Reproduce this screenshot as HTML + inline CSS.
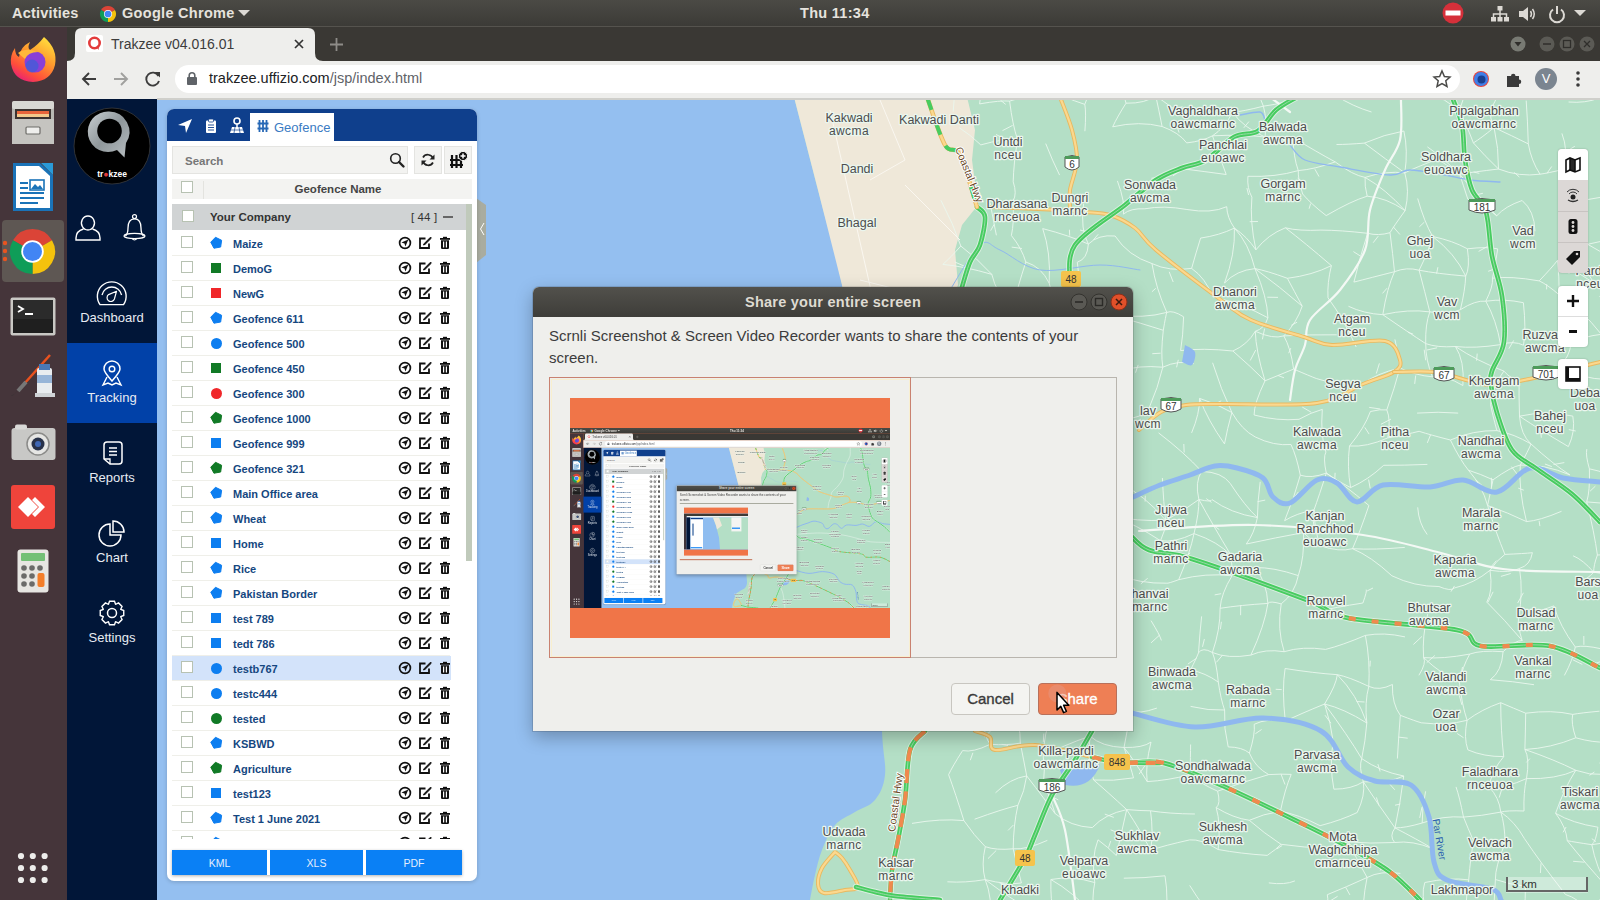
<!DOCTYPE html><html><head><meta charset="utf-8"><style>
*{box-sizing:border-box;margin:0;padding:0}
html,body{width:1600px;height:900px;overflow:hidden;background:#94bff0;font-family:"Liberation Sans",sans-serif}
.a{position:absolute}
.t{position:absolute;white-space:nowrap}
svg{position:absolute;overflow:visible}
</style></head><body><svg style="left:0;top:0" width="1600" height="900" viewBox="0 0 1600 900"><rect x="157" y="99" width="1443" height="801" fill="#b4dfc6"/><path d="M794 97 C798.0 112.5 810.0 158.7 818 190 C826.0 221.3 835.0 250.0 842 285 C849.0 320.0 855.0 360.8 860 400 C865.0 439.2 868.7 480.0 872 520 C875.3 560.0 878.3 604.8 880 640 C881.7 675.2 881.2 708.5 882 731 C882.8 753.5 886.2 763.5 885 775 C883.8 786.5 880.0 793.8 875 800 C870.0 806.2 861.7 807.8 855 812 C848.3 816.2 840.5 818.7 835 825 C829.5 831.3 825.3 841.7 822 850 C818.7 858.3 817.0 866.7 815 875 C813.0 883.3 810.8 895.8 810 900 L157 900 L157 99 L794 99 Z" fill="#94bff0"/><path d="M794 97 L967 97 L967 97 L975 130 L972 160 L978 205 L962 225 L955 250 L958 285 L940 330 L900 380 L870 420 L872 520 L860 400 L842 285 L818 190 L794 97 Z" fill="#efe8d9"/><path d="M926.6 71.1 Q946.7 74.7 960.5 74.5 M946.7 74.7 L938.9 76.2 M912.0 823.4 Q940.7 818.3 963.9 820.6 M958.9 -0.2 Q969.8 2.4 983.8 -1.0 M945.8 41.2 Q960.9 43.4 986.2 44.6 M960.5 74.5 Q954.3 89.1 953.2 111.7 M959.1 127.6 Q971.1 135.3 980.8 144.9 M940.9 200.3 Q953.1 223.2 960.8 246.0 M960.8 246.0 Q950.4 257.8 942.8 264.4 M960.8 246.0 Q976.4 257.6 991.8 274.4 M942.8 264.4 Q964.9 266.4 991.8 274.4 M964.9 266.4 L954.8 262.0 M941.7 385.7 Q966.4 395.9 981.0 412.7 M966.4 395.9 L960.9 390.9 M945.0 411.1 Q964.3 412.3 981.0 412.7 M945.0 411.1 Q954.4 432.6 961.0 447.5 M961.0 447.5 Q954.6 459.1 944.7 480.0 M954.6 459.1 L945.2 462.0 M950.3 498.4 Q978.6 497.0 995.5 504.0 M978.6 497.0 L973.5 491.4 M955.1 572.7 Q979.6 574.8 993.7 586.4 M954.5 616.7 Q976.7 614.2 988.2 613.1 M944.3 637.1 Q957.3 655.3 976.1 676.7 M956.7 679.2 Q964.0 677.7 976.1 676.7 M962.6 750.6 Q972.9 752.8 990.1 744.3 M972.9 752.8 L970.3 760.2 M962.6 750.6 Q952.1 767.0 948.6 774.7 M948.6 774.7 Q955.4 793.2 963.9 820.6 M963.9 820.6 Q974.1 835.6 985.3 846.7 M947.4 881.8 Q965.0 883.0 985.2 879.6 M984.2 -26.3 Q1010.2 -24.2 1031.3 -22.6 M1010.2 -24.2 L1019.0 -30.7 M983.8 -1.0 Q985.0 19.4 986.2 44.6 M986.2 44.6 Q1006.2 44.2 1027.9 37.6 M986.2 44.6 Q980.6 55.6 982.3 72.9 M982.3 72.9 Q1006.7 82.2 1024.8 79.9 M1006.7 82.2 L1004.3 90.5 M982.3 72.9 Q982.6 82.8 979.6 103.9 M979.6 103.9 Q1000.5 100.2 1009.6 101.1 M1000.5 100.2 L1005.7 104.4 M980.8 144.9 Q1003.8 138.3 1017.6 139.7 M1003.8 138.3 L996.0 134.5 M990.2 202.9 Q994.1 224.4 996.4 235.3 M994.1 224.4 L990.6 230.7 M991.8 274.4 Q996.1 293.2 1012.0 309.6 M984.8 295.5 Q983.3 315.9 984.1 334.8 M984.1 334.8 Q988.9 363.1 984.6 384.9 M984.6 384.9 Q1005.1 384.9 1014.1 381.5 M1005.1 384.9 L997.2 383.8 M981.0 412.7 Q989.5 421.4 990.1 435.9 M990.1 435.9 Q999.7 443.9 1010.9 441.2 M990.1 435.9 Q985.4 451.0 983.9 467.2 M985.4 451.0 L978.9 453.3 M990.1 435.9 Q997.6 454.6 1008.4 484.6 M983.9 467.2 Q1001.0 473.7 1008.4 484.6 M1001.0 473.7 L994.3 471.6 M995.5 504.0 Q984.5 526.7 984.1 540.2 M984.1 540.2 Q989.0 560.6 993.7 586.4 M993.7 586.4 Q991.8 600.6 988.2 613.1 M976.4 655.5 Q1001.4 651.8 1015.2 646.2 M976.1 676.7 Q995.5 676.3 1011.0 681.6 M976.1 676.7 Q982.2 701.9 983.0 719.4 M983.0 719.4 Q984.4 736.9 990.1 744.3 M984.4 736.9 L992.0 729.5 M990.1 744.3 Q1008.0 745.5 1020.3 743.1 M1008.0 745.5 L1001.7 744.3 M995.5 792.8 Q1009.9 778.5 1026.7 775.9 M974.6 819.2 Q1001.5 809.4 1017.9 805.3 M985.3 846.7 Q996.2 850.5 1013.2 848.8 M996.2 850.5 L988.0 858.6 M985.3 846.7 Q981.0 864.9 985.2 879.6 M985.2 879.6 Q1007.2 885.2 1021.4 883.0 M1007.2 885.2 L999.4 882.9 M985.2 879.6 Q992.6 898.2 990.1 920.5 M985.2 879.6 Q1012.2 899.8 1028.4 908.5 M990.1 920.5 Q1011.2 914.1 1028.4 908.5 M1031.3 -22.6 Q1042.7 -28.3 1062.4 -42.3 M1031.8 -2.5 Q1049.2 -3.3 1065.3 0.6 M1031.8 -2.5 Q1033.3 15.0 1027.9 37.6 M1031.8 -2.5 Q1036.3 13.7 1051.8 36.7 M1036.3 13.7 L1029.5 17.2 M1027.9 37.6 Q1032.2 53.9 1024.8 79.9 M1024.8 79.9 Q1045.1 77.8 1062.7 79.1 M1045.1 77.8 L1051.8 84.9 M1009.6 101.1 Q1034.0 93.8 1051.9 90.3 M1009.6 101.1 Q1012.6 125.4 1017.6 139.7 M1012.6 125.4 L1002.5 130.6 M1017.6 139.7 Q1013.6 163.4 1013.2 181.8 M1013.2 181.8 Q1017.3 194.0 1013.0 200.9 M1013.0 200.9 Q1014.3 222.6 1011.4 235.5 M1011.4 235.5 Q1021.9 248.5 1025.8 262.0 M1021.9 248.5 L1011.7 247.1 M1025.8 262.0 Q1041.5 266.8 1049.2 283.2 M1025.8 262.0 Q1017.3 288.2 1012.0 309.6 M1012.0 309.6 Q1033.8 316.6 1057.4 314.3 M1014.1 381.5 Q1033.1 369.1 1043.9 368.3 M1014.1 381.5 Q1024.8 399.5 1025.5 414.6 M1024.8 399.5 L1032.5 402.8 M1025.5 414.6 Q1036.1 411.1 1044.7 418.1 M1010.9 441.2 Q1026.5 446.8 1049.9 441.7 M1010.9 441.2 Q1007.6 461.4 1008.4 484.6 M1030.7 519.5 Q1053.0 511.6 1064.7 511.6 M1030.7 519.5 Q1014.1 531.9 1008.6 540.4 M1014.1 531.9 L1018.8 527.8 M1008.6 540.4 Q1025.9 544.4 1054.0 553.7 M1020.9 578.8 Q1012.3 597.4 1010.7 618.9 M1010.7 618.9 Q1013.4 628.2 1015.2 646.2 M1015.2 646.2 Q1038.3 648.1 1050.8 644.3 M1011.0 681.6 Q1033.9 682.4 1053.4 676.6 M1011.0 681.6 Q1013.7 690.9 1011.1 704.1 M1011.1 704.1 Q1020.7 723.2 1020.3 743.1 M1020.3 743.1 Q1023.7 760.2 1026.7 775.9 M1026.7 775.9 Q1024.8 790.9 1017.9 805.3 M1026.7 775.9 Q1045.8 800.6 1055.1 813.6 M1017.9 805.3 Q1013.4 825.0 1013.2 848.8 M1013.4 825.0 L1008.1 830.4 M1013.2 848.8 Q1025.9 850.0 1047.3 840.4 M1013.2 848.8 Q1016.7 864.3 1021.4 883.0 M1062.4 -42.3 Q1064.1 -18.6 1065.3 0.6 M1062.4 -42.3 Q1068.7 -18.5 1076.2 -2.2 M1065.3 0.6 Q1074.7 -6.3 1076.2 -2.2 M1065.3 0.6 Q1056.1 15.4 1051.8 36.7 M1051.8 36.7 Q1052.0 52.4 1062.7 79.1 M1052.0 52.4 L1056.3 56.9 M1062.7 79.1 Q1080.7 77.4 1090.2 79.1 M1051.9 90.3 Q1062.8 97.1 1084.8 104.4 M1045.7 143.6 Q1052.6 161.0 1059.6 175.1 M1042.7 228.6 Q1069.7 235.6 1088.4 244.1 M1069.7 235.6 L1069.4 229.7 M1042.7 228.6 Q1051.0 252.2 1049.2 283.2 M1049.2 283.2 Q1054.1 301.0 1057.4 314.3 M1057.4 314.3 Q1047.2 329.5 1043.1 338.0 M1047.2 329.5 L1042.2 332.5 M1043.1 338.0 Q1067.4 343.8 1095.1 338.2 M1043.1 338.0 Q1037.9 350.3 1043.9 368.3 M1037.9 350.3 L1033.4 346.1 M1043.9 368.3 Q1073.1 371.8 1096.6 371.7 M1073.1 371.8 L1070.4 378.2 M1043.9 368.3 Q1045.1 388.7 1044.7 418.1 M1045.1 388.7 L1040.2 383.8 M1044.7 418.1 Q1058.9 410.0 1082.9 412.3 M1044.7 418.1 Q1041.5 428.2 1049.9 441.7 M1049.9 441.7 Q1054.1 464.4 1057.7 485.3 M1054.1 464.4 L1062.9 463.7 M1057.7 485.3 Q1063.4 502.5 1064.7 511.6 M1057.7 485.3 Q1065.4 505.4 1083.6 517.7 M1064.7 511.6 Q1079.3 518.4 1083.6 517.7 M1079.3 518.4 L1083.1 515.0 M1064.7 511.6 Q1055.9 529.2 1054.0 553.7 M1064.7 511.6 Q1085.4 526.0 1094.9 547.4 M1054.0 553.7 Q1079.5 551.3 1094.9 547.4 M1051.5 573.2 Q1060.5 582.4 1077.4 584.3 M1051.5 573.2 Q1061.5 589.3 1059.7 606.2 M1059.7 606.2 Q1070.0 607.7 1077.2 615.0 M1050.8 644.3 Q1055.4 664.8 1053.4 676.6 M1053.4 676.6 Q1047.4 690.9 1052.3 712.8 M1052.3 712.8 Q1043.8 733.5 1043.2 756.1 M1043.8 733.5 L1043.3 741.9 M1043.2 756.1 Q1062.6 745.7 1089.9 736.1 M1043.2 756.1 Q1045.3 770.1 1043.5 782.7 M1043.5 782.7 Q1049.6 795.4 1055.1 813.6 M1049.6 795.4 L1058.3 799.9 M1055.1 813.6 Q1070.5 826.5 1092.3 827.6 M1050.9 879.5 Q1072.1 875.4 1094.8 882.6 M1072.1 875.4 L1073.2 869.7 M1050.9 879.5 Q1050.4 901.1 1053.6 911.5 M1050.4 901.1 L1042.8 905.5 M1050.9 879.5 Q1073.2 892.1 1094.0 915.1 M1053.6 911.5 Q1079.8 912.6 1094.0 915.1 M1079.8 912.6 L1076.4 918.8 M1094.0 -34.3 Q1105.2 -32.6 1120.7 -35.5 M1094.0 -34.3 Q1079.6 -14.8 1076.2 -2.2 M1079.6 -14.8 L1078.2 -4.0 M1076.2 -2.2 Q1091.7 13.1 1099.2 22.2 M1091.7 13.1 L1089.2 23.7 M1099.2 22.2 Q1119.2 19.5 1127.6 23.7 M1119.2 19.5 L1115.1 8.3 M1099.2 22.2 Q1100.2 45.7 1112.8 76.0 M1090.2 79.1 Q1089.5 93.8 1084.8 104.4 M1089.5 93.8 L1095.4 89.7 M1084.8 104.4 Q1086.3 112.5 1084.9 131.2 M1083.6 203.9 Q1080.1 230.0 1088.4 244.1 M1080.1 230.0 L1089.0 232.5 M1088.4 244.1 Q1098.2 234.3 1115.1 236.0 M1098.2 234.3 L1093.4 239.9 M1088.4 244.1 Q1087.4 259.2 1077.3 262.2 M1077.3 262.2 Q1079.2 281.4 1082.0 300.5 M1082.0 300.5 Q1101.1 310.9 1113.0 315.0 M1082.0 300.5 Q1084.0 323.0 1095.1 338.2 M1096.6 371.7 Q1105.0 366.1 1120.4 371.1 M1096.6 371.7 Q1092.1 388.0 1082.9 412.3 M1082.9 412.3 Q1105.6 420.7 1126.2 418.3 M1105.6 420.7 L1106.7 415.5 M1082.9 412.3 Q1082.8 428.0 1078.1 453.6 M1078.1 453.6 Q1102.4 451.9 1121.8 446.5 M1078.1 453.6 Q1085.4 467.3 1096.0 471.9 M1085.4 467.3 L1091.9 463.4 M1077.4 584.3 Q1094.7 575.4 1114.9 574.3 M1077.4 584.3 Q1080.7 594.2 1077.2 615.0 M1089.3 656.3 Q1103.2 647.9 1124.2 646.5 M1089.3 656.3 Q1098.4 669.7 1119.3 681.8 M1098.4 720.1 Q1119.9 714.8 1130.2 710.6 M1098.4 720.1 Q1091.0 724.3 1089.9 736.1 M1091.0 724.3 L1084.5 722.5 M1089.9 736.1 Q1101.8 746.8 1124.0 747.5 M1089.9 736.1 Q1087.4 763.9 1093.7 780.0 M1087.4 763.9 L1088.5 758.7 M1093.7 780.0 Q1113.1 781.4 1133.5 777.9 M1093.7 780.0 Q1107.7 792.1 1126.7 809.6 M1092.3 827.6 Q1104.8 814.1 1126.7 809.6 M1104.8 814.1 L1113.8 817.4 M1098.0 839.8 Q1108.5 847.6 1116.3 855.5 M1108.5 847.6 L1110.7 841.1 M1098.0 839.8 Q1090.9 858.1 1094.8 882.6 M1094.8 882.6 Q1091.6 897.1 1094.0 915.1 M1094.0 915.1 Q1097.1 919.1 1111.5 925.8 M1097.1 919.1 L1088.5 920.3 M1112.8 -4.3 Q1131.1 3.4 1154.4 2.8 M1131.1 3.4 L1127.2 7.2 M1127.6 23.7 Q1124.2 52.2 1112.8 76.0 M1112.8 76.0 Q1124.7 94.7 1126.0 103.2 M1126.0 103.2 Q1145.7 103.6 1155.7 95.6 M1126.0 103.2 Q1117.2 117.0 1112.7 126.8 M1112.7 126.8 Q1139.5 120.7 1162.1 126.5 M1117.4 180.9 Q1125.6 203.1 1123.4 214.1 M1123.4 214.1 Q1130.4 208.1 1144.8 208.8 M1115.1 236.0 Q1127.9 255.8 1152.0 263.6 M1113.0 315.0 Q1144.3 318.8 1166.8 312.4 M1113.0 315.0 Q1143.4 324.0 1163.3 330.3 M1121.3 328.8 Q1117.0 350.1 1120.4 371.1 M1120.4 371.1 Q1138.2 364.9 1162.8 367.2 M1138.2 364.9 L1135.5 372.7 M1126.2 418.3 Q1140.4 418.8 1148.8 408.8 M1140.4 418.8 L1138.0 426.4 M1126.2 418.3 Q1119.1 433.0 1121.8 446.5 M1119.1 433.0 L1120.2 443.6 M1119.3 482.7 Q1145.3 495.7 1165.6 520.2 M1145.3 495.7 L1145.1 501.6 M1112.5 515.8 Q1135.9 521.7 1165.6 520.2 M1112.5 515.8 Q1113.9 533.9 1114.0 546.1 M1112.5 515.8 Q1136.1 524.7 1160.5 540.7 M1114.0 546.1 Q1112.3 561.2 1114.9 574.3 M1114.9 574.3 Q1140.8 583.9 1166.8 583.2 M1140.8 583.9 L1147.7 578.3 M1113.9 608.4 Q1115.7 629.2 1124.2 646.5 M1119.3 681.8 Q1130.6 694.8 1130.2 710.6 M1130.6 694.8 L1123.6 698.3 M1130.2 710.6 Q1138.4 714.6 1156.9 708.1 M1130.2 710.6 Q1127.7 730.2 1124.0 747.5 M1124.0 747.5 Q1142.6 748.0 1151.0 742.1 M1124.0 747.5 Q1131.2 768.5 1133.5 777.9 M1124.0 747.5 Q1133.0 758.6 1147.2 781.6 M1126.7 809.6 Q1141.4 810.8 1150.5 810.8 M1126.7 809.6 Q1121.2 834.1 1116.3 855.5 M1121.2 834.1 L1110.6 829.8 M1126.7 809.6 Q1141.5 832.5 1150.7 850.2 M1123.8 878.2 Q1143.7 878.2 1165.0 875.8 M1111.5 925.8 Q1138.3 928.7 1164.6 926.5 M1154.4 2.8 Q1170.4 -3.2 1195.6 0.8 M1154.4 2.8 Q1155.6 27.2 1157.4 45.4 M1157.4 45.4 Q1175.4 41.9 1193.8 44.1 M1175.4 41.9 L1170.3 39.2 M1157.4 45.4 Q1159.1 58.9 1165.8 66.9 M1165.8 66.9 Q1186.9 65.6 1196.6 62.2 M1155.7 95.6 Q1173.3 108.7 1179.3 112.5 M1173.3 108.7 L1182.6 106.8 M1155.7 95.6 Q1158.6 108.6 1162.1 126.5 M1162.1 126.5 Q1179.1 132.6 1186.7 142.9 M1179.1 132.6 L1177.2 127.0 M1151.4 178.3 Q1172.9 175.9 1183.6 168.9 M1172.9 175.9 L1180.6 170.3 M1144.8 208.8 Q1163.6 205.2 1186.9 209.5 M1152.0 263.6 Q1169.2 271.8 1191.6 268.4 M1169.2 271.8 L1173.2 282.0 M1152.0 263.6 Q1155.8 288.3 1166.8 312.4 M1155.8 288.3 L1151.9 291.8 M1166.8 312.4 Q1172.7 309.8 1183.6 316.8 M1166.8 312.4 Q1165.7 315.7 1163.3 330.3 M1163.3 330.3 Q1160.6 353.2 1162.8 367.2 M1160.6 353.2 L1152.3 353.7 M1162.8 367.2 Q1178.3 359.8 1193.8 363.7 M1178.3 359.8 L1176.6 367.3 M1162.8 367.2 Q1158.3 387.0 1148.8 408.8 M1158.6 432.9 Q1184.2 452.5 1201.7 471.4 M1184.2 452.5 L1183.8 444.0 M1162.4 478.0 Q1163.6 503.8 1165.6 520.2 M1165.6 520.2 Q1181.4 512.7 1198.9 499.5 M1165.6 520.2 Q1165.5 531.2 1160.5 540.7 M1160.5 540.7 Q1174.3 543.0 1194.0 533.6 M1174.3 543.0 L1175.6 549.3 M1166.8 583.2 Q1168.0 583.6 1178.7 579.7 M1151.0 620.6 Q1159.8 634.9 1161.4 640.4 M1159.8 634.9 L1151.0 642.9 M1151.0 742.1 Q1145.1 765.5 1147.2 781.6 M1145.1 765.5 L1139.1 774.1 M1147.2 781.6 Q1167.5 780.5 1190.0 774.7 M1150.5 810.8 Q1169.0 813.8 1194.9 814.0 M1150.5 810.8 Q1153.5 831.8 1150.7 850.2 M1150.7 850.2 Q1164.3 845.5 1189.7 839.9 M1165.0 875.8 Q1169.1 900.1 1164.6 926.5 M1164.6 926.5 Q1177.6 917.6 1201.3 919.5 M1192.6 -32.9 Q1205.4 -38.0 1215.2 -38.8 M1192.6 -32.9 Q1190.6 -13.3 1195.6 0.8 M1190.6 -13.3 L1197.8 -7.0 M1193.8 44.1 Q1210.1 45.7 1234.5 45.4 M1193.8 44.1 Q1215.8 56.0 1234.8 78.2 M1196.6 62.2 Q1215.5 73.5 1234.8 78.2 M1179.3 112.5 Q1207.6 113.0 1232.6 112.4 M1186.7 142.9 Q1202.8 141.1 1212.5 135.8 M1183.6 168.9 Q1204.9 171.6 1226.2 174.5 M1186.9 209.5 Q1211.2 213.8 1226.7 206.7 M1200.6 238.1 Q1219.2 235.4 1234.4 228.1 M1200.6 238.1 Q1196.0 252.7 1191.6 268.4 M1191.6 268.4 Q1205.4 277.9 1212.8 296.7 M1183.6 316.8 Q1183.1 336.0 1180.6 350.6 M1180.6 350.6 Q1202.6 347.8 1232.9 351.0 M1199.6 398.4 Q1216.3 403.4 1231.9 412.5 M1216.3 403.4 L1221.2 400.8 M1199.6 398.4 Q1199.8 413.4 1191.6 432.9 M1199.6 398.4 Q1207.9 420.6 1224.5 443.9 M1201.7 471.4 Q1221.9 472.0 1230.2 483.4 M1201.7 471.4 Q1194.6 481.9 1198.9 499.5 M1198.9 499.5 Q1211.5 502.4 1212.0 499.6 M1211.5 502.4 L1206.3 498.6 M1198.9 499.5 Q1199.1 513.0 1194.0 533.6 M1198.9 499.5 Q1212.9 525.1 1231.1 555.4 M1212.9 525.1 L1219.3 529.6 M1194.0 533.6 Q1217.8 541.6 1231.1 555.4 M1194.0 533.6 Q1190.1 552.9 1178.7 579.7 M1190.1 552.9 L1182.3 561.2 M1178.7 579.7 Q1206.3 572.6 1232.0 575.8 M1201.6 616.4 Q1199.9 632.1 1198.5 652.8 M1198.5 652.8 Q1202.5 646.8 1212.4 652.5 M1202.5 646.8 L1204.4 639.0 M1198.5 652.8 Q1196.4 658.4 1190.5 669.9 M1196.4 658.4 L1187.9 664.0 M1190.5 669.9 Q1205.7 673.0 1218.3 682.1 M1190.6 706.4 Q1208.6 710.8 1224.6 710.0 M1190.6 744.5 Q1190.5 755.3 1190.0 774.7 M1190.0 774.7 Q1200.1 783.5 1217.6 791.2 M1189.7 839.9 Q1201.2 838.8 1218.1 849.5 M1189.7 885.4 Q1204.3 909.4 1217.7 921.7 M1201.3 919.5 Q1214.4 922.6 1217.7 921.7 M1220.1 4.9 Q1233.9 11.2 1252.1 9.0 M1233.9 11.2 L1241.3 10.7 M1220.1 4.9 Q1228.6 22.9 1234.5 45.4 M1220.1 4.9 Q1239.7 11.5 1250.4 27.6 M1234.8 78.2 Q1244.8 65.8 1253.2 63.9 M1232.6 112.4 Q1243.1 111.3 1263.4 106.2 M1232.6 112.4 Q1223.9 128.6 1212.5 135.8 M1223.9 128.6 L1229.7 124.8 M1232.6 112.4 Q1243.8 127.8 1265.0 137.0 M1243.8 127.8 L1248.9 121.6 M1212.5 135.8 Q1242.5 134.3 1265.0 137.0 M1242.5 134.3 L1249.6 134.5 M1212.5 135.8 Q1219.3 156.1 1226.2 174.5 M1219.3 156.1 L1230.5 156.3 M1226.7 206.7 Q1227.1 217.6 1234.4 228.1 M1234.4 228.1 Q1246.8 236.4 1255.9 249.8 M1234.4 228.1 Q1235.4 254.2 1224.5 283.0 M1234.4 228.1 Q1248.8 243.3 1254.9 268.6 M1224.5 283.0 Q1236.5 270.3 1254.9 268.6 M1212.8 296.7 Q1243.2 304.0 1267.9 317.8 M1232.9 351.0 Q1247.5 344.6 1255.3 331.3 M1232.9 351.0 Q1251.0 366.8 1265.0 380.8 M1212.6 362.8 Q1220.8 389.2 1231.9 412.5 M1231.9 412.5 Q1227.3 428.5 1224.5 443.9 M1231.9 412.5 Q1241.9 429.9 1255.1 436.9 M1230.2 483.4 Q1244.9 506.0 1257.4 517.6 M1212.0 499.6 Q1230.5 513.2 1257.4 517.6 M1231.1 555.4 Q1232.1 565.0 1232.0 575.8 M1232.0 575.8 Q1221.1 593.7 1220.1 608.3 M1221.1 593.7 L1214.7 594.9 M1220.1 608.3 Q1240.7 605.1 1267.9 603.4 M1240.7 605.1 L1240.6 615.2 M1220.1 608.3 Q1220.4 629.3 1212.4 652.5 M1220.4 629.3 L1221.4 621.8 M1212.4 652.5 Q1227.8 659.0 1250.9 655.1 M1212.4 652.5 Q1216.4 662.3 1218.3 682.1 M1216.4 662.3 L1222.5 655.2 M1218.3 682.1 Q1220.8 699.5 1224.6 710.0 M1224.6 710.0 Q1223.6 728.7 1228.2 746.9 M1228.2 746.9 Q1242.2 747.1 1249.4 753.1 M1217.6 791.2 Q1241.4 782.5 1268.7 774.6 M1241.4 782.5 L1229.9 781.7 M1217.6 791.2 Q1220.9 804.0 1216.2 807.6 M1216.2 807.6 Q1233.3 818.1 1249.3 820.3 M1216.2 807.6 Q1221.1 824.4 1218.1 849.5 M1218.1 849.5 Q1240.1 853.6 1267.2 855.4 M1217.7 921.7 Q1238.3 916.9 1254.9 908.9 M1252.2 -33.5 Q1264.1 -33.6 1286.6 -23.5 M1264.1 -33.6 L1257.1 -35.3 M1252.2 -33.5 Q1257.1 -17.4 1252.1 9.0 M1252.1 9.0 Q1256.8 17.7 1250.4 27.6 M1250.4 27.6 Q1269.7 45.1 1287.4 60.4 M1253.2 63.9 Q1254.0 85.7 1263.4 106.2 M1254.0 85.7 L1247.1 95.1 M1263.4 106.2 Q1275.2 104.5 1282.9 102.6 M1263.4 106.2 Q1267.3 120.5 1265.0 137.0 M1265.0 137.0 Q1277.4 137.0 1293.0 137.6 M1247.9 176.3 Q1274.9 177.4 1298.3 170.6 M1247.9 176.3 Q1246.9 188.1 1251.9 197.2 M1246.9 188.1 L1248.6 195.0 M1251.9 197.2 Q1249.7 221.7 1255.9 249.8 M1249.7 221.7 L1257.9 221.5 M1255.9 249.8 Q1268.0 234.5 1285.4 227.8 M1254.9 268.6 Q1266.7 270.7 1287.4 278.3 M1254.9 268.6 Q1267.3 297.2 1267.9 317.8 M1267.3 297.2 L1278.0 297.4 M1254.9 268.6 Q1280.6 287.4 1302.2 306.1 M1267.9 317.8 Q1264.6 328.6 1255.3 331.3 M1264.6 328.6 L1262.4 339.3 M1255.3 331.3 Q1273.2 339.5 1283.8 335.9 M1255.3 331.3 Q1255.7 350.1 1265.0 380.8 M1255.7 350.1 L1250.2 360.5 M1265.0 380.8 Q1278.1 375.5 1293.6 369.1 M1278.1 375.5 L1284.0 377.8 M1265.0 380.8 Q1254.0 403.6 1254.1 415.0 M1254.1 415.0 Q1277.2 421.2 1299.0 419.3 M1255.1 436.9 Q1274.0 446.2 1291.0 444.5 M1260.2 481.8 Q1257.6 501.6 1257.4 517.6 M1257.6 501.6 L1265.2 500.1 M1257.4 517.6 Q1254.3 533.6 1246.3 544.0 M1246.3 544.0 Q1275.9 537.6 1303.5 532.6 M1255.1 567.6 Q1273.3 567.1 1298.3 575.6 M1255.1 567.6 Q1266.7 582.0 1267.9 603.4 M1267.9 603.4 Q1269.6 600.5 1281.2 603.9 M1267.9 603.4 Q1264.8 625.1 1250.9 655.1 M1250.9 655.1 Q1265.1 648.6 1284.2 651.7 M1254.2 724.3 Q1267.1 717.9 1285.3 721.2 M1254.2 724.3 Q1255.4 733.7 1249.4 753.1 M1255.4 733.7 L1261.6 729.5 M1249.4 753.1 Q1255.2 767.3 1268.7 774.6 M1268.7 774.6 Q1280.9 773.8 1291.2 774.4 M1280.9 773.8 L1285.0 784.5 M1249.3 820.3 Q1262.9 813.9 1280.4 811.3 M1249.3 820.3 Q1263.5 832.8 1281.0 844.3 M1267.2 855.4 Q1276.7 849.0 1281.0 844.3 M1276.7 849.0 L1282.2 845.5 M1268.8 882.9 Q1284.9 885.2 1294.9 880.9 M1254.9 908.9 Q1278.9 915.2 1291.4 921.0 M1286.6 -23.5 Q1305.9 -30.6 1321.6 -37.4 M1281.7 -7.6 Q1286.9 11.3 1288.3 23.2 M1288.3 23.2 Q1300.3 34.7 1324.0 35.0 M1288.3 23.2 Q1289.1 39.5 1287.4 60.4 M1282.9 102.6 Q1309.6 94.9 1335.9 95.6 M1309.6 94.9 L1318.7 87.3 M1293.0 137.6 Q1293.5 157.6 1298.3 170.6 M1293.0 137.6 Q1317.4 152.3 1335.2 161.9 M1298.3 170.6 Q1314.9 169.2 1335.2 161.9 M1314.9 169.2 L1319.0 176.5 M1298.3 170.6 Q1297.7 178.2 1302.7 194.0 M1297.7 178.2 L1304.0 182.9 M1302.7 194.0 Q1310.6 203.6 1326.2 215.6 M1310.6 203.6 L1309.1 208.7 M1285.4 227.8 Q1298.8 231.2 1320.9 230.1 M1285.4 227.8 Q1304.7 242.7 1331.4 265.6 M1287.4 278.3 Q1312.5 275.2 1331.4 265.6 M1287.4 278.3 Q1293.8 290.4 1302.2 306.1 M1302.2 306.1 Q1297.1 322.2 1283.8 335.9 M1297.1 322.2 L1291.3 325.3 M1283.8 335.9 Q1309.1 334.5 1336.7 334.8 M1283.8 335.9 Q1290.8 348.1 1293.6 369.1 M1290.8 348.1 L1288.7 353.2 M1293.6 369.1 Q1309.8 376.0 1316.3 378.5 M1299.0 419.3 Q1311.3 412.3 1322.3 409.4 M1311.3 412.3 L1302.2 407.0 M1291.0 444.5 Q1296.4 455.8 1300.3 475.2 M1300.3 475.2 Q1311.2 478.8 1326.3 473.1 M1300.3 475.2 Q1294.5 497.0 1284.6 520.7 M1294.5 497.0 L1298.4 491.9 M1284.6 520.7 Q1296.3 513.3 1314.0 509.9 M1303.5 532.6 Q1315.9 544.3 1320.5 545.8 M1303.5 532.6 Q1304.6 557.4 1298.3 575.6 M1298.3 575.6 Q1294.9 593.3 1281.2 603.9 M1294.9 593.3 L1288.8 592.0 M1281.2 603.9 Q1276.8 629.2 1284.2 651.7 M1284.2 651.7 Q1302.6 646.0 1325.6 649.4 M1285.1 668.5 Q1313.4 673.0 1337.3 674.7 M1285.1 668.5 Q1281.7 689.6 1285.3 721.2 M1281.7 689.6 L1275.7 689.3 M1285.3 721.2 Q1299.1 714.4 1324.6 704.0 M1291.2 774.4 Q1284.9 789.3 1280.4 811.3 M1280.4 811.3 Q1298.6 814.6 1320.1 825.7 M1281.0 844.3 Q1304.9 847.7 1326.1 848.2 M1321.6 -37.4 Q1334.8 -33.8 1355.0 -25.8 M1321.6 -37.4 Q1325.7 -21.5 1335.2 1.9 M1325.7 -21.5 L1318.1 -24.3 M1324.0 35.0 Q1340.3 36.2 1352.7 27.2 M1340.3 36.2 L1343.6 40.1 M1324.0 35.0 Q1329.9 54.0 1325.0 64.0 M1329.9 54.0 L1335.6 54.2 M1325.0 64.0 Q1347.4 67.9 1368.0 75.3 M1335.9 95.6 Q1352.7 106.4 1371.5 112.0 M1336.5 144.5 Q1347.2 144.5 1364.4 143.1 M1335.2 161.9 Q1353.1 175.3 1365.1 177.4 M1326.2 215.6 Q1351.6 200.8 1367.2 196.2 M1320.9 230.1 Q1340.7 230.2 1367.6 233.3 M1331.4 265.6 Q1327.1 283.2 1328.0 297.8 M1328.0 297.8 Q1343.8 319.3 1356.2 347.0 M1316.3 378.5 Q1335.4 385.1 1362.7 383.9 M1322.3 409.4 Q1320.3 436.2 1325.9 452.1 M1325.9 452.1 Q1322.9 457.3 1326.3 473.1 M1326.3 473.1 Q1334.8 479.5 1350.6 487.6 M1334.8 479.5 L1335.1 472.8 M1326.3 473.1 Q1319.1 495.8 1314.0 509.9 M1326.3 473.1 Q1343.3 483.9 1368.9 505.5 M1314.0 509.9 Q1314.6 532.1 1320.5 545.8 M1314.6 532.1 L1313.4 521.3 M1320.5 545.8 Q1339.3 552.3 1352.5 548.7 M1316.2 611.9 Q1335.0 607.3 1362.9 603.0 M1325.6 649.4 Q1341.9 645.4 1365.4 635.4 M1337.3 674.7 Q1348.5 676.7 1368.8 686.4 M1337.3 674.7 Q1336.4 684.6 1324.6 704.0 M1337.3 674.7 Q1356.7 694.1 1366.8 723.0 M1324.6 704.0 Q1344.0 708.7 1366.8 723.0 M1324.6 704.0 Q1330.9 723.2 1333.2 741.6 M1330.9 723.2 L1325.0 715.2 M1324.6 704.0 Q1348.1 735.8 1361.7 758.6 M1333.2 741.6 Q1329.1 764.6 1333.9 789.2 M1333.9 789.2 Q1351.6 789.2 1363.3 781.8 M1320.1 825.7 Q1342.1 819.9 1357.2 812.5 M1326.1 848.2 Q1338.4 843.2 1348.5 841.9 M1338.4 843.2 L1346.5 843.2 M1327.3 894.7 Q1345.7 887.3 1367.1 877.5 M1345.7 887.3 L1349.9 894.9 M1327.3 894.7 Q1328.9 901.7 1325.8 917.6 M1328.9 901.7 L1337.6 896.3 M1355.0 -25.8 Q1372.6 -30.4 1398.7 -33.6 M1355.0 -25.8 Q1357.5 -19.8 1360.1 -3.8 M1360.1 -3.8 Q1378.5 0.7 1389.6 -5.5 M1360.1 -3.8 Q1360.5 11.6 1352.7 27.2 M1360.5 11.6 L1362.0 18.8 M1360.1 -3.8 Q1368.0 21.6 1386.5 37.5 M1352.7 27.2 Q1358.5 56.5 1368.0 75.3 M1358.5 56.5 L1351.7 59.6 M1364.4 143.1 Q1384.3 134.3 1403.9 131.0 M1364.4 143.1 Q1386.4 159.7 1404.8 172.9 M1365.1 177.4 Q1386.0 170.5 1404.8 172.9 M1365.1 177.4 Q1364.4 185.7 1367.2 196.2 M1365.1 177.4 Q1385.4 188.9 1405.1 210.6 M1367.2 196.2 Q1386.0 197.4 1405.1 210.6 M1367.6 233.3 Q1378.3 236.1 1390.0 232.7 M1378.3 236.1 L1373.2 242.7 M1367.6 233.3 Q1360.2 255.9 1353.9 282.1 M1360.2 255.9 L1353.4 251.6 M1353.9 282.1 Q1370.9 277.7 1394.5 271.7 M1348.5 306.3 Q1363.7 313.6 1382.8 314.7 M1362.7 383.9 Q1376.3 373.5 1399.9 368.0 M1376.3 373.5 L1379.4 363.4 M1370.4 411.5 Q1380.3 409.0 1386.8 409.9 M1380.3 409.0 L1369.2 407.4 M1370.4 411.5 Q1364.8 427.4 1349.5 446.0 M1364.8 427.4 L1369.1 434.1 M1349.5 446.0 Q1366.4 447.4 1387.8 437.9 M1349.5 446.0 Q1346.9 466.8 1350.6 487.6 M1350.6 487.6 Q1368.6 479.6 1383.7 465.3 M1368.6 479.6 L1370.2 488.4 M1368.9 505.5 Q1360.6 530.5 1352.5 548.7 M1352.5 548.7 Q1374.0 550.0 1404.8 547.4 M1352.5 548.7 Q1371.1 556.4 1391.9 575.8 M1366.2 589.6 Q1367.2 590.9 1362.9 603.0 M1367.2 590.9 L1373.0 588.0 M1365.4 635.4 Q1384.1 632.0 1405.0 636.9 M1365.4 635.4 Q1370.3 660.7 1368.8 686.4 M1370.3 660.7 L1370.0 666.5 M1368.8 686.4 Q1379.2 691.2 1392.4 684.5 M1368.8 686.4 Q1364.5 702.0 1366.8 723.0 M1364.5 702.0 L1356.6 701.5 M1366.8 723.0 Q1365.5 740.9 1361.7 758.6 M1361.7 758.6 Q1358.8 766.7 1363.3 781.8 M1361.7 758.6 Q1380.1 771.5 1403.7 776.0 M1380.1 771.5 L1377.9 764.1 M1363.3 781.8 Q1388.9 783.2 1403.7 776.0 M1388.9 783.2 L1394.8 789.8 M1363.3 781.8 Q1365.6 795.1 1357.2 812.5 M1363.3 781.8 Q1379.0 805.6 1395.0 827.9 M1379.0 805.6 L1376.4 797.4 M1348.5 841.9 Q1369.8 843.9 1394.7 842.5 M1348.5 841.9 Q1354.8 855.5 1367.1 877.5 M1354.8 855.5 L1347.2 847.0 M1367.1 877.5 Q1380.2 870.5 1400.4 873.4 M1380.2 870.5 L1383.4 863.8 M1367.1 877.5 Q1361.7 903.5 1363.7 924.6 M1361.7 903.5 L1366.7 902.0 M1363.7 924.6 Q1374.0 921.9 1385.6 919.2 M1374.0 921.9 L1381.4 917.6 M1398.7 -33.6 Q1415.1 -29.2 1422.5 -28.7 M1398.7 -33.6 Q1391.7 -23.0 1389.6 -5.5 M1389.6 -5.5 Q1386.7 14.9 1386.5 37.5 M1386.5 37.5 Q1414.0 35.8 1434.4 37.5 M1403.9 131.0 Q1408.2 150.4 1404.8 172.9 M1404.8 172.9 Q1415.2 167.5 1437.3 159.3 M1404.8 172.9 Q1410.0 190.7 1405.1 210.6 M1405.1 210.6 Q1393.3 226.9 1390.0 232.7 M1393.3 226.9 L1399.9 234.5 M1390.0 232.7 Q1392.9 254.8 1394.5 271.7 M1394.5 271.7 Q1406.6 266.8 1419.1 270.2 M1394.5 271.7 Q1387.0 288.2 1382.8 314.7 M1387.0 288.2 L1382.5 293.4 M1382.8 314.7 Q1409.0 308.8 1429.8 311.9 M1382.8 314.7 Q1408.1 332.2 1425.7 343.6 M1408.1 332.2 L1413.2 334.2 M1394.9 339.4 Q1398.7 354.7 1399.9 368.0 M1399.9 368.0 Q1415.7 375.5 1432.4 376.8 M1415.7 375.5 L1414.7 383.9 M1399.9 368.0 Q1394.7 387.7 1386.8 409.9 M1386.8 409.9 Q1391.0 419.1 1387.8 437.9 M1391.0 419.1 L1380.9 424.3 M1387.8 437.9 Q1406.9 434.4 1419.1 431.3 M1383.7 465.3 Q1403.4 465.4 1427.4 464.4 M1391.9 575.8 Q1414.3 586.7 1438.9 586.5 M1392.4 684.5 Q1391.9 704.2 1400.3 715.3 M1400.3 715.3 Q1415.9 721.3 1421.3 722.8 M1400.3 715.3 Q1398.6 737.1 1397.4 758.5 M1398.6 737.1 L1407.7 738.2 M1403.7 776.0 Q1400.3 804.0 1395.0 827.9 M1400.3 804.0 L1395.0 805.2 M1395.0 827.9 Q1405.2 828.0 1422.2 823.0 M1395.0 827.9 Q1388.9 836.2 1394.7 842.5 M1395.0 827.9 Q1417.6 839.6 1433.0 848.8 M1394.7 842.5 Q1412.6 840.2 1433.0 848.8 M1422.5 -28.7 Q1442.9 -38.3 1465.0 -36.1 M1442.9 -38.3 L1448.6 -41.1 M1422.5 -28.7 Q1430.7 -13.8 1433.4 -4.3 M1433.4 -4.3 Q1432.5 17.5 1434.4 37.5 M1434.4 37.5 Q1444.6 33.7 1460.9 33.4 M1432.9 67.0 Q1435.3 82.1 1426.4 92.6 M1426.4 92.6 Q1446.2 98.2 1459.0 111.6 M1427.4 146.9 Q1440.9 156.0 1459.6 174.1 M1440.9 156.0 L1435.5 154.9 M1437.3 159.3 Q1444.4 163.0 1459.6 174.1 M1417.7 198.5 Q1424.3 222.2 1432.7 236.5 M1424.3 222.2 L1419.4 226.8 M1432.7 236.5 Q1452.8 240.7 1467.4 248.8 M1432.7 236.5 Q1428.4 251.7 1419.1 270.2 M1432.7 236.5 Q1455.0 253.3 1465.7 276.1 M1419.1 270.2 Q1436.6 273.6 1465.7 276.1 M1436.6 273.6 L1437.9 267.2 M1419.1 270.2 Q1424.9 292.1 1429.8 311.9 M1429.8 311.9 Q1450.0 314.5 1460.4 309.7 M1429.8 311.9 Q1425.2 324.2 1425.7 343.6 M1425.7 343.6 Q1437.1 347.8 1455.4 346.5 M1437.1 347.8 L1427.0 350.0 M1425.7 343.6 Q1425.7 360.3 1432.4 376.8 M1425.7 360.3 L1424.2 349.7 M1432.4 376.8 Q1446.1 375.3 1462.9 385.5 M1417.1 413.1 Q1438.7 411.4 1458.2 413.1 M1419.1 431.3 Q1430.5 435.0 1450.4 440.0 M1430.5 435.0 L1427.3 442.9 M1417.7 507.4 Q1418.7 523.3 1427.2 534.5 M1438.9 586.5 Q1450.9 591.7 1454.7 587.9 M1450.9 591.7 L1454.5 585.9 M1427.7 614.1 Q1422.0 636.4 1423.6 657.6 M1422.0 636.4 L1413.4 644.5 M1423.6 657.6 Q1442.7 659.2 1469.7 654.1 M1423.6 657.6 Q1426.7 662.7 1418.9 675.3 M1426.7 662.7 L1434.8 655.5 M1423.6 657.6 Q1442.4 675.2 1459.4 682.2 M1421.3 722.8 Q1446.7 725.8 1467.1 720.3 M1425.6 791.3 Q1422.0 807.1 1422.2 823.0 M1422.0 807.1 L1419.7 817.9 M1422.2 823.0 Q1443.0 815.4 1463.5 817.1 M1424.8 882.5 Q1449.3 877.3 1468.7 879.8 M1424.8 882.5 Q1420.6 895.0 1426.9 913.6 M1426.9 913.6 Q1442.5 921.3 1467.4 928.8 M1442.5 921.3 L1435.0 913.4 M1465.0 -36.1 Q1475.7 -30.3 1490.6 -32.4 M1457.3 6.5 Q1465.0 22.6 1460.9 33.4 M1465.0 22.6 L1470.1 31.9 M1460.9 33.4 Q1475.9 39.5 1488.0 37.0 M1471.1 66.9 Q1483.3 74.1 1505.4 71.9 M1483.3 74.1 L1491.6 65.9 M1471.1 66.9 Q1468.3 85.8 1459.0 111.6 M1459.0 111.6 Q1465.3 121.5 1473.4 142.9 M1473.4 142.9 Q1480.5 138.6 1494.1 127.5 M1473.4 142.9 Q1484.4 155.6 1498.5 169.0 M1459.6 174.1 Q1473.7 172.0 1498.5 169.0 M1473.7 172.0 L1479.3 173.4 M1459.6 174.1 Q1462.8 183.8 1467.8 199.1 M1459.6 174.1 Q1475.7 194.9 1496.7 215.8 M1475.7 194.9 L1482.9 193.3 M1467.8 199.1 Q1487.7 207.7 1496.7 215.8 M1487.7 207.7 L1475.9 209.5 M1467.4 248.8 Q1487.6 246.4 1497.7 248.9 M1487.6 246.4 L1478.6 251.4 M1467.4 248.8 Q1470.2 267.7 1465.7 276.1 M1465.7 276.1 Q1465.2 289.9 1460.4 309.7 M1460.4 309.7 Q1475.6 300.0 1485.8 301.2 M1455.4 346.5 Q1474.4 348.7 1500.6 344.6 M1455.4 346.5 Q1464.8 360.9 1462.9 385.5 M1455.4 346.5 Q1476.6 360.7 1503.9 371.1 M1476.6 360.7 L1477.2 353.6 M1450.4 440.0 Q1473.0 430.1 1496.9 430.6 M1450.4 440.0 Q1459.8 459.5 1468.4 470.2 M1468.4 470.2 Q1480.5 474.0 1493.0 479.8 M1468.4 470.2 Q1482.3 485.8 1487.6 505.5 M1482.3 485.8 L1475.9 479.9 M1454.7 587.9 Q1474.2 583.3 1490.0 570.3 M1469.7 654.1 Q1480.8 650.0 1503.1 651.7 M1469.7 654.1 Q1462.5 667.0 1459.4 682.2 M1462.5 667.0 L1460.9 675.0 M1459.4 682.2 Q1461.9 704.9 1467.1 720.3 M1461.9 704.9 L1459.3 695.3 M1467.1 720.3 Q1481.6 709.4 1500.7 702.7 M1467.1 720.3 Q1463.5 737.7 1467.9 749.9 M1463.5 737.7 L1457.2 733.5 M1467.9 749.9 Q1483.9 756.8 1503.7 756.6 M1456.0 786.9 Q1459.4 796.3 1463.5 817.1 M1463.5 817.1 Q1481.2 816.0 1500.8 812.1 M1463.5 817.1 Q1467.5 827.2 1473.7 841.3 M1473.7 841.3 Q1489.9 841.8 1505.1 843.2 M1473.7 841.3 Q1470.6 856.0 1468.7 879.8 M1468.7 879.8 Q1464.6 900.6 1467.4 928.8 M1490.6 -32.4 Q1512.8 -33.6 1531.7 -31.4 M1490.6 -32.4 Q1498.1 -17.2 1496.7 -0.1 M1490.6 -32.4 Q1516.3 -23.2 1541.7 -6.6 M1496.7 -0.1 Q1517.4 -8.4 1541.7 -6.6 M1517.4 -8.4 L1512.0 -8.5 M1488.0 37.0 Q1498.4 52.5 1505.4 71.9 M1505.4 71.9 Q1515.7 79.1 1521.6 79.1 M1515.7 79.1 L1523.9 81.7 M1505.4 71.9 Q1499.5 93.8 1490.9 109.3 M1490.9 109.3 Q1489.3 117.8 1494.1 127.5 M1494.1 127.5 Q1511.6 135.6 1528.3 143.9 M1494.1 127.5 Q1498.8 148.5 1498.5 169.0 M1498.5 169.0 Q1519.4 177.1 1540.0 174.2 M1519.4 177.1 L1514.2 172.4 M1496.7 215.8 Q1505.1 206.3 1522.1 200.5 M1497.7 248.9 Q1494.6 268.9 1492.5 278.2 M1494.6 268.9 L1488.2 271.3 M1492.5 278.2 Q1510.4 275.8 1539.2 280.9 M1492.5 278.2 Q1493.3 286.3 1485.8 301.2 M1485.8 301.2 Q1504.5 298.5 1523.4 302.7 M1485.8 301.2 Q1496.3 320.0 1500.6 344.6 M1500.6 344.6 Q1513.7 340.4 1523.5 345.2 M1513.7 340.4 L1508.9 348.7 M1503.9 371.1 Q1512.3 380.7 1519.1 378.7 M1503.9 371.1 Q1491.7 387.3 1490.6 404.6 M1490.6 404.6 Q1492.3 414.1 1496.9 430.6 M1496.9 430.6 Q1514.2 433.9 1531.0 444.0 M1493.0 479.8 Q1511.4 466.6 1520.3 465.1 M1511.4 466.6 L1517.3 474.4 M1493.0 479.8 Q1491.5 487.3 1487.6 505.5 M1491.5 487.3 L1491.4 477.8 M1487.6 505.5 Q1508.2 512.7 1526.5 521.6 M1487.6 505.5 Q1496.2 533.4 1504.9 554.4 M1504.9 554.4 Q1524.2 553.6 1532.4 552.7 M1504.9 554.4 Q1496.4 560.6 1490.0 570.3 M1496.4 560.6 L1491.5 566.3 M1490.0 570.3 Q1510.7 573.5 1519.5 568.4 M1510.7 573.5 L1500.9 576.4 M1490.0 570.3 Q1493.1 591.8 1486.8 602.1 M1493.1 591.8 L1487.9 602.3 M1486.8 602.1 Q1504.3 619.3 1522.2 640.5 M1503.1 651.7 Q1514.7 640.4 1522.2 640.5 M1503.1 651.7 Q1501.8 671.6 1490.3 679.7 M1490.3 679.7 Q1513.3 681.3 1534.0 684.7 M1500.7 702.7 Q1513.8 708.3 1525.7 713.2 M1500.7 702.7 Q1500.9 732.0 1503.7 756.6 M1503.7 756.6 Q1491.4 771.0 1489.1 786.9 M1489.1 786.9 Q1505.8 788.3 1526.5 778.6 M1489.1 786.9 Q1499.2 797.6 1500.8 812.1 M1499.2 797.6 L1501.7 789.3 M1500.8 812.1 Q1506.9 810.3 1524.0 811.0 M1500.8 812.1 Q1504.8 824.4 1505.1 843.2 M1500.8 812.1 Q1515.0 821.7 1524.3 838.4 M1505.1 843.2 Q1495.1 867.0 1495.4 879.5 M1495.4 879.5 Q1509.9 884.6 1525.4 886.2 M1495.4 879.5 Q1493.3 902.5 1494.6 925.5 M1493.3 902.5 L1500.7 908.5 M1531.7 -31.4 Q1550.0 -27.2 1572.3 -34.7 M1531.7 -31.4 Q1543.6 -15.0 1564.3 -4.5 M1541.7 -6.6 Q1534.7 15.3 1523.3 36.9 M1534.7 15.3 L1539.4 20.1 M1523.3 36.9 Q1553.7 34.8 1573.3 40.1 M1553.7 34.8 L1547.2 33.5 M1523.3 36.9 Q1522.5 57.0 1521.6 79.1 M1521.6 79.1 Q1543.6 70.6 1566.9 71.8 M1543.6 70.6 L1550.7 61.8 M1526.2 100.6 Q1527.6 120.0 1528.3 143.9 M1528.3 143.9 Q1531.2 160.7 1540.0 174.2 M1540.0 174.2 Q1547.0 173.3 1564.1 169.2 M1547.0 173.3 L1551.7 166.5 M1522.1 200.5 Q1534.4 210.6 1535.0 231.2 M1539.2 280.9 Q1551.5 268.1 1557.4 260.5 M1539.2 280.9 Q1546.7 284.2 1559.2 294.8 M1546.7 284.2 L1546.6 289.4 M1523.4 302.7 Q1526.3 329.5 1523.5 345.2 M1519.1 378.7 Q1518.8 394.5 1519.5 416.2 M1519.5 416.2 Q1545.5 410.3 1572.8 416.1 M1519.5 416.2 Q1520.9 434.9 1531.0 444.0 M1519.5 416.2 Q1540.6 430.3 1568.4 446.6 M1540.6 430.3 L1541.3 437.7 M1531.0 444.0 Q1528.0 451.1 1520.3 465.1 M1531.0 444.0 Q1553.5 464.5 1569.9 474.9 M1553.5 464.5 L1564.3 462.6 M1520.3 465.1 Q1544.9 464.0 1569.9 474.9 M1544.9 464.0 L1551.8 466.6 M1520.3 465.1 Q1518.2 488.1 1526.5 521.6 M1518.2 488.1 L1523.8 490.2 M1526.5 521.6 Q1539.1 520.8 1561.5 511.3 M1539.1 520.8 L1539.9 526.1 M1532.4 552.7 Q1530.2 565.4 1519.5 568.4 M1519.5 568.4 Q1523.4 592.8 1518.5 616.7 M1523.4 592.8 L1517.7 603.0 M1518.5 616.7 Q1542.0 610.5 1553.8 605.9 M1518.5 616.7 Q1517.5 626.5 1522.2 640.5 M1525.7 713.2 Q1551.9 709.6 1572.7 714.4 M1525.7 713.2 Q1525.5 728.7 1524.9 749.5 M1524.9 749.5 Q1550.8 748.1 1575.8 737.8 M1524.9 749.5 Q1529.9 758.6 1526.5 778.6 M1529.9 758.6 L1526.4 762.4 M1524.9 749.5 Q1554.0 759.5 1575.8 770.3 M1526.5 778.6 Q1556.1 779.5 1575.8 770.3 M1526.5 778.6 Q1523.4 792.2 1524.0 811.0 M1524.3 838.4 Q1541.0 863.3 1565.5 894.5 M1541.0 863.3 L1540.4 873.0 M1525.4 886.2 Q1525.5 899.2 1524.4 908.7 M1524.4 908.7 Q1543.7 917.5 1562.5 924.3 M1543.7 917.5 L1535.5 919.6 M1572.3 -34.7 Q1573.8 -17.0 1564.3 -4.5 M1564.3 -4.5 Q1575.3 -5.0 1590.2 -0.9 M1564.3 -4.5 Q1563.0 23.8 1573.3 40.1 M1563.0 23.8 L1560.6 31.2 M1573.3 40.1 Q1587.9 39.0 1607.6 38.2 M1566.9 71.8 Q1583.9 74.2 1591.2 66.7 M1583.9 74.2 L1588.7 63.8 M1568.6 102.0 Q1585.5 103.4 1599.0 98.1 M1561.9 133.4 Q1568.4 150.2 1564.1 169.2 M1568.4 150.2 L1574.8 146.3 M1564.7 204.8 Q1583.3 199.7 1601.8 197.1 M1564.7 204.8 Q1567.1 229.4 1570.9 247.4 M1567.1 229.4 L1569.1 220.8 M1570.9 247.4 Q1568.8 255.4 1557.4 260.5 M1570.9 247.4 Q1578.9 259.6 1594.0 283.0 M1578.9 259.6 L1582.3 263.6 M1557.4 260.5 Q1570.9 268.4 1594.0 283.0 M1570.9 268.4 L1568.9 273.7 M1557.4 260.5 Q1559.3 276.2 1559.2 294.8 M1559.2 294.8 Q1564.3 315.9 1571.1 342.9 M1564.3 315.9 L1571.1 315.8 M1559.2 294.8 Q1581.6 309.2 1601.3 334.3 M1581.6 309.2 L1582.6 315.6 M1571.1 342.9 Q1584.2 336.3 1601.3 334.3 M1571.1 342.9 Q1569.8 357.2 1558.9 366.6 M1558.9 366.6 Q1583.2 379.0 1605.5 379.4 M1583.2 379.0 L1578.6 369.2 M1572.8 416.1 Q1575.7 431.0 1568.4 446.6 M1575.7 431.0 L1568.8 429.6 M1573.1 555.8 Q1583.0 559.8 1593.7 572.2 M1574.0 586.1 Q1588.3 578.6 1593.7 572.2 M1553.8 605.9 Q1559.8 626.2 1575.3 647.0 M1575.3 647.0 Q1583.9 644.8 1601.2 648.8 M1583.9 644.8 L1583.8 636.0 M1575.3 647.0 Q1572.9 659.8 1564.4 675.4 M1572.9 659.8 L1582.3 664.4 M1572.7 714.4 Q1581.7 712.8 1599.5 711.2 M1572.7 714.4 Q1570.8 723.3 1575.8 737.8 M1575.8 737.8 Q1593.6 742.7 1605.8 742.1 M1575.8 770.3 Q1589.5 775.3 1603.2 774.4 M1589.5 775.3 L1594.4 772.0 M1575.8 770.3 Q1564.3 788.0 1555.6 813.3 M1564.3 788.0 L1562.4 792.6 M1555.6 813.3 Q1572.4 823.2 1597.9 827.2 M1555.6 813.3 Q1566.1 827.0 1567.3 840.7 M1566.1 827.0 L1563.0 832.3 M1567.3 840.7 Q1574.4 842.1 1591.8 844.7 M1567.3 840.7 Q1584.4 862.2 1608.0 888.2 M1584.4 862.2 L1573.1 861.3 M1565.5 894.5 Q1578.2 898.3 1587.6 910.5 M1590.2 -0.9 Q1618.2 0.2 1640.3 4.8 M1590.2 -0.9 Q1600.9 19.9 1607.6 38.2 M1600.9 19.9 L1605.9 11.7 M1591.2 66.7 Q1618.3 63.7 1635.1 65.2 M1591.2 66.7 Q1594.6 88.0 1599.0 98.1 M1599.0 98.1 Q1616.9 95.5 1637.2 101.8 M1601.8 197.1 Q1612.8 199.4 1621.2 192.7 M1587.7 244.3 Q1618.1 237.1 1643.6 234.9 M1618.1 237.1 L1613.1 238.4 M1587.7 244.3 Q1613.6 259.8 1627.9 263.6 M1594.0 283.0 Q1612.6 299.2 1634.2 316.0 M1612.6 299.2 L1608.4 289.3 M1599.4 296.4 Q1611.5 304.2 1634.2 316.0 M1601.3 334.3 Q1617.2 339.6 1624.3 340.0 M1617.2 339.6 L1609.7 339.6 M1605.5 379.4 Q1603.0 388.7 1604.2 397.4 M1603.0 388.7 L1597.1 392.8 M1586.8 449.1 Q1585.4 455.2 1589.4 468.8 M1589.4 468.8 Q1609.5 472.4 1621.9 484.8 M1589.4 468.8 Q1590.1 491.2 1586.7 501.9 M1590.1 491.2 L1595.4 486.1 M1586.7 501.9 Q1604.3 504.4 1620.8 502.5 M1586.7 501.9 Q1594.4 533.0 1597.4 555.0 M1597.4 555.0 Q1610.5 554.9 1631.2 552.3 M1610.5 554.9 L1602.5 563.2 M1597.4 555.0 Q1593.5 565.5 1593.7 572.2 M1593.7 572.2 Q1611.4 574.2 1634.9 583.9 M1611.4 574.2 L1603.3 580.6 M1605.9 604.4 Q1603.0 622.1 1601.2 648.8 M1603.0 622.1 L1606.9 612.9 M1601.2 648.8 Q1602.4 661.0 1608.4 669.0 M1602.4 661.0 L1594.8 663.6 M1608.4 669.0 Q1613.1 671.0 1623.5 671.9 M1605.8 742.1 Q1599.5 763.0 1603.2 774.4 M1599.5 763.0 L1608.6 767.6 M1605.8 742.1 Q1614.0 755.7 1622.1 771.1 M1614.0 755.7 L1608.5 757.4 M1597.9 827.2 Q1596.0 841.6 1591.8 844.7 M1596.0 841.6 L1591.8 838.7 M1591.8 844.7 Q1616.0 840.2 1642.0 838.9 M1591.8 844.7 Q1596.1 866.8 1608.0 888.2 M1608.0 888.2 Q1612.3 881.4 1622.7 878.9 M1612.3 881.4 L1619.7 873.8 M1608.0 888.2 Q1602.7 899.3 1587.6 910.5 M1625.7 -39.0 Q1631.2 -16.5 1640.3 4.8 M1643.5 38.1 Q1635.6 53.7 1635.1 65.2 M1627.9 263.6 Q1634.6 293.8 1634.2 316.0 M1634.6 293.8 L1643.3 301.1 M1634.2 316.0 Q1623.9 326.3 1624.3 340.0 M1624.3 340.0 Q1624.4 359.7 1632.0 380.4 M1632.0 380.4 Q1632.5 396.3 1633.6 401.7 M1633.6 401.7 Q1629.9 420.9 1624.6 447.4 M1629.9 420.9 L1637.5 412.4 M1621.9 484.8 Q1615.5 491.7 1620.8 502.5 M1620.8 502.5 Q1631.0 527.0 1631.2 552.3 M1631.2 552.3 Q1632.7 563.3 1634.9 583.9 M1638.3 617.3 Q1628.0 641.2 1621.2 653.8 M1621.2 653.8 Q1623.7 662.5 1623.5 671.9 M1623.5 671.9 Q1623.1 692.2 1620.9 702.7 M1623.1 692.2 L1620.2 699.6 M1622.1 771.1 Q1626.2 800.2 1640.3 818.4 M1626.2 800.2 L1628.2 794.8 M1640.3 818.4 Q1643.1 827.5 1642.0 838.9 M1642.0 838.9 Q1627.6 853.9 1622.7 878.9 M1622.7 878.9 Q1619.6 893.2 1624.6 908.7" fill="none" stroke="#eaf7ee" stroke-width="1" opacity="0.9"/><path d="M830 110 L880 330 M880 100 L905 160 L870 180 M905 185 L960 240 M860 280 L940 300" fill="none" stroke="#faf7f0" stroke-width="1"/><path d="M1133 497 C1137.5 495.0 1150.5 488.7 1160 485 C1169.5 481.3 1180.8 478.2 1190 475 C1199.2 471.8 1207.2 467.2 1215 466 C1222.8 464.8 1229.0 466.0 1237 468 C1245.0 470.0 1257.0 473.2 1263 478 C1269.0 482.8 1268.5 492.8 1273 497 C1277.5 501.2 1282.7 505.8 1290 503 C1297.3 500.2 1309.2 483.3 1317 480 C1324.8 476.7 1330.3 479.3 1337 483 C1343.7 486.7 1349.3 501.7 1357 502 C1364.7 502.3 1370.8 487.5 1383 485 C1395.2 482.5 1416.7 487.8 1430 487 C1443.3 486.2 1451.8 479.2 1463 480 C1474.2 480.8 1485.8 494.0 1497 492 C1508.2 490.0 1519.0 470.3 1530 468 C1541.0 465.7 1551.3 475.7 1563 478 C1574.7 480.3 1593.8 481.3 1600 482" fill="none" stroke="#8fb8ef" stroke-width="5" stroke-linecap="round"/><path d="M1132 713 C1142.5 715.3 1173.2 726.2 1195 727 C1216.8 727.8 1242.0 717.3 1263 718 C1284.0 718.7 1306.8 722.8 1321 731 C1335.2 739.2 1339.0 758.7 1348 767 C1357.0 775.3 1364.5 778.0 1375 781 C1385.5 784.0 1402.0 779.0 1411 785 C1420.0 791.0 1425.2 804.2 1429 817 C1432.8 829.8 1431.0 851.5 1434 862 C1437.0 872.5 1437.3 875.5 1447 880 C1456.7 884.5 1483.0 885.7 1492 889 C1501.0 892.3 1499.5 898.2 1501 900" fill="none" stroke="#8fb8ef" stroke-width="5" stroke-linecap="round"/><path d="M1290 145 C1292.5 147.5 1296.7 156.3 1305 160 C1313.3 163.7 1325.8 164.5 1340 167 C1354.2 169.5 1378.3 174.5 1390 175 C1401.7 175.5 1400.8 170.0 1410 170 C1419.2 170.0 1435.0 173.3 1445 175 C1455.0 176.7 1460.8 178.8 1470 180 C1479.2 181.2 1495.0 181.7 1500 182" fill="none" stroke="#8fb8ef" stroke-width="1.3" stroke-linecap="round"/><path d="M1240 115 C1243.3 114.5 1255.8 111.2 1260 112 C1264.2 112.8 1264.2 118.7 1265 120" fill="none" stroke="#8fb8ef" stroke-width="1.5" stroke-linecap="round"/><path d="M950 290 C955.0 282.5 971.7 251.7 980 245 C988.3 238.3 990.0 245.8 1000 250 C1010.0 254.2 1023.3 267.5 1040 270 C1056.7 272.5 1083.3 265.0 1100 265 C1116.7 265.0 1133.3 269.2 1140 270" fill="none" stroke="#8fb8ef" stroke-width="1" stroke-linecap="round"/><path d="M1185 345 C1186.7 346.2 1193.8 348.7 1195 352 C1196.2 355.3 1194.2 363.3 1192 365 C1189.8 366.7 1183.7 362.5 1182 362 Z" fill="#8fb8ef"/><path d="M1060 770 Q1080 755 1100 765 Q1090 790 1065 785 Z" fill="#8fb8ef"/><path d="M1139 531 C1158.2 530.0 1216.7 524.3 1254 525 C1291.3 525.7 1331.8 530.3 1363 535 C1394.2 539.7 1417.7 547.3 1441 553 C1464.3 558.7 1476.5 565.8 1503 569 C1529.5 572.2 1583.8 571.5 1600 572" fill="none" stroke="#f4f9f5" stroke-width="2.2" stroke-linecap="round"/><path d="M1401 99 C1400.8 105.8 1402.7 128.2 1400 140 C1397.3 151.8 1390.0 158.3 1385 170 C1380.0 181.7 1373.3 196.7 1370 210 C1366.7 223.3 1370.0 236.7 1365 250 C1360.0 263.3 1349.2 278.3 1340 290 C1330.8 301.7 1315.8 310.8 1310 320 C1304.2 329.2 1307.5 336.7 1305 345 C1302.5 353.3 1297.5 360.8 1295 370 C1292.5 379.2 1290.8 395.0 1290 400" fill="none" stroke="#f4f9f5" stroke-width="2.2" stroke-linecap="round"/><path d="M1267 95 L1290 112" fill="none" stroke="#f4f9f5" stroke-width="2.2" stroke-linecap="round"/><path d="M1052 795 C1054.2 800.8 1061.2 812.5 1065 830 C1068.8 847.5 1073.3 888.3 1075 900" fill="none" stroke="#f4f9f5" stroke-width="2.2" stroke-linecap="round"/><path d="M990 207 C1001.7 207.5 1044.2 209.2 1060 210 C1075.8 210.8 1076.7 211.2 1085 212 C1093.3 212.8 1101.7 212.3 1110 215 C1118.3 217.7 1127.3 222.2 1135 228 C1142.7 233.8 1141.7 238.0 1156 250 C1170.3 262.0 1205.2 288.3 1221 300 C1236.8 311.7 1237.2 313.8 1251 320 C1264.8 326.2 1290.5 332.8 1304 337 C1317.5 341.2 1318.5 344.3 1332 345 C1345.5 345.7 1373.7 338.5 1385 341 C1396.3 343.5 1398.5 354.8 1400 360 C1401.5 365.2 1400.2 368.0 1394 372 C1387.8 376.0 1375.8 378.8 1363 384 C1350.2 389.2 1340.3 399.7 1317 403 C1293.7 406.3 1244.8 403.7 1223 404 C1201.2 404.3 1196.3 403.7 1186 405 C1175.7 406.3 1168.8 407.8 1161 412 C1153.2 416.2 1142.7 427.0 1139 430" fill="none" stroke="#e8b960" stroke-width="4" stroke-linecap="round"/><path d="M990 207 C1001.7 207.5 1044.2 209.2 1060 210 C1075.8 210.8 1076.7 211.2 1085 212 C1093.3 212.8 1101.7 212.3 1110 215 C1118.3 217.7 1127.3 222.2 1135 228 C1142.7 233.8 1141.7 238.0 1156 250 C1170.3 262.0 1205.2 288.3 1221 300 C1236.8 311.7 1237.2 313.8 1251 320 C1264.8 326.2 1290.5 332.8 1304 337 C1317.5 341.2 1318.5 344.3 1332 345 C1345.5 345.7 1373.7 338.5 1385 341 C1396.3 343.5 1398.5 354.8 1400 360 C1401.5 365.2 1400.2 368.0 1394 372 C1387.8 376.0 1375.8 378.8 1363 384 C1350.2 389.2 1340.3 399.7 1317 403 C1293.7 406.3 1244.8 403.7 1223 404 C1201.2 404.3 1196.3 403.7 1186 405 C1175.7 406.3 1168.8 407.8 1161 412 C1153.2 416.2 1142.7 427.0 1139 430" fill="none" stroke="#fbd88e" stroke-width="2.2" stroke-linecap="round"/><path d="M1394 372 C1400.8 372.0 1423.0 370.7 1435 372 C1447.0 373.3 1456.7 377.8 1466 380 C1475.3 382.2 1479.7 385.3 1491 385 C1502.3 384.7 1515.8 381.8 1534 378 C1552.2 374.2 1589.0 364.7 1600 362" fill="none" stroke="#e8b960" stroke-width="4" stroke-linecap="round"/><path d="M1394 372 C1400.8 372.0 1423.0 370.7 1435 372 C1447.0 373.3 1456.7 377.8 1466 380 C1475.3 382.2 1479.7 385.3 1491 385 C1502.3 384.7 1515.8 381.8 1534 378 C1552.2 374.2 1589.0 364.7 1600 362" fill="none" stroke="#fbd88e" stroke-width="2.2" stroke-linecap="round"/><path d="M1060 97 C1062.0 102.5 1069.2 119.5 1072 130 C1074.8 140.5 1077.3 150.0 1077 160 C1076.7 170.0 1071.2 182.2 1070 190 C1068.8 197.8 1070.0 204.2 1070 207" fill="none" stroke="#e8b960" stroke-width="4" stroke-linecap="round"/><path d="M1060 97 C1062.0 102.5 1069.2 119.5 1072 130 C1074.8 140.5 1077.3 150.0 1077 160 C1076.7 170.0 1071.2 182.2 1070 190 C1068.8 197.8 1070.0 204.2 1070 207" fill="none" stroke="#fbd88e" stroke-width="2.2" stroke-linecap="round"/><path d="M1092 757 C1082.5 755.0 1051.2 746.2 1035 745 C1018.8 743.8 1002.5 751.3 995 750 C987.5 748.7 993.3 740.2 990 737 C986.7 733.8 977.5 732.0 975 731" fill="none" stroke="#e8b960" stroke-width="4" stroke-linecap="round"/><path d="M1092 757 C1082.5 755.0 1051.2 746.2 1035 745 C1018.8 743.8 1002.5 751.3 995 750 C987.5 748.7 993.3 740.2 990 737 C986.7 733.8 977.5 732.0 975 731" fill="none" stroke="#fbd88e" stroke-width="2.2" stroke-linecap="round"/><path d="M835 852 C832.8 854.7 824.8 862.7 822 868 C819.2 873.3 817.7 879.8 818 884 C818.3 888.2 819.5 892.0 824 893 C828.5 894.0 839.3 891.0 845 890 C850.7 889.0 857.2 890.3 858 887 C858.8 883.7 852.7 874.8 850 870 C847.3 865.2 844.5 861.0 842 858 C839.5 855.0 836.2 853.0 835 852" fill="none" stroke="#e8b960" stroke-width="4" stroke-linecap="round"/><path d="M835 852 C832.8 854.7 824.8 862.7 822 868 C819.2 873.3 817.7 879.8 818 884 C818.3 888.2 819.5 892.0 824 893 C828.5 894.0 839.3 891.0 845 890 C850.7 889.0 857.2 890.3 858 887 C858.8 883.7 852.7 874.8 850 870 C847.3 865.2 844.5 861.0 842 858 C839.5 855.0 836.2 853.0 835 852" fill="none" stroke="#fbd88e" stroke-width="2.2" stroke-linecap="round"/><path d="M1297 97 C1293.5 99.2 1282.5 104.3 1276 110 C1269.5 115.7 1265.0 126.5 1258 131 C1251.0 135.5 1242.7 132.2 1234 137 C1225.3 141.8 1214.7 154.8 1206 160 C1197.3 165.2 1190.3 164.7 1182 168 C1173.7 171.3 1165.5 173.8 1156 180 C1146.5 186.2 1138.5 194.2 1125 205 C1111.5 215.8 1084.2 231.7 1075 245 C1065.8 258.3 1070.8 278.3 1070 285" fill="none" stroke="#e9f6ec" stroke-width="6.5" stroke-linecap="round" opacity="0.7"/><path d="M1297 97 C1293.5 99.2 1282.5 104.3 1276 110 C1269.5 115.7 1265.0 126.5 1258 131 C1251.0 135.5 1242.7 132.2 1234 137 C1225.3 141.8 1214.7 154.8 1206 160 C1197.3 165.2 1190.3 164.7 1182 168 C1173.7 171.3 1165.5 173.8 1156 180 C1146.5 186.2 1138.5 194.2 1125 205 C1111.5 215.8 1084.2 231.7 1075 245 C1065.8 258.3 1070.8 278.3 1070 285" fill="none" stroke="#47cc60" stroke-width="4.6" stroke-linecap="round"/><path d="M1297 97 C1293.5 99.2 1282.5 104.3 1276 110 C1269.5 115.7 1265.0 126.5 1258 131 C1251.0 135.5 1242.7 132.2 1234 137 C1225.3 141.8 1214.7 154.8 1206 160 C1197.3 165.2 1190.3 164.7 1182 168 C1173.7 171.3 1165.5 173.8 1156 180 C1146.5 186.2 1138.5 194.2 1125 205 C1111.5 215.8 1084.2 231.7 1075 245 C1065.8 258.3 1070.8 278.3 1070 285" fill="none" stroke="#9fdcae" stroke-width="0.9" stroke-linecap="round"/><path d="M1092 731 C1089.2 735.8 1081.7 749.3 1075 760 C1068.3 770.7 1058.7 782.5 1052 795 C1045.3 807.5 1039.5 824.5 1035 835 C1030.5 845.5 1030.8 847.2 1025 858 C1019.2 868.8 1004.2 893.0 1000 900" fill="none" stroke="#e9f6ec" stroke-width="6.5" stroke-linecap="round" opacity="0.7"/><path d="M1092 731 C1089.2 735.8 1081.7 749.3 1075 760 C1068.3 770.7 1058.7 782.5 1052 795 C1045.3 807.5 1039.5 824.5 1035 835 C1030.5 845.5 1030.8 847.2 1025 858 C1019.2 868.8 1004.2 893.0 1000 900" fill="none" stroke="#47cc60" stroke-width="4.6" stroke-linecap="round"/><path d="M1092 731 C1089.2 735.8 1081.7 749.3 1075 760 C1068.3 770.7 1058.7 782.5 1052 795 C1045.3 807.5 1039.5 824.5 1035 835 C1030.5 845.5 1030.8 847.2 1025 858 C1019.2 868.8 1004.2 893.0 1000 900" fill="none" stroke="#9fdcae" stroke-width="0.9" stroke-linecap="round"/><path d="M1452 97 C1453.7 101.7 1459.8 114.5 1462 125 C1464.2 135.5 1463.3 149.2 1465 160 C1466.7 170.8 1468.5 181.3 1472 190 C1475.5 198.7 1482.7 201.0 1486 212 C1489.3 223.0 1489.3 242.0 1492 256 C1494.7 270.0 1500.0 281.7 1502 296 C1504.0 310.3 1505.7 329.5 1504 342 C1502.3 354.5 1494.2 363.8 1492 371 C1489.8 378.2 1490.2 378.0 1491 385 C1491.8 392.0 1493.5 402.2 1497 413 C1500.5 423.8 1505.3 440.7 1512 450 C1518.7 459.3 1527.0 461.7 1537 469 C1547.0 476.3 1561.5 485.2 1572 494 C1582.5 502.8 1595.3 517.3 1600 522" fill="none" stroke="#e9f6ec" stroke-width="6.5" stroke-linecap="round" opacity="0.7"/><path d="M1452 97 C1453.7 101.7 1459.8 114.5 1462 125 C1464.2 135.5 1463.3 149.2 1465 160 C1466.7 170.8 1468.5 181.3 1472 190 C1475.5 198.7 1482.7 201.0 1486 212 C1489.3 223.0 1489.3 242.0 1492 256 C1494.7 270.0 1500.0 281.7 1502 296 C1504.0 310.3 1505.7 329.5 1504 342 C1502.3 354.5 1494.2 363.8 1492 371 C1489.8 378.2 1490.2 378.0 1491 385 C1491.8 392.0 1493.5 402.2 1497 413 C1500.5 423.8 1505.3 440.7 1512 450 C1518.7 459.3 1527.0 461.7 1537 469 C1547.0 476.3 1561.5 485.2 1572 494 C1582.5 502.8 1595.3 517.3 1600 522" fill="none" stroke="#47cc60" stroke-width="4.6" stroke-linecap="round"/><path d="M1452 97 C1453.7 101.7 1459.8 114.5 1462 125 C1464.2 135.5 1463.3 149.2 1465 160 C1466.7 170.8 1468.5 181.3 1472 190 C1475.5 198.7 1482.7 201.0 1486 212 C1489.3 223.0 1489.3 242.0 1492 256 C1494.7 270.0 1500.0 281.7 1502 296 C1504.0 310.3 1505.7 329.5 1504 342 C1502.3 354.5 1494.2 363.8 1492 371 C1489.8 378.2 1490.2 378.0 1491 385 C1491.8 392.0 1493.5 402.2 1497 413 C1500.5 423.8 1505.3 440.7 1512 450 C1518.7 459.3 1527.0 461.7 1537 469 C1547.0 476.3 1561.5 485.2 1572 494 C1582.5 502.8 1595.3 517.3 1600 522" fill="none" stroke="#9fdcae" stroke-width="0.9" stroke-linecap="round"/><path d="M1130 535 C1133.2 537.5 1138.7 546.0 1149 550 C1159.3 554.0 1165.7 550.7 1192 559 C1218.3 567.3 1281.0 590.2 1307 600 C1333.0 609.8 1323.0 613.0 1348 618 C1373.0 623.0 1434.8 625.3 1457 630 C1479.2 634.7 1465.5 643.3 1481 646 C1496.5 648.7 1530.2 642.3 1550 646 C1569.8 649.7 1591.7 664.3 1600 668" fill="none" stroke="#e9f6ec" stroke-width="6.5" stroke-linecap="round" opacity="0.7"/><path d="M1130 535 C1133.2 537.5 1138.7 546.0 1149 550 C1159.3 554.0 1165.7 550.7 1192 559 C1218.3 567.3 1281.0 590.2 1307 600 C1333.0 609.8 1323.0 613.0 1348 618 C1373.0 623.0 1434.8 625.3 1457 630 C1479.2 634.7 1465.5 643.3 1481 646 C1496.5 648.7 1530.2 642.3 1550 646 C1569.8 649.7 1591.7 664.3 1600 668" fill="none" stroke="#47cc60" stroke-width="4.6" stroke-linecap="round"/><path d="M1130 535 C1133.2 537.5 1138.7 546.0 1149 550 C1159.3 554.0 1165.7 550.7 1192 559 C1218.3 567.3 1281.0 590.2 1307 600 C1333.0 609.8 1323.0 613.0 1348 618 C1373.0 623.0 1434.8 625.3 1457 630 C1479.2 634.7 1465.5 643.3 1481 646 C1496.5 648.7 1530.2 642.3 1550 646 C1569.8 649.7 1591.7 664.3 1600 668" fill="none" stroke="#9fdcae" stroke-width="0.9" stroke-linecap="round"/><path d="M1130 763 C1135.7 763.0 1148.5 759.2 1164 763 C1179.5 766.8 1200.2 776.0 1223 786 C1245.8 796.0 1279.8 812.7 1301 823 C1322.2 833.3 1335.2 839.8 1350 848 C1364.8 856.2 1378.3 863.3 1390 872 C1401.7 880.7 1415.0 895.3 1420 900" fill="none" stroke="#e9f6ec" stroke-width="6.5" stroke-linecap="round" opacity="0.7"/><path d="M1130 763 C1135.7 763.0 1148.5 759.2 1164 763 C1179.5 766.8 1200.2 776.0 1223 786 C1245.8 796.0 1279.8 812.7 1301 823 C1322.2 833.3 1335.2 839.8 1350 848 C1364.8 856.2 1378.3 863.3 1390 872 C1401.7 880.7 1415.0 895.3 1420 900" fill="none" stroke="#47cc60" stroke-width="4.6" stroke-linecap="round"/><path d="M1130 763 C1135.7 763.0 1148.5 759.2 1164 763 C1179.5 766.8 1200.2 776.0 1223 786 C1245.8 796.0 1279.8 812.7 1301 823 C1322.2 833.3 1335.2 839.8 1350 848 C1364.8 856.2 1378.3 863.3 1390 872 C1401.7 880.7 1415.0 895.3 1420 900" fill="none" stroke="#9fdcae" stroke-width="0.9" stroke-linecap="round"/><path d="M1092 757 C1096.2 757.8 1105.7 761.0 1117 762 C1128.3 763.0 1152.8 762.8 1160 763" fill="none" stroke="#e9f6ec" stroke-width="6.5" stroke-linecap="round" opacity="0.7"/><path d="M1092 757 C1096.2 757.8 1105.7 761.0 1117 762 C1128.3 763.0 1152.8 762.8 1160 763" fill="none" stroke="#47cc60" stroke-width="4.6" stroke-linecap="round"/><path d="M1092 757 C1096.2 757.8 1105.7 761.0 1117 762 C1128.3 763.0 1152.8 762.8 1160 763" fill="none" stroke="#9fdcae" stroke-width="0.9" stroke-linecap="round"/><path d="M925 731 C922.5 734.2 913.3 738.5 910 750 C906.7 761.5 907.0 785.0 905 800 C903.0 815.0 900.2 828.3 898 840 C895.8 851.7 893.3 860.0 892 870 C890.7 880.0 890.3 895.0 890 900" fill="none" stroke="#e9f6ec" stroke-width="6.5" stroke-linecap="round" opacity="0.7"/><path d="M925 731 C922.5 734.2 913.3 738.5 910 750 C906.7 761.5 907.0 785.0 905 800 C903.0 815.0 900.2 828.3 898 840 C895.8 851.7 893.3 860.0 892 870 C890.7 880.0 890.3 895.0 890 900" fill="none" stroke="#47cc60" stroke-width="4.6" stroke-linecap="round"/><path d="M925 731 C922.5 734.2 913.3 738.5 910 750 C906.7 761.5 907.0 785.0 905 800 C903.0 815.0 900.2 828.3 898 840 C895.8 851.7 893.3 860.0 892 870 C890.7 880.0 890.3 895.0 890 900" fill="none" stroke="#9fdcae" stroke-width="0.9" stroke-linecap="round"/><path d="M856 887 C859.2 887.8 868.5 890.5 875 892 C881.5 893.5 884.2 894.7 895 896 C905.8 897.3 932.5 899.3 940 900" fill="none" stroke="#e9f6ec" stroke-width="6.5" stroke-linecap="round" opacity="0.7"/><path d="M856 887 C859.2 887.8 868.5 890.5 875 892 C881.5 893.5 884.2 894.7 895 896 C905.8 897.3 932.5 899.3 940 900" fill="none" stroke="#47cc60" stroke-width="4.6" stroke-linecap="round"/><path d="M856 887 C859.2 887.8 868.5 890.5 875 892 C881.5 893.5 884.2 894.7 895 896 C905.8 897.3 932.5 899.3 940 900" fill="none" stroke="#9fdcae" stroke-width="0.9" stroke-linecap="round"/><path d="M977 207 C978.3 208.7 984.5 210.7 985 217 C985.5 223.3 982.5 237.5 980 245 C977.5 252.5 973.0 255.0 970 262 C967.0 269.0 963.3 282.8 962 287" fill="none" stroke="#e9f6ec" stroke-width="6.5" stroke-linecap="round" opacity="0.7"/><path d="M977 207 C978.3 208.7 984.5 210.7 985 217 C985.5 223.3 982.5 237.5 980 245 C977.5 252.5 973.0 255.0 970 262 C967.0 269.0 963.3 282.8 962 287" fill="none" stroke="#47cc60" stroke-width="4.6" stroke-linecap="round"/><path d="M977 207 C978.3 208.7 984.5 210.7 985 217 C985.5 223.3 982.5 237.5 980 245 C977.5 252.5 973.0 255.0 970 262 C967.0 269.0 963.3 282.8 962 287" fill="none" stroke="#9fdcae" stroke-width="0.9" stroke-linecap="round"/><path d="M927 97 C930.0 105.0 939.5 135.3 945 145 C950.5 154.7 954.7 144.7 960 155 C965.3 165.3 974.2 198.3 977 207" fill="none" stroke="#e8b960" stroke-width="4.4" stroke-linecap="round"/><path d="M927 97 C930.0 105.0 939.5 135.3 945 145 C950.5 154.7 954.7 144.7 960 155 C965.3 165.3 974.2 198.3 977 207" fill="none" stroke="#fbd88e" stroke-width="2.6" stroke-linecap="round"/><path d="M927 97 C930.0 105.0 939.5 135.3 945 145 C950.5 154.7 954.7 144.7 960 155 C965.3 165.3 974.2 198.3 977 207" fill="none" stroke="#47cc60" stroke-width="4" stroke-dasharray="14 12"/><path d="M925 731 C922.5 734.2 913.3 738.5 910 750 C906.7 761.5 907.0 785.0 905 800 C903.0 815.0 900.2 828.3 898 840 C895.8 851.7 893.3 860.0 892 870 C890.7 880.0 890.3 895.0 890 900" fill="none" stroke="#f0894e" stroke-width="4.2" stroke-dasharray="14 8"/><path d="M1130 763 C1135.7 763.0 1148.5 759.2 1164 763 C1179.5 766.8 1200.2 776.0 1223 786 C1245.8 796.0 1279.8 812.7 1301 823 C1322.2 833.3 1335.2 839.8 1350 848 C1364.8 856.2 1378.3 863.3 1390 872 C1401.7 880.7 1415.0 895.3 1420 900" fill="none" stroke="#f0894e" stroke-width="4.2" stroke-dasharray="8 18"/><path d="M1307 600 C1313.8 603.0 1323.0 613.0 1348 618 C1373.0 623.0 1434.8 625.3 1457 630 C1479.2 634.7 1465.5 643.3 1481 646 C1496.5 648.7 1530.2 642.3 1550 646 C1569.8 649.7 1591.7 664.3 1600 668" fill="none" stroke="#f0894e" stroke-width="4.2" stroke-dasharray="7 16"/><path d="M1092 757 C1096.2 757.8 1105.7 761.0 1117 762 C1128.3 763.0 1152.8 762.8 1160 763" fill="none" stroke="#f0894e" stroke-width="4.2" stroke-dasharray="10 8"/><g font-family="Liberation Sans" font-size="12.5" fill="#4d4d4d" text-anchor="middle" stroke="#eaf6ee" stroke-width="2.6" paint-order="stroke" stroke-linejoin="round"><text x="849" y="122">Kakwadi</text><text x="849" y="135" font-size="12" fill="#4d4d4d" letter-spacing="0.4">awcma</text><text x="939" y="124">Kakwadi Danti</text><text x="1008" y="146">Untdi</text><text x="1008" y="159" font-size="12" fill="#4d4d4d" letter-spacing="0.4">nceu</text><text x="857" y="173">Dandi</text><text x="857" y="227">Bhagal</text><text x="1017" y="208">Dharasana</text><text x="1017" y="221" font-size="12" fill="#4d4d4d" letter-spacing="0.4">rnceuoa</text><text x="1070" y="202">Dungri</text><text x="1070" y="215" font-size="12" fill="#4d4d4d" letter-spacing="0.4">marnc</text><text x="1203" y="115">Vaghaldhara</text><text x="1203" y="128" font-size="12" fill="#4d4d4d" letter-spacing="0.4">oawcmarnc</text><text x="1283" y="131">Balwada</text><text x="1283" y="144" font-size="12" fill="#4d4d4d" letter-spacing="0.4">awcma</text><text x="1223" y="149">Panchlai</text><text x="1223" y="162" font-size="12" fill="#4d4d4d" letter-spacing="0.4">euoawc</text><text x="1150" y="189">Sonwada</text><text x="1150" y="202" font-size="12" fill="#4d4d4d" letter-spacing="0.4">awcma</text><text x="1283" y="188">Gorgam</text><text x="1283" y="201" font-size="12" fill="#4d4d4d" letter-spacing="0.4">marnc</text><text x="1484" y="115">Pipalgabhan</text><text x="1484" y="128" font-size="12" fill="#4d4d4d" letter-spacing="0.4">oawcmarnc</text><text x="1446" y="161">Soldhara</text><text x="1446" y="174" font-size="12" fill="#4d4d4d" letter-spacing="0.4">euoawc</text><text x="1420" y="245">Ghej</text><text x="1420" y="258" font-size="12" fill="#4d4d4d" letter-spacing="0.4">uoa</text><text x="1523" y="235">Vad</text><text x="1523" y="248" font-size="12" fill="#4d4d4d" letter-spacing="0.4">wcm</text><text x="1235" y="296">Dhanori</text><text x="1235" y="309" font-size="12" fill="#4d4d4d" letter-spacing="0.4">awcma</text><text x="1352" y="323">Atgam</text><text x="1352" y="336" font-size="12" fill="#4d4d4d" letter-spacing="0.4">nceu</text><text x="1447" y="306">Vav</text><text x="1447" y="319" font-size="12" fill="#4d4d4d" letter-spacing="0.4">wcm</text><text x="1590" y="275">Pardi</text><text x="1590" y="288" font-size="12" fill="#4d4d4d" letter-spacing="0.4">nceu</text><text x="1343" y="388">Segva</text><text x="1343" y="401" font-size="12" fill="#4d4d4d" letter-spacing="0.4">nceu</text><text x="1494" y="385">Khergam</text><text x="1494" y="398" font-size="12" fill="#4d4d4d" letter-spacing="0.4">awcma</text><text x="1317" y="436">Kalwada</text><text x="1317" y="449" font-size="12" fill="#4d4d4d" letter-spacing="0.4">awcma</text><text x="1395" y="436">Pitha</text><text x="1395" y="449" font-size="12" fill="#4d4d4d" letter-spacing="0.4">nceu</text><text x="1481" y="445">Nandhai</text><text x="1481" y="458" font-size="12" fill="#4d4d4d" letter-spacing="0.4">awcma</text><text x="1550" y="420">Bahej</text><text x="1550" y="433" font-size="12" fill="#4d4d4d" letter-spacing="0.4">nceu</text><text x="1585" y="397">Deba</text><text x="1585" y="410" font-size="12" fill="#4d4d4d" letter-spacing="0.4">uoa</text><text x="1171" y="514">Jujwa</text><text x="1171" y="527" font-size="12" fill="#4d4d4d" letter-spacing="0.4">nceu</text><text x="1325" y="520">Kanjan</text><text x="1325" y="533">Ranchhod</text><text x="1325" y="546" font-size="12" fill="#4d4d4d" letter-spacing="0.4">euoawc</text><text x="1481" y="517">Marala</text><text x="1481" y="530" font-size="12" fill="#4d4d4d" letter-spacing="0.4">marnc</text><text x="1171" y="550">Pathri</text><text x="1171" y="563" font-size="12" fill="#4d4d4d" letter-spacing="0.4">marnc</text><text x="1240" y="561">Gadaria</text><text x="1240" y="574" font-size="12" fill="#4d4d4d" letter-spacing="0.4">awcma</text><text x="1455" y="564">Kaparia</text><text x="1455" y="577" font-size="12" fill="#4d4d4d" letter-spacing="0.4">awcma</text><text x="1588" y="586">Bars</text><text x="1588" y="599" font-size="12" fill="#4d4d4d" letter-spacing="0.4">uoa</text><text x="1150" y="598">hanvai</text><text x="1150" y="611" font-size="12" fill="#4d4d4d" letter-spacing="0.4">marnc</text><text x="1326" y="605">Ronvel</text><text x="1326" y="618" font-size="12" fill="#4d4d4d" letter-spacing="0.4">marnc</text><text x="1429" y="612">Bhutsar</text><text x="1429" y="625" font-size="12" fill="#4d4d4d" letter-spacing="0.4">awcma</text><text x="1536" y="617">Dulsad</text><text x="1536" y="630" font-size="12" fill="#4d4d4d" letter-spacing="0.4">marnc</text><text x="1533" y="665">Vankal</text><text x="1533" y="678" font-size="12" fill="#4d4d4d" letter-spacing="0.4">marnc</text><text x="1172" y="676">Binwada</text><text x="1172" y="689" font-size="12" fill="#4d4d4d" letter-spacing="0.4">awcma</text><text x="1248" y="694">Rabada</text><text x="1248" y="707" font-size="12" fill="#4d4d4d" letter-spacing="0.4">marnc</text><text x="1446" y="681">Valandi</text><text x="1446" y="694" font-size="12" fill="#4d4d4d" letter-spacing="0.4">awcma</text><text x="1446" y="718">Ozar</text><text x="1446" y="731" font-size="12" fill="#4d4d4d" letter-spacing="0.4">uoa</text><text x="1317" y="759">Parvasa</text><text x="1317" y="772" font-size="12" fill="#4d4d4d" letter-spacing="0.4">awcma</text><text x="1213" y="770">Sondhalwada</text><text x="1213" y="783" font-size="12" fill="#4d4d4d" letter-spacing="0.4">oawcmarnc</text><text x="1490" y="776">Faladhara</text><text x="1490" y="789" font-size="12" fill="#4d4d4d" letter-spacing="0.4">rnceuoa</text><text x="1580" y="796">Tiskari</text><text x="1580" y="809" font-size="12" fill="#4d4d4d" letter-spacing="0.4">awcma</text><text x="1223" y="831">Sukhesh</text><text x="1223" y="844" font-size="12" fill="#4d4d4d" letter-spacing="0.4">awcma</text><text x="1343" y="841">Mota</text><text x="1343" y="854">Waghchhipa</text><text x="1343" y="867" font-size="12" fill="#4d4d4d" letter-spacing="0.4">cmarnceu</text><text x="1490" y="847">Velvach</text><text x="1490" y="860" font-size="12" fill="#4d4d4d" letter-spacing="0.4">awcma</text><text x="1462" y="894">Lakhmapor</text><text x="1137" y="840">Sukhlav</text><text x="1137" y="853" font-size="12" fill="#4d4d4d" letter-spacing="0.4">awcma</text><text x="1084" y="865">Velparva</text><text x="1084" y="878" font-size="12" fill="#4d4d4d" letter-spacing="0.4">euoawc</text><text x="1020" y="894">Khadki</text><text x="1066" y="755">Killa-pardi</text><text x="1066" y="768" font-size="12" fill="#4d4d4d" letter-spacing="0.4">oawcmarnc</text><text x="844" y="836">Udvada</text><text x="844" y="849" font-size="12" fill="#4d4d4d" letter-spacing="0.4">marnc</text><text x="896" y="867">Kalsar</text><text x="896" y="880" font-size="12" fill="#4d4d4d" letter-spacing="0.4">marnc</text><text x="1148" y="415">lav</text><text x="1148" y="428" font-size="12" fill="#4d4d4d" letter-spacing="0.4">wcm</text><text x="1545" y="339">Ruzvani</text><text x="1545" y="352" font-size="12" fill="#4d4d4d" letter-spacing="0.4">awcma</text></g><g font-family="Liberation Sans" font-size="10.5" fill="#6b4a2a" stroke="#fff" stroke-width="2" paint-order="stroke"><text transform="translate(966,176) rotate(68)" text-anchor="middle">Coastal Hwy</text><text transform="translate(899,803) rotate(-82)" text-anchor="middle">Coastal Hwy</text></g><text transform="translate(1436,840) rotate(80)" text-anchor="middle" font-family="Liberation Sans" font-size="10" fill="#2a5fb0">Par River</text><g><path d="M1065.0 157 Q1072 154 1079.0 157 V167 Q1072 173 1065.0 167 Z" fill="#fff" stroke="#555" stroke-width="1"/><rect x="1065.0" y="156" width="14" height="3" fill="#4d9b5a"/><text x="1072" y="167.5" font-family="Liberation Sans" font-size="10" fill="#333" text-anchor="middle">6</text></g><g><rect x="1061.0" y="271" width="20" height="16" rx="2" fill="#f5c34c"/><text x="1071" y="283" font-family="Liberation Sans" font-size="10" fill="#333" text-anchor="middle">48</text></g><g><path d="M1469.0 200 Q1482 197 1495.0 200 V210 Q1482 216 1469.0 210 Z" fill="#fff" stroke="#555" stroke-width="1"/><rect x="1469.0" y="199" width="26" height="3" fill="#4d9b5a"/><text x="1482" y="210.5" font-family="Liberation Sans" font-size="10" fill="#333" text-anchor="middle">181</text></g><g><path d="M1161.0 399 Q1171 396 1181.0 399 V409 Q1171 415 1161.0 409 Z" fill="#fff" stroke="#555" stroke-width="1"/><rect x="1161.0" y="398" width="20" height="3" fill="#4d9b5a"/><text x="1171" y="409.5" font-family="Liberation Sans" font-size="10" fill="#333" text-anchor="middle">67</text></g><g><path d="M1434.0 368 Q1444 365 1454.0 368 V378 Q1444 384 1434.0 378 Z" fill="#fff" stroke="#555" stroke-width="1"/><rect x="1434.0" y="367" width="20" height="3" fill="#4d9b5a"/><text x="1444" y="378.5" font-family="Liberation Sans" font-size="10" fill="#333" text-anchor="middle">67</text></g><g><path d="M1533.0 367 Q1546 364 1559.0 367 V377 Q1546 383 1533.0 377 Z" fill="#fff" stroke="#555" stroke-width="1"/><rect x="1533.0" y="366" width="26" height="3" fill="#4d9b5a"/><text x="1546" y="377.5" font-family="Liberation Sans" font-size="10" fill="#333" text-anchor="middle">701</text></g><g><rect x="1104.0" y="754" width="26" height="16" rx="2" fill="#f5c34c"/><text x="1117" y="766" font-family="Liberation Sans" font-size="10" fill="#333" text-anchor="middle">848</text></g><g><path d="M1039.0 780 Q1052 777 1065.0 780 V790 Q1052 796 1039.0 790 Z" fill="#fff" stroke="#555" stroke-width="1"/><rect x="1039.0" y="779" width="26" height="3" fill="#4d9b5a"/><text x="1052" y="790.5" font-family="Liberation Sans" font-size="10" fill="#333" text-anchor="middle">186</text></g><g><rect x="1015.0" y="850" width="20" height="16" rx="2" fill="#f5c34c"/><text x="1025" y="862" font-family="Liberation Sans" font-size="10" fill="#333" text-anchor="middle">48</text></g></svg><div class="a" style="left:0;top:0;width:1600px;height:27px;background:linear-gradient(#4b4a45,#3b3a36)"></div><div class="a" style="left:0;top:26px;width:1600px;height:1px;background:#55534e"></div><div class="t" style="left:12px;top:5px;font-size:14.5px;font-weight:bold;color:#e6e3de;letter-spacing:0.2px">Activities</div><svg style="left:98.5px;top:4.5px" width="18" height="18" viewBox="98.5 4.5 18 18"><path d="M107.50 13.50 L100.57 9.50 A8 8 0 0 1 114.43 9.50 Z" fill="#db4437"/><path d="M107.50 13.50 L114.43 9.50 A8 8 0 0 1 107.50 21.50 Z" fill="#f4c20d"/><path d="M107.50 13.50 L107.50 21.50 A8 8 0 0 1 100.57 9.50 Z" fill="#0f9d58"/><circle cx="107.5" cy="13.5" r="4.00" fill="#fff"/><circle cx="107.5" cy="13.5" r="3.36" fill="#4285f4"/></svg><div class="t" style="left:122px;top:5px;font-size:14.5px;font-weight:bold;color:#e6e3de;letter-spacing:0.3px">Google Chrome</div><svg style="left:237px;top:9px" width="14" height="9"><path d="M1 1 L13 1 L7 7 Z" fill="#dcd9d4"/></svg><div class="t" style="left:800px;top:5px;font-size:14.5px;font-weight:bold;color:#e6e3de;letter-spacing:0.3px">Thu 11:34</div><svg style="left:1441px;top:2px" width="24" height="24"><circle cx="12" cy="11" r="10.5" fill="#d5303a"/><rect x="4.5" y="8.5" width="15" height="5" fill="#fff"/></svg><svg style="left:1490px;top:5px" width="20" height="18"><rect x="7.5" y="1" width="5" height="4.5" fill="#dcd9d4"/><rect x="1" y="12" width="5" height="4.5" fill="#dcd9d4"/><rect x="7.5" y="12" width="5" height="4.5" fill="#dcd9d4"/><rect x="14" y="12" width="5" height="4.5" fill="#dcd9d4"/><path d="M10 5 V12 M3.5 12 V9 H16.5 V12" stroke="#dcd9d4" stroke-width="1.5" fill="none"/></svg><svg style="left:1518px;top:5px" width="20" height="18"><path d="M1 6 H5 L10 2 V16 L5 12 H1 Z" fill="#dcd9d4"/><path d="M12.5 6 Q14.5 9 12.5 12 M14.5 4 Q18 9 14.5 14" stroke="#dcd9d4" stroke-width="1.5" fill="none"/></svg><svg style="left:1547px;top:4px" width="20" height="20"><path d="M6 5.5 A7 7 0 1 0 14 5.5" stroke="#dcd9d4" stroke-width="2" fill="none"/><path d="M10 2 V10" stroke="#dcd9d4" stroke-width="2"/></svg><svg style="left:1573px;top:9px" width="14" height="9"><path d="M1 1 L13 1 L7 7 Z" fill="#dcd9d4"/></svg><div class="a" style="left:0;top:27px;width:67px;height:873px;background:#45353a"></div><svg style="left:8px;top:33px" width="50" height="52" viewBox="0 0 50 52"><defs><linearGradient id="ffg" x1="0.8" y1="0" x2="0.2" y2="1"><stop offset="0" stop-color="#ffe03d"/><stop offset="0.4" stop-color="#ff9a2e"/><stop offset="0.75" stop-color="#ff4f3a"/><stop offset="1" stop-color="#e5197f"/></linearGradient></defs><path d="M36 4 Q50 16 47 32 Q43 48 25 49 Q6 48 3 31 Q2 22 7 15 Q7 22 11 24 Q12 14 22 9 Q19 15 22 17 Q30 12 36 4 Z" fill="url(#ffg)"/><circle cx="27" cy="29" r="10.5" fill="#8a3fd8"/><circle cx="24" cy="33" r="6.5" fill="#3d5fd8" opacity="0.75"/><path d="M10 20 Q18 14 30 19 Q20 19 17 26 Z" fill="#ffb83a"/></svg><svg style="left:11px;top:100px" width="45" height="46" viewBox="0 0 45 46"><rect x="1" y="1" width="42" height="43" rx="3" fill="#b9b8b3"/><rect x="1" y="1" width="42" height="8" rx="2" fill="#d8d7d3"/><rect x="4" y="9" width="36" height="10" fill="#3b3330"/><rect x="6" y="11" width="32" height="6" fill="#e8653b"/><rect x="6" y="14" width="32" height="3" fill="#f3c98b"/><rect x="1" y="19" width="42" height="25" fill="#c5c4c0"/><rect x="15" y="27" width="14" height="7" rx="1" fill="#eeeeec" stroke="#6d6c68" stroke-width="1.2"/></svg><svg style="left:12px;top:162px" width="42" height="50" viewBox="0 0 42 50"><path d="M1 1 H28 L41 13 V49 H1 Z" fill="#1a73b8"/><path d="M4 4 H27 L38 14 V46 H4 Z" fill="#fff"/><path d="M29 1 L41 1 L41 13 Z" fill="#2a9ad8"/><rect x="8" y="20" width="8" height="2" fill="#1a73b8"/><rect x="8" y="25" width="8" height="2" fill="#1a73b8"/><rect x="8" y="30" width="24" height="2" fill="#1a73b8"/><rect x="8" y="35" width="24" height="2" fill="#1a73b8"/><rect x="8" y="40" width="18" height="2" fill="#1a73b8"/><rect x="18" y="18" width="14" height="10" fill="none" stroke="#1a73b8" stroke-width="1.6"/><path d="M19 27 L23 22 L26 25 L28 23 L31 27 Z" fill="#1a73b8"/></svg><div class="a" style="left:2px;top:220px;width:62px;height:62px;border-radius:4px;background:#5e5753"></div><svg style="left:1px;top:238px" width="8" height="26"><circle cx="4" cy="5" r="2.2" fill="#e95420"/><circle cx="4" cy="13" r="2.2" fill="#e95420"/><circle cx="4" cy="21" r="2.2" fill="#e95420"/></svg><svg style="left:9.0px;top:227.5px" width="47.0" height="47.0" viewBox="9.0 227.5 47.0 47.0"><path d="M32.50 251.00 L13.01 239.75 A22.5 22.5 0 0 1 51.99 239.75 Z" fill="#db4437"/><path d="M32.50 251.00 L51.99 239.75 A22.5 22.5 0 0 1 32.50 273.50 Z" fill="#f4c20d"/><path d="M32.50 251.00 L32.50 273.50 A22.5 22.5 0 0 1 13.01 239.75 Z" fill="#0f9d58"/><circle cx="32.5" cy="251" r="11.25" fill="#fff"/><circle cx="32.5" cy="251" r="9.45" fill="#4285f4"/></svg><svg style="left:10px;top:297px" width="46" height="39" viewBox="0 0 46 39"><rect x="0.5" y="0.5" width="45" height="38" rx="2" fill="#c9c8c4"/><rect x="3" y="3" width="40" height="33" fill="#2b2b2b"/><rect x="3" y="22" width="40" height="14" fill="#1f1f1f"/><path d="M8 9 L13 12 L8 15" stroke="#fff" stroke-width="1.8" fill="none"/><rect x="15" y="16" width="8" height="2" fill="#fff"/></svg><svg style="left:10px;top:354px" width="48" height="44" viewBox="0 0 48 44"><path d="M40 1 L14 30" stroke="#e9521f" stroke-width="2.5"/><path d="M14 30 L6 38 Q3 42 1 42 Q5 40 8 36 Z" fill="#333"/><path d="M16 28 L8 37" stroke="#777" stroke-width="4"/><rect x="27" y="14" width="15" height="27" rx="2" fill="#e8ecef"/><rect x="29" y="10" width="11" height="6" fill="#4a78b5"/><rect x="27" y="21" width="15" height="8" fill="#97b5d8"/><rect x="25" y="39" width="20" height="4" fill="#cfd3d6"/></svg><svg style="left:11px;top:424px" width="45" height="37" viewBox="0 0 45 37"><rect x="0.5" y="4" width="44" height="32" rx="3" fill="#c8c8c6"/><rect x="4" y="0.5" width="12" height="5" rx="2" fill="#d9d9d7"/><circle cx="27" cy="20" r="11" fill="#e6e6e4" stroke="#8b8b89" stroke-width="1.5"/><circle cx="27" cy="20" r="6.5" fill="#28324a"/><circle cx="27" cy="20" r="3" fill="#3f67b5"/></svg><svg style="left:11px;top:485px" width="44" height="44" viewBox="0 0 44 44"><rect x="0" y="0" width="44" height="44" rx="3" fill="#ef443b"/><path d="M7 22 L17 12 L27 22 L17 32 Z" fill="#fff"/><path d="M24 12 L34 22 L24 32 L21 29 L28 22 L21 15 Z" fill="#fff"/></svg><svg style="left:17px;top:549px" width="32" height="44" viewBox="0 0 32 44"><rect x="0.5" y="0.5" width="31" height="43" rx="3" fill="#e7e6e2"/><rect x="4" y="4" width="24" height="8" rx="1" fill="#73c076"/><circle cx="7" cy="19" r="2.8" fill="#6b6b69"/><circle cx="7" cy="27" r="2.8" fill="#6b6b69"/><circle cx="7" cy="35" r="2.8" fill="#6b6b69"/><circle cx="15" cy="19" r="2.8" fill="#6b6b69"/><circle cx="15" cy="27" r="2.8" fill="#6b6b69"/><circle cx="15" cy="35" r="2.8" fill="#6b6b69"/><circle cx="23" cy="19" r="2.8" fill="#6b6b69"/><rect x="20.5" y="24" width="7" height="14" rx="2" fill="#f37e2a"/></svg><svg style="left:14px;top:849px" width="40" height="40"><circle cx="7.0" cy="7" r="3.1" fill="#ededeb"/><circle cx="7.0" cy="19" r="3.1" fill="#ededeb"/><circle cx="7.0" cy="31" r="3.1" fill="#ededeb"/><circle cx="18.8" cy="7" r="3.1" fill="#ededeb"/><circle cx="18.8" cy="19" r="3.1" fill="#ededeb"/><circle cx="18.8" cy="31" r="3.1" fill="#ededeb"/><circle cx="30.6" cy="7" r="3.1" fill="#ededeb"/><circle cx="30.6" cy="19" r="3.1" fill="#ededeb"/><circle cx="30.6" cy="31" r="3.1" fill="#ededeb"/></svg><div class="a" style="left:67px;top:27px;width:1533px;height:34px;background:#3a3834"></div><svg style="left:67px;top:27px" width="260" height="35" viewBox="67 27 260 35"><path d="M67 61 Q75 61 75 53 V35 Q75 28 82 28 H308 Q315 28 315 35 V53 Q315 61 323 61 Z" fill="#eeeeec"/></svg><svg style="left:86px;top:35px" width="17" height="17" viewBox="0 0 17 17"><rect x="0" y="0" width="17" height="17" rx="2" fill="#fff"/><circle cx="8.5" cy="8" r="5.2" fill="none" stroke="#e33b3b" stroke-width="2.6"/><path d="M10 12 L13 15 L12 10 Z" fill="#e33b3b"/></svg><div class="t" style="left:111px;top:36px;font-size:14px;color:#3c3c3c">Trakzee v04.016.01</div><svg style="left:293px;top:38px" width="12" height="12"><path d="M2 2 L10 10 M10 2 L2 10" stroke="#333" stroke-width="1.7"/></svg><svg style="left:329px;top:37px" width="15" height="15"><path d="M7.5 1 V14 M1 7.5 H14" stroke="#8e8c88" stroke-width="1.8"/></svg><svg style="left:1506px;top:33px" width="94" height="24"><circle cx="12" cy="11" r="7.5" fill="#787a73"/><path d="M8.5 9 L15.5 9 L12 13.5 Z" fill="#2f2e2b"/><circle cx="41" cy="11" r="7.5" fill="#5b5a55"/><path d="M37 11 H45" stroke="#2f2e2b" stroke-width="1.5"/><circle cx="61" cy="11" r="7.5" fill="#5b5a55"/><rect x="57.5" y="7.5" width="7" height="7" fill="none" stroke="#2f2e2b" stroke-width="1.3"/><circle cx="81" cy="11" r="7.5" fill="#5b5a55"/><path d="M78 8 L84 14 M84 8 L78 14" stroke="#2f2e2b" stroke-width="1.3"/></svg><div class="a" style="left:67px;top:61px;width:1533px;height:38px;background:#eeeeec"></div><div class="a" style="left:157px;top:98px;width:1443px;height:1.5px;background:#cfcfcb"></div><div class="a" style="left:175px;top:65px;width:1285px;height:28px;border-radius:14px;background:#fff"></div><svg style="left:80px;top:70px" width="18" height="18"><path d="M16 9 H3 M9 3 L3 9 L9 15" stroke="#3c3c3c" stroke-width="1.9" fill="none"/></svg><svg style="left:112px;top:70px" width="18" height="18"><path d="M2 9 H15 M9 3 L15 9 L9 15" stroke="#a0a09e" stroke-width="1.9" fill="none"/></svg><svg style="left:144px;top:70px" width="18" height="18"><path d="M14.5 6 A6.5 6.5 0 1 0 15 11" stroke="#3c3c3c" stroke-width="1.9" fill="none"/><path d="M10.5 2 H16 V7.5 Z" fill="#3c3c3c"/></svg><svg style="left:186px;top:71px" width="12" height="15"><rect x="1" y="6" width="10" height="8" rx="1" fill="#5f6368"/><path d="M3.2 6.5 V4.5 A2.8 2.8 0 0 1 8.8 4.5 V6.5" stroke="#5f6368" stroke-width="1.6" fill="none"/></svg><div class="t" style="left:209px;top:70px;font-size:14.5px;color:#202124">trakzee.uffizio.com<span style="color:#5f6368">/jsp/index.html</span></div><svg style="left:1432px;top:69px" width="20" height="20"><path d="M10 2 L12.4 7.5 L18 8 L13.8 11.8 L15 17.5 L10 14.5 L5 17.5 L6.2 11.8 L2 8 L7.6 7.5 Z" fill="none" stroke="#4a4a48" stroke-width="1.5"/></svg><svg style="left:1472px;top:70px" width="18" height="18"><circle cx="9" cy="9" r="8" fill="#e8453c"/><circle cx="9" cy="9" r="7" fill="#3f7ee8"/><circle cx="9.5" cy="9.5" r="4" fill="#1a3f8f"/></svg><svg style="left:1505px;top:70px" width="18" height="18"><path d="M2 6 H6 A2.2 2.2 0 1 1 10.5 6 H14 V9.5 A2.2 2.2 0 1 1 14 14 V17 H2 Z" fill="#3a3a3a"/></svg><div class="a" style="left:1535px;top:68px;width:22px;height:22px;border-radius:11px;background:#7b8590;color:#fff;font-size:13px;text-align:center;line-height:22px">V</div><svg style="left:1574px;top:70px" width="8" height="18"><circle cx="4" cy="3" r="1.8" fill="#3a3a3a"/><circle cx="4" cy="9" r="1.8" fill="#3a3a3a"/><circle cx="4" cy="15" r="1.8" fill="#3a3a3a"/></svg><div class="a" style="left:67px;top:99px;width:90px;height:801px;background:#011638"></div><svg style="left:73px;top:107px" width="78" height="78" viewBox="73 107 78 78"><circle cx="112" cy="146" r="38" fill="#000" stroke="#3b3b3b" stroke-width="0.8"/><defs><linearGradient id="lgr" x1="0" y1="0" x2="1" y2="1"><stop offset="0" stop-color="#c9cfd2"/><stop offset="0.5" stop-color="#8f979b"/><stop offset="1" stop-color="#b8bfc2"/></linearGradient></defs><path d="M109 111.5 A20.3 20.3 0 0 1 126 143 L124.5 157.5 L117 150 A20.3 20.3 0 1 1 109 111.5 Z" fill="url(#lgr)"/><circle cx="109.5" cy="131" r="12.3" fill="#000"/><text x="112" y="177" font-family="Liberation Sans" font-size="8.5" font-weight="bold" fill="#fff" text-anchor="middle">tr<tspan fill="#e03b3b">●</tspan>kzee</text></svg><svg style="left:74px;top:214px" width="30" height="28"><path d="M14 2 A6.5 7 0 1 1 13.9 2 Z" fill="none" stroke="#fff" stroke-width="1.4"/><path d="M9.5 15 Q2 17 2 24 V26 H26 V24 Q26 17 18.5 15" fill="none" stroke="#fff" stroke-width="1.4"/></svg><svg style="left:121px;top:213px" width="28" height="30"><circle cx="13.5" cy="3.6" r="2" fill="none" stroke="#fff" stroke-width="1.2"/><path d="M4.5 23 Q7 20.5 7 15 Q7 5.8 13.5 5.8 Q20 5.8 20 15 Q20 20.5 22.5 23" fill="none" stroke="#fff" stroke-width="1.3"/><ellipse cx="13.5" cy="23" rx="10.5" ry="2.6" fill="none" stroke="#fff" stroke-width="1.2"/><path d="M11 25.4 Q13.5 28.6 16 25.4" fill="none" stroke="#fff" stroke-width="1.2"/></svg><svg style="left:96px;top:279px" width="32" height="28"><path d="M4 25.6 A14.4 14.4 0 1 1 27.5 25.6 Z" fill="none" stroke="#fff" stroke-width="1.4"/><path d="M6 16 A10 10 0 0 1 25.6 16" fill="none" stroke="#fff" stroke-width="1.3"/><path d="M20.5 12.3 L18.4 20 A3.8 3.8 0 1 1 12.6 15.6 Z" fill="none" stroke="#fff" stroke-width="1.2" stroke-linejoin="round"/></svg><div class="t" style="left:67px;width:90px;text-align:center;top:310px;font-size:13px;color:#e8ecf3">Dashboard</div><div class="a" style="left:67px;top:343px;width:90px;height:80px;background:#0141a8"></div><svg style="left:101px;top:360px" width="22" height="27"><path d="M11 21 Q3 12 3 9 A8 8 0 0 1 19 9 Q19 12 11 21 Z" fill="none" stroke="#fff" stroke-width="1.5"/><circle cx="11" cy="9" r="2.8" fill="none" stroke="#fff" stroke-width="1.4"/><path d="M6 17 L2 25 L7 23 L11 25 L15 23 L20 25 L16 17" fill="none" stroke="#fff" stroke-width="1.4"/></svg><div class="t" style="left:67px;width:90px;text-align:center;top:390px;font-size:13px;color:#e8ecf3">Tracking</div><svg style="left:101px;top:440px" width="24" height="27"><path d="M6 2 H18 Q21 2 21 5 V21 Q21 24 18 24 H9 L3 19 V5 Q3 2 6 2 Z" fill="none" stroke="#fff" stroke-width="1.5"/><path d="M3 19 H9 V24" fill="none" stroke="#fff" stroke-width="1.3"/><path d="M8 8 H16 M8 11.5 H16 M8 15 H16" stroke="#fff" stroke-width="1.3"/></svg><div class="t" style="left:67px;width:90px;text-align:center;top:470px;font-size:13px;color:#e8ecf3">Reports</div><svg style="left:98px;top:519px" width="28" height="28"><path d="M12 5 A11 11 0 1 0 23 16 H12 Z" fill="none" stroke="#fff" stroke-width="1.5"/><path d="M15 2 A11 11 0 0 1 26 13 H15 Z" fill="none" stroke="#fff" stroke-width="1.5"/></svg><div class="t" style="left:67px;width:90px;text-align:center;top:550px;font-size:13px;color:#e8ecf3">Chart</div><svg style="left:99px;top:600px" width="26" height="26"><path d="M21.81 9.44 L24.74 10.51 L24.74 15.49 L21.81 16.56 L21.74 16.71 L23.06 19.54 L19.54 23.06 L16.71 21.74 L16.56 21.81 L15.49 24.74 L10.51 24.74 L9.44 21.81 L9.29 21.74 L6.46 23.06 L2.94 19.54 L4.26 16.71 L4.19 16.56 L1.26 15.49 L1.26 10.51 L4.19 9.44 L4.26 9.29 L2.94 6.46 L6.46 2.94 L9.29 4.26 L9.44 4.19 L10.51 1.26 L15.49 1.26 L16.56 4.19 L16.71 4.26 L19.54 2.94 L23.06 6.46 L21.74 9.29 Z" fill="none" stroke="#fff" stroke-width="1.4"/><circle cx="13" cy="13" r="4.5" fill="none" stroke="#fff" stroke-width="1.5"/></svg><div class="t" style="left:67px;width:90px;text-align:center;top:630px;font-size:13px;color:#e8ecf3">Settings</div><svg style="left:476px;top:196px" width="12" height="68"><path d="M0 2 L10 9 V59 L0 67 Z" fill="#a9aca0"/><path d="M8 27 L4.5 33 L8 39" stroke="#fff" stroke-width="1" fill="none"/></svg><div class="a" style="left:167px;top:109px;width:310px;height:772px;background:#fff;border-radius:7px;box-shadow:0 1px 4px rgba(0,0,0,0.18)"></div><div class="a" style="left:167px;top:109px;width:310px;height:32px;background:#0f3f8c;border-radius:7px 7px 0 0"></div><div class="a" style="left:250px;top:113px;width:84px;height:28px;background:#fff"></div><svg style="left:177px;top:118px" width="16" height="16"><path d="M15 1 L1 7 L8 8 L9 15 Z" fill="#fff"/></svg><svg style="left:205px;top:118px" width="12" height="16"><rect x="1" y="2.5" width="10" height="12.5" rx="1" fill="#fff"/><rect x="3.5" y="1" width="5" height="3" rx="1" fill="#fff" stroke="#0f3f8c" stroke-width="0.8"/><path d="M3 7 H9 M3 9.5 H9 M3 12 H9" stroke="#0f3f8c" stroke-width="0.9"/></svg><svg style="left:229px;top:117px" width="16" height="17"><circle cx="8" cy="4" r="3" fill="none" stroke="#fff" stroke-width="1.6"/><path d="M8 7 V11" stroke="#fff" stroke-width="1.5"/><path d="M1 16 L3 10 H13 L15 16 Z" fill="#fff"/><path d="M6 10 L5 16 M10 10 L11 16 M2 13 H14" stroke="#0f3f8c" stroke-width="0.7"/></svg><svg style="left:257px;top:119px" width="12" height="14"><path d="M2.5 1 V13 M6 1 V13 M9.5 1 V13 M0.5 4.5 H11.5 M0.5 9.5 H11.5" stroke="#2768b6" stroke-width="1.8"/></svg><div class="t" style="left:274px;top:120px;font-size:13px;color:#3a7bc3">Geofence</div><div class="a" style="left:172px;top:146px;width:236px;height:28px;background:#f3f3f1;border:1px solid #e4e4e1"></div><div class="t" style="left:185px;top:155px;font-size:11.5px;font-weight:bold;color:#777">Search</div><svg style="left:389px;top:152px" width="16" height="16"><circle cx="6.5" cy="6.5" r="4.8" fill="none" stroke="#222" stroke-width="1.6"/><path d="M10 10 L14.5 14.5" stroke="#222" stroke-width="2.4" stroke-linecap="round"/></svg><div class="a" style="left:414px;top:146px;width:28px;height:28px;background:#f3f3f1;border:1px solid #e4e4e1"></div><svg style="left:420px;top:152px" width="16" height="16"><path d="M13 6.5 A5.5 5.5 0 0 0 3 5.5 M3 9.5 A5.5 5.5 0 0 0 13 10.5" fill="none" stroke="#222" stroke-width="1.7"/><path d="M14.5 2.5 V7.5 H9.5 Z M1.5 13.5 V8.5 H6.5 Z" fill="#222"/></svg><div class="a" style="left:444px;top:146px;width:28px;height:28px;background:#f3f3f1;border:1px solid #e4e4e1"></div><svg style="left:449px;top:150px" width="20" height="20"><path d="M3 5 V18 M7.5 5 V18 M12 8 V18 M1 10 H14 M1 15 H14" stroke="#111" stroke-width="2.2"/><circle cx="14" cy="6" r="4.6" fill="#111" stroke="#f3f3f1" stroke-width="1"/><path d="M14 3.5 V8.5 M11.5 6 H16.5" stroke="#fff" stroke-width="1.5"/></svg><div class="a" style="left:172px;top:179px;width:300px;height:20px;background:#f3f3f1"></div><div class="a" style="left:181px;top:181px;width:12px;height:12px;border:1px solid #b7c2b2;background:#fff"></div><div class="a" style="left:203px;top:181px;width:1px;height:18px;background:#e3e3df"></div><div class="t" style="left:204px;width:268px;text-align:center;top:183px;font-size:11.5px;font-weight:bold;color:#444">Geofence Name</div><div class="a" style="left:172px;top:204px;width:294px;height:26px;background:#d0d3d4"></div><div class="a" style="left:182px;top:210px;width:12px;height:12px;border:1px solid #b7c2b2;background:#fff"></div><div class="t" style="left:210px;top:211px;font-size:11.5px;font-weight:bold;color:#333">Your Company</div><div class="t" style="left:411px;top:211px;font-size:11.5px;color:#333;letter-spacing:0.1px">[ 44 ]</div><div class="a" style="left:443px;top:216px;width:10px;height:1.5px;background:#666"></div><div class="a" style="left:466px;top:204px;width:6px;height:357px;background:#c0cabb"></div><div class="a" style="left:172px;top:230px;width:294px;height:609px;overflow:hidden"><div class="a" style="left:9px;top:6px;width:12px;height:12px;border:1px solid #b7c2b2;background:#fff"></div><svg style="left:38.5px;top:7px" width="12" height="12"><polygon points="4.49,0.29 10.62,3.28 9.67,10.03 2.96,11.21 -0.24,5.19" fill="#0d7ef0" stroke="#0d7ef0" stroke-width="1" stroke-linejoin="round"/></svg><div class="t" style="left:61px;top:8px;font-size:11px;font-weight:bold;color:#15477f">Maize</div><svg style="left:226px;top:6px" width="56" height="14" viewBox="0 0 56 14"><circle cx="7" cy="7" r="5.4" fill="none" stroke="#111" stroke-width="1.7"/><path d="M10.4 3.6 L3.4 6.6 L6.5 7.5 L7.4 10.6 Z" fill="#111"/><path d="M27.5 2.5 H22 V12 H31 V7.5" fill="none" stroke="#111" stroke-width="1.8"/><path d="M32.5 1.2 L26.2 7.6 L25.5 9 L27 8.4 L33.4 2.1 Z" fill="#111" stroke="#111" stroke-width="1"/><rect x="42" y="2" width="10" height="1.8" fill="#111"/><rect x="45" y="0.8" width="4" height="1.5" fill="#111"/><path d="M43 4.3 H51 V11.8 Q51 13 49.8 13 H44.2 Q43 13 43 11.8 Z" fill="#111"/><rect x="45" y="5.5" width="1.2" height="6" fill="#fff"/><rect x="47.8" y="5.5" width="1.2" height="6" fill="#fff"/></svg><div class="a" style="left:0px;top:25px;width:278px;height:1px;background:#efefe9"></div><div class="a" style="left:9px;top:31px;width:12px;height:12px;border:1px solid #b7c2b2;background:#fff"></div><div class="a" style="left:39.0px;top:33px;width:10px;height:10px;background:#117a26"></div><div class="t" style="left:61px;top:33px;font-size:11px;font-weight:bold;color:#15477f">DemoG</div><svg style="left:226px;top:31px" width="56" height="14" viewBox="0 0 56 14"><circle cx="7" cy="7" r="5.4" fill="none" stroke="#111" stroke-width="1.7"/><path d="M10.4 3.6 L3.4 6.6 L6.5 7.5 L7.4 10.6 Z" fill="#111"/><path d="M27.5 2.5 H22 V12 H31 V7.5" fill="none" stroke="#111" stroke-width="1.8"/><path d="M32.5 1.2 L26.2 7.6 L25.5 9 L27 8.4 L33.4 2.1 Z" fill="#111" stroke="#111" stroke-width="1"/><rect x="42" y="2" width="10" height="1.8" fill="#111"/><rect x="45" y="0.8" width="4" height="1.5" fill="#111"/><path d="M43 4.3 H51 V11.8 Q51 13 49.8 13 H44.2 Q43 13 43 11.8 Z" fill="#111"/><rect x="45" y="5.5" width="1.2" height="6" fill="#fff"/><rect x="47.8" y="5.5" width="1.2" height="6" fill="#fff"/></svg><div class="a" style="left:0px;top:50px;width:278px;height:1px;background:#efefe9"></div><div class="a" style="left:9px;top:56px;width:12px;height:12px;border:1px solid #b7c2b2;background:#fff"></div><div class="a" style="left:39.0px;top:58px;width:10px;height:10px;background:#f0272a"></div><div class="t" style="left:61px;top:58px;font-size:11px;font-weight:bold;color:#15477f">NewG</div><svg style="left:226px;top:56px" width="56" height="14" viewBox="0 0 56 14"><circle cx="7" cy="7" r="5.4" fill="none" stroke="#111" stroke-width="1.7"/><path d="M10.4 3.6 L3.4 6.6 L6.5 7.5 L7.4 10.6 Z" fill="#111"/><path d="M27.5 2.5 H22 V12 H31 V7.5" fill="none" stroke="#111" stroke-width="1.8"/><path d="M32.5 1.2 L26.2 7.6 L25.5 9 L27 8.4 L33.4 2.1 Z" fill="#111" stroke="#111" stroke-width="1"/><rect x="42" y="2" width="10" height="1.8" fill="#111"/><rect x="45" y="0.8" width="4" height="1.5" fill="#111"/><path d="M43 4.3 H51 V11.8 Q51 13 49.8 13 H44.2 Q43 13 43 11.8 Z" fill="#111"/><rect x="45" y="5.5" width="1.2" height="6" fill="#fff"/><rect x="47.8" y="5.5" width="1.2" height="6" fill="#fff"/></svg><div class="a" style="left:0px;top:75px;width:278px;height:1px;background:#efefe9"></div><div class="a" style="left:9px;top:81px;width:12px;height:12px;border:1px solid #b7c2b2;background:#fff"></div><svg style="left:38.5px;top:82px" width="12" height="12"><polygon points="4.49,0.29 10.62,3.28 9.67,10.03 2.96,11.21 -0.24,5.19" fill="#0d7ef0" stroke="#0d7ef0" stroke-width="1" stroke-linejoin="round"/></svg><div class="t" style="left:61px;top:83px;font-size:11px;font-weight:bold;color:#15477f">Geofence 611</div><svg style="left:226px;top:81px" width="56" height="14" viewBox="0 0 56 14"><circle cx="7" cy="7" r="5.4" fill="none" stroke="#111" stroke-width="1.7"/><path d="M10.4 3.6 L3.4 6.6 L6.5 7.5 L7.4 10.6 Z" fill="#111"/><path d="M27.5 2.5 H22 V12 H31 V7.5" fill="none" stroke="#111" stroke-width="1.8"/><path d="M32.5 1.2 L26.2 7.6 L25.5 9 L27 8.4 L33.4 2.1 Z" fill="#111" stroke="#111" stroke-width="1"/><rect x="42" y="2" width="10" height="1.8" fill="#111"/><rect x="45" y="0.8" width="4" height="1.5" fill="#111"/><path d="M43 4.3 H51 V11.8 Q51 13 49.8 13 H44.2 Q43 13 43 11.8 Z" fill="#111"/><rect x="45" y="5.5" width="1.2" height="6" fill="#fff"/><rect x="47.8" y="5.5" width="1.2" height="6" fill="#fff"/></svg><div class="a" style="left:0px;top:100px;width:278px;height:1px;background:#efefe9"></div><div class="a" style="left:9px;top:106px;width:12px;height:12px;border:1px solid #b7c2b2;background:#fff"></div><div class="a" style="left:38.5px;top:107.5px;width:11px;height:11px;border-radius:6px;background:#0d7ef0"></div><div class="t" style="left:61px;top:108px;font-size:11px;font-weight:bold;color:#15477f">Geofence 500</div><svg style="left:226px;top:106px" width="56" height="14" viewBox="0 0 56 14"><circle cx="7" cy="7" r="5.4" fill="none" stroke="#111" stroke-width="1.7"/><path d="M10.4 3.6 L3.4 6.6 L6.5 7.5 L7.4 10.6 Z" fill="#111"/><path d="M27.5 2.5 H22 V12 H31 V7.5" fill="none" stroke="#111" stroke-width="1.8"/><path d="M32.5 1.2 L26.2 7.6 L25.5 9 L27 8.4 L33.4 2.1 Z" fill="#111" stroke="#111" stroke-width="1"/><rect x="42" y="2" width="10" height="1.8" fill="#111"/><rect x="45" y="0.8" width="4" height="1.5" fill="#111"/><path d="M43 4.3 H51 V11.8 Q51 13 49.8 13 H44.2 Q43 13 43 11.8 Z" fill="#111"/><rect x="45" y="5.5" width="1.2" height="6" fill="#fff"/><rect x="47.8" y="5.5" width="1.2" height="6" fill="#fff"/></svg><div class="a" style="left:0px;top:125px;width:278px;height:1px;background:#efefe9"></div><div class="a" style="left:9px;top:131px;width:12px;height:12px;border:1px solid #b7c2b2;background:#fff"></div><div class="a" style="left:39.0px;top:133px;width:10px;height:10px;background:#117a26"></div><div class="t" style="left:61px;top:133px;font-size:11px;font-weight:bold;color:#15477f">Geofence 450</div><svg style="left:226px;top:131px" width="56" height="14" viewBox="0 0 56 14"><circle cx="7" cy="7" r="5.4" fill="none" stroke="#111" stroke-width="1.7"/><path d="M10.4 3.6 L3.4 6.6 L6.5 7.5 L7.4 10.6 Z" fill="#111"/><path d="M27.5 2.5 H22 V12 H31 V7.5" fill="none" stroke="#111" stroke-width="1.8"/><path d="M32.5 1.2 L26.2 7.6 L25.5 9 L27 8.4 L33.4 2.1 Z" fill="#111" stroke="#111" stroke-width="1"/><rect x="42" y="2" width="10" height="1.8" fill="#111"/><rect x="45" y="0.8" width="4" height="1.5" fill="#111"/><path d="M43 4.3 H51 V11.8 Q51 13 49.8 13 H44.2 Q43 13 43 11.8 Z" fill="#111"/><rect x="45" y="5.5" width="1.2" height="6" fill="#fff"/><rect x="47.8" y="5.5" width="1.2" height="6" fill="#fff"/></svg><div class="a" style="left:0px;top:150px;width:278px;height:1px;background:#efefe9"></div><div class="a" style="left:9px;top:156px;width:12px;height:12px;border:1px solid #b7c2b2;background:#fff"></div><div class="a" style="left:38.5px;top:157.5px;width:11px;height:11px;border-radius:6px;background:#f0272a"></div><div class="t" style="left:61px;top:158px;font-size:11px;font-weight:bold;color:#15477f">Geofence 300</div><svg style="left:226px;top:156px" width="56" height="14" viewBox="0 0 56 14"><circle cx="7" cy="7" r="5.4" fill="none" stroke="#111" stroke-width="1.7"/><path d="M10.4 3.6 L3.4 6.6 L6.5 7.5 L7.4 10.6 Z" fill="#111"/><path d="M27.5 2.5 H22 V12 H31 V7.5" fill="none" stroke="#111" stroke-width="1.8"/><path d="M32.5 1.2 L26.2 7.6 L25.5 9 L27 8.4 L33.4 2.1 Z" fill="#111" stroke="#111" stroke-width="1"/><rect x="42" y="2" width="10" height="1.8" fill="#111"/><rect x="45" y="0.8" width="4" height="1.5" fill="#111"/><path d="M43 4.3 H51 V11.8 Q51 13 49.8 13 H44.2 Q43 13 43 11.8 Z" fill="#111"/><rect x="45" y="5.5" width="1.2" height="6" fill="#fff"/><rect x="47.8" y="5.5" width="1.2" height="6" fill="#fff"/></svg><div class="a" style="left:0px;top:175px;width:278px;height:1px;background:#efefe9"></div><div class="a" style="left:9px;top:181px;width:12px;height:12px;border:1px solid #b7c2b2;background:#fff"></div><svg style="left:38.5px;top:182px" width="12" height="12"><polygon points="4.49,0.29 10.62,3.28 9.67,10.03 2.96,11.21 -0.24,5.19" fill="#117a26" stroke="#117a26" stroke-width="1" stroke-linejoin="round"/></svg><div class="t" style="left:61px;top:183px;font-size:11px;font-weight:bold;color:#15477f">Geofence 1000</div><svg style="left:226px;top:181px" width="56" height="14" viewBox="0 0 56 14"><circle cx="7" cy="7" r="5.4" fill="none" stroke="#111" stroke-width="1.7"/><path d="M10.4 3.6 L3.4 6.6 L6.5 7.5 L7.4 10.6 Z" fill="#111"/><path d="M27.5 2.5 H22 V12 H31 V7.5" fill="none" stroke="#111" stroke-width="1.8"/><path d="M32.5 1.2 L26.2 7.6 L25.5 9 L27 8.4 L33.4 2.1 Z" fill="#111" stroke="#111" stroke-width="1"/><rect x="42" y="2" width="10" height="1.8" fill="#111"/><rect x="45" y="0.8" width="4" height="1.5" fill="#111"/><path d="M43 4.3 H51 V11.8 Q51 13 49.8 13 H44.2 Q43 13 43 11.8 Z" fill="#111"/><rect x="45" y="5.5" width="1.2" height="6" fill="#fff"/><rect x="47.8" y="5.5" width="1.2" height="6" fill="#fff"/></svg><div class="a" style="left:0px;top:200px;width:278px;height:1px;background:#efefe9"></div><div class="a" style="left:9px;top:206px;width:12px;height:12px;border:1px solid #b7c2b2;background:#fff"></div><div class="a" style="left:39.0px;top:208px;width:10px;height:10px;background:#0d7ef0"></div><div class="t" style="left:61px;top:208px;font-size:11px;font-weight:bold;color:#15477f">Geofence 999</div><svg style="left:226px;top:206px" width="56" height="14" viewBox="0 0 56 14"><circle cx="7" cy="7" r="5.4" fill="none" stroke="#111" stroke-width="1.7"/><path d="M10.4 3.6 L3.4 6.6 L6.5 7.5 L7.4 10.6 Z" fill="#111"/><path d="M27.5 2.5 H22 V12 H31 V7.5" fill="none" stroke="#111" stroke-width="1.8"/><path d="M32.5 1.2 L26.2 7.6 L25.5 9 L27 8.4 L33.4 2.1 Z" fill="#111" stroke="#111" stroke-width="1"/><rect x="42" y="2" width="10" height="1.8" fill="#111"/><rect x="45" y="0.8" width="4" height="1.5" fill="#111"/><path d="M43 4.3 H51 V11.8 Q51 13 49.8 13 H44.2 Q43 13 43 11.8 Z" fill="#111"/><rect x="45" y="5.5" width="1.2" height="6" fill="#fff"/><rect x="47.8" y="5.5" width="1.2" height="6" fill="#fff"/></svg><div class="a" style="left:0px;top:225px;width:278px;height:1px;background:#efefe9"></div><div class="a" style="left:9px;top:231px;width:12px;height:12px;border:1px solid #b7c2b2;background:#fff"></div><svg style="left:38.5px;top:232px" width="12" height="12"><polygon points="4.49,0.29 10.62,3.28 9.67,10.03 2.96,11.21 -0.24,5.19" fill="#117a26" stroke="#117a26" stroke-width="1" stroke-linejoin="round"/></svg><div class="t" style="left:61px;top:233px;font-size:11px;font-weight:bold;color:#15477f">Geofence 321</div><svg style="left:226px;top:231px" width="56" height="14" viewBox="0 0 56 14"><circle cx="7" cy="7" r="5.4" fill="none" stroke="#111" stroke-width="1.7"/><path d="M10.4 3.6 L3.4 6.6 L6.5 7.5 L7.4 10.6 Z" fill="#111"/><path d="M27.5 2.5 H22 V12 H31 V7.5" fill="none" stroke="#111" stroke-width="1.8"/><path d="M32.5 1.2 L26.2 7.6 L25.5 9 L27 8.4 L33.4 2.1 Z" fill="#111" stroke="#111" stroke-width="1"/><rect x="42" y="2" width="10" height="1.8" fill="#111"/><rect x="45" y="0.8" width="4" height="1.5" fill="#111"/><path d="M43 4.3 H51 V11.8 Q51 13 49.8 13 H44.2 Q43 13 43 11.8 Z" fill="#111"/><rect x="45" y="5.5" width="1.2" height="6" fill="#fff"/><rect x="47.8" y="5.5" width="1.2" height="6" fill="#fff"/></svg><div class="a" style="left:0px;top:250px;width:278px;height:1px;background:#efefe9"></div><div class="a" style="left:9px;top:256px;width:12px;height:12px;border:1px solid #b7c2b2;background:#fff"></div><svg style="left:38.5px;top:257px" width="12" height="12"><polygon points="4.49,0.29 10.62,3.28 9.67,10.03 2.96,11.21 -0.24,5.19" fill="#0d7ef0" stroke="#0d7ef0" stroke-width="1" stroke-linejoin="round"/></svg><div class="t" style="left:61px;top:258px;font-size:11px;font-weight:bold;color:#15477f">Main Office area</div><svg style="left:226px;top:256px" width="56" height="14" viewBox="0 0 56 14"><circle cx="7" cy="7" r="5.4" fill="none" stroke="#111" stroke-width="1.7"/><path d="M10.4 3.6 L3.4 6.6 L6.5 7.5 L7.4 10.6 Z" fill="#111"/><path d="M27.5 2.5 H22 V12 H31 V7.5" fill="none" stroke="#111" stroke-width="1.8"/><path d="M32.5 1.2 L26.2 7.6 L25.5 9 L27 8.4 L33.4 2.1 Z" fill="#111" stroke="#111" stroke-width="1"/><rect x="42" y="2" width="10" height="1.8" fill="#111"/><rect x="45" y="0.8" width="4" height="1.5" fill="#111"/><path d="M43 4.3 H51 V11.8 Q51 13 49.8 13 H44.2 Q43 13 43 11.8 Z" fill="#111"/><rect x="45" y="5.5" width="1.2" height="6" fill="#fff"/><rect x="47.8" y="5.5" width="1.2" height="6" fill="#fff"/></svg><div class="a" style="left:0px;top:275px;width:278px;height:1px;background:#efefe9"></div><div class="a" style="left:9px;top:281px;width:12px;height:12px;border:1px solid #b7c2b2;background:#fff"></div><svg style="left:38.5px;top:282px" width="12" height="12"><polygon points="4.49,0.29 10.62,3.28 9.67,10.03 2.96,11.21 -0.24,5.19" fill="#0d7ef0" stroke="#0d7ef0" stroke-width="1" stroke-linejoin="round"/></svg><div class="t" style="left:61px;top:283px;font-size:11px;font-weight:bold;color:#15477f">Wheat</div><svg style="left:226px;top:281px" width="56" height="14" viewBox="0 0 56 14"><circle cx="7" cy="7" r="5.4" fill="none" stroke="#111" stroke-width="1.7"/><path d="M10.4 3.6 L3.4 6.6 L6.5 7.5 L7.4 10.6 Z" fill="#111"/><path d="M27.5 2.5 H22 V12 H31 V7.5" fill="none" stroke="#111" stroke-width="1.8"/><path d="M32.5 1.2 L26.2 7.6 L25.5 9 L27 8.4 L33.4 2.1 Z" fill="#111" stroke="#111" stroke-width="1"/><rect x="42" y="2" width="10" height="1.8" fill="#111"/><rect x="45" y="0.8" width="4" height="1.5" fill="#111"/><path d="M43 4.3 H51 V11.8 Q51 13 49.8 13 H44.2 Q43 13 43 11.8 Z" fill="#111"/><rect x="45" y="5.5" width="1.2" height="6" fill="#fff"/><rect x="47.8" y="5.5" width="1.2" height="6" fill="#fff"/></svg><div class="a" style="left:0px;top:300px;width:278px;height:1px;background:#efefe9"></div><div class="a" style="left:9px;top:306px;width:12px;height:12px;border:1px solid #b7c2b2;background:#fff"></div><div class="a" style="left:39.0px;top:308px;width:10px;height:10px;background:#0d7ef0"></div><div class="t" style="left:61px;top:308px;font-size:11px;font-weight:bold;color:#15477f">Home</div><svg style="left:226px;top:306px" width="56" height="14" viewBox="0 0 56 14"><circle cx="7" cy="7" r="5.4" fill="none" stroke="#111" stroke-width="1.7"/><path d="M10.4 3.6 L3.4 6.6 L6.5 7.5 L7.4 10.6 Z" fill="#111"/><path d="M27.5 2.5 H22 V12 H31 V7.5" fill="none" stroke="#111" stroke-width="1.8"/><path d="M32.5 1.2 L26.2 7.6 L25.5 9 L27 8.4 L33.4 2.1 Z" fill="#111" stroke="#111" stroke-width="1"/><rect x="42" y="2" width="10" height="1.8" fill="#111"/><rect x="45" y="0.8" width="4" height="1.5" fill="#111"/><path d="M43 4.3 H51 V11.8 Q51 13 49.8 13 H44.2 Q43 13 43 11.8 Z" fill="#111"/><rect x="45" y="5.5" width="1.2" height="6" fill="#fff"/><rect x="47.8" y="5.5" width="1.2" height="6" fill="#fff"/></svg><div class="a" style="left:0px;top:325px;width:278px;height:1px;background:#efefe9"></div><div class="a" style="left:9px;top:331px;width:12px;height:12px;border:1px solid #b7c2b2;background:#fff"></div><svg style="left:38.5px;top:332px" width="12" height="12"><polygon points="4.49,0.29 10.62,3.28 9.67,10.03 2.96,11.21 -0.24,5.19" fill="#0d7ef0" stroke="#0d7ef0" stroke-width="1" stroke-linejoin="round"/></svg><div class="t" style="left:61px;top:333px;font-size:11px;font-weight:bold;color:#15477f">Rice</div><svg style="left:226px;top:331px" width="56" height="14" viewBox="0 0 56 14"><circle cx="7" cy="7" r="5.4" fill="none" stroke="#111" stroke-width="1.7"/><path d="M10.4 3.6 L3.4 6.6 L6.5 7.5 L7.4 10.6 Z" fill="#111"/><path d="M27.5 2.5 H22 V12 H31 V7.5" fill="none" stroke="#111" stroke-width="1.8"/><path d="M32.5 1.2 L26.2 7.6 L25.5 9 L27 8.4 L33.4 2.1 Z" fill="#111" stroke="#111" stroke-width="1"/><rect x="42" y="2" width="10" height="1.8" fill="#111"/><rect x="45" y="0.8" width="4" height="1.5" fill="#111"/><path d="M43 4.3 H51 V11.8 Q51 13 49.8 13 H44.2 Q43 13 43 11.8 Z" fill="#111"/><rect x="45" y="5.5" width="1.2" height="6" fill="#fff"/><rect x="47.8" y="5.5" width="1.2" height="6" fill="#fff"/></svg><div class="a" style="left:0px;top:350px;width:278px;height:1px;background:#efefe9"></div><div class="a" style="left:9px;top:356px;width:12px;height:12px;border:1px solid #b7c2b2;background:#fff"></div><svg style="left:38.5px;top:357px" width="12" height="12"><polygon points="4.49,0.29 10.62,3.28 9.67,10.03 2.96,11.21 -0.24,5.19" fill="#0d7ef0" stroke="#0d7ef0" stroke-width="1" stroke-linejoin="round"/></svg><div class="t" style="left:61px;top:358px;font-size:11px;font-weight:bold;color:#15477f">Pakistan Border</div><svg style="left:226px;top:356px" width="56" height="14" viewBox="0 0 56 14"><circle cx="7" cy="7" r="5.4" fill="none" stroke="#111" stroke-width="1.7"/><path d="M10.4 3.6 L3.4 6.6 L6.5 7.5 L7.4 10.6 Z" fill="#111"/><path d="M27.5 2.5 H22 V12 H31 V7.5" fill="none" stroke="#111" stroke-width="1.8"/><path d="M32.5 1.2 L26.2 7.6 L25.5 9 L27 8.4 L33.4 2.1 Z" fill="#111" stroke="#111" stroke-width="1"/><rect x="42" y="2" width="10" height="1.8" fill="#111"/><rect x="45" y="0.8" width="4" height="1.5" fill="#111"/><path d="M43 4.3 H51 V11.8 Q51 13 49.8 13 H44.2 Q43 13 43 11.8 Z" fill="#111"/><rect x="45" y="5.5" width="1.2" height="6" fill="#fff"/><rect x="47.8" y="5.5" width="1.2" height="6" fill="#fff"/></svg><div class="a" style="left:0px;top:375px;width:278px;height:1px;background:#efefe9"></div><div class="a" style="left:9px;top:381px;width:12px;height:12px;border:1px solid #b7c2b2;background:#fff"></div><div class="a" style="left:39.0px;top:383px;width:10px;height:10px;background:#0d7ef0"></div><div class="t" style="left:61px;top:383px;font-size:11px;font-weight:bold;color:#15477f">test 789</div><svg style="left:226px;top:381px" width="56" height="14" viewBox="0 0 56 14"><circle cx="7" cy="7" r="5.4" fill="none" stroke="#111" stroke-width="1.7"/><path d="M10.4 3.6 L3.4 6.6 L6.5 7.5 L7.4 10.6 Z" fill="#111"/><path d="M27.5 2.5 H22 V12 H31 V7.5" fill="none" stroke="#111" stroke-width="1.8"/><path d="M32.5 1.2 L26.2 7.6 L25.5 9 L27 8.4 L33.4 2.1 Z" fill="#111" stroke="#111" stroke-width="1"/><rect x="42" y="2" width="10" height="1.8" fill="#111"/><rect x="45" y="0.8" width="4" height="1.5" fill="#111"/><path d="M43 4.3 H51 V11.8 Q51 13 49.8 13 H44.2 Q43 13 43 11.8 Z" fill="#111"/><rect x="45" y="5.5" width="1.2" height="6" fill="#fff"/><rect x="47.8" y="5.5" width="1.2" height="6" fill="#fff"/></svg><div class="a" style="left:0px;top:400px;width:278px;height:1px;background:#efefe9"></div><div class="a" style="left:9px;top:406px;width:12px;height:12px;border:1px solid #b7c2b2;background:#fff"></div><div class="a" style="left:39.0px;top:408px;width:10px;height:10px;background:#0d7ef0"></div><div class="t" style="left:61px;top:408px;font-size:11px;font-weight:bold;color:#15477f">tedt 786</div><svg style="left:226px;top:406px" width="56" height="14" viewBox="0 0 56 14"><circle cx="7" cy="7" r="5.4" fill="none" stroke="#111" stroke-width="1.7"/><path d="M10.4 3.6 L3.4 6.6 L6.5 7.5 L7.4 10.6 Z" fill="#111"/><path d="M27.5 2.5 H22 V12 H31 V7.5" fill="none" stroke="#111" stroke-width="1.8"/><path d="M32.5 1.2 L26.2 7.6 L25.5 9 L27 8.4 L33.4 2.1 Z" fill="#111" stroke="#111" stroke-width="1"/><rect x="42" y="2" width="10" height="1.8" fill="#111"/><rect x="45" y="0.8" width="4" height="1.5" fill="#111"/><path d="M43 4.3 H51 V11.8 Q51 13 49.8 13 H44.2 Q43 13 43 11.8 Z" fill="#111"/><rect x="45" y="5.5" width="1.2" height="6" fill="#fff"/><rect x="47.8" y="5.5" width="1.2" height="6" fill="#fff"/></svg><div class="a" style="left:0px;top:425.5px;width:279px;height:24px;background:#d3e3fa"></div><div class="a" style="left:0px;top:425px;width:278px;height:1px;background:#efefe9"></div><div class="a" style="left:9px;top:431px;width:12px;height:12px;border:1px solid #b7c2b2;background:#fff"></div><div class="a" style="left:38.5px;top:432.5px;width:11px;height:11px;border-radius:6px;background:#0d7ef0"></div><div class="t" style="left:61px;top:433px;font-size:11px;font-weight:bold;color:#15477f">testb767</div><svg style="left:226px;top:431px" width="56" height="14" viewBox="0 0 56 14"><circle cx="7" cy="7" r="5.4" fill="none" stroke="#111" stroke-width="1.7"/><path d="M10.4 3.6 L3.4 6.6 L6.5 7.5 L7.4 10.6 Z" fill="#111"/><path d="M27.5 2.5 H22 V12 H31 V7.5" fill="none" stroke="#111" stroke-width="1.8"/><path d="M32.5 1.2 L26.2 7.6 L25.5 9 L27 8.4 L33.4 2.1 Z" fill="#111" stroke="#111" stroke-width="1"/><rect x="42" y="2" width="10" height="1.8" fill="#111"/><rect x="45" y="0.8" width="4" height="1.5" fill="#111"/><path d="M43 4.3 H51 V11.8 Q51 13 49.8 13 H44.2 Q43 13 43 11.8 Z" fill="#111"/><rect x="45" y="5.5" width="1.2" height="6" fill="#fff"/><rect x="47.8" y="5.5" width="1.2" height="6" fill="#fff"/></svg><div class="a" style="left:0px;top:450px;width:278px;height:1px;background:#efefe9"></div><div class="a" style="left:9px;top:456px;width:12px;height:12px;border:1px solid #b7c2b2;background:#fff"></div><div class="a" style="left:38.5px;top:457.5px;width:11px;height:11px;border-radius:6px;background:#0d7ef0"></div><div class="t" style="left:61px;top:458px;font-size:11px;font-weight:bold;color:#15477f">testc444</div><svg style="left:226px;top:456px" width="56" height="14" viewBox="0 0 56 14"><circle cx="7" cy="7" r="5.4" fill="none" stroke="#111" stroke-width="1.7"/><path d="M10.4 3.6 L3.4 6.6 L6.5 7.5 L7.4 10.6 Z" fill="#111"/><path d="M27.5 2.5 H22 V12 H31 V7.5" fill="none" stroke="#111" stroke-width="1.8"/><path d="M32.5 1.2 L26.2 7.6 L25.5 9 L27 8.4 L33.4 2.1 Z" fill="#111" stroke="#111" stroke-width="1"/><rect x="42" y="2" width="10" height="1.8" fill="#111"/><rect x="45" y="0.8" width="4" height="1.5" fill="#111"/><path d="M43 4.3 H51 V11.8 Q51 13 49.8 13 H44.2 Q43 13 43 11.8 Z" fill="#111"/><rect x="45" y="5.5" width="1.2" height="6" fill="#fff"/><rect x="47.8" y="5.5" width="1.2" height="6" fill="#fff"/></svg><div class="a" style="left:0px;top:475px;width:278px;height:1px;background:#efefe9"></div><div class="a" style="left:9px;top:481px;width:12px;height:12px;border:1px solid #b7c2b2;background:#fff"></div><div class="a" style="left:38.5px;top:482.5px;width:11px;height:11px;border-radius:6px;background:#117a26"></div><div class="t" style="left:61px;top:483px;font-size:11px;font-weight:bold;color:#15477f">tested</div><svg style="left:226px;top:481px" width="56" height="14" viewBox="0 0 56 14"><circle cx="7" cy="7" r="5.4" fill="none" stroke="#111" stroke-width="1.7"/><path d="M10.4 3.6 L3.4 6.6 L6.5 7.5 L7.4 10.6 Z" fill="#111"/><path d="M27.5 2.5 H22 V12 H31 V7.5" fill="none" stroke="#111" stroke-width="1.8"/><path d="M32.5 1.2 L26.2 7.6 L25.5 9 L27 8.4 L33.4 2.1 Z" fill="#111" stroke="#111" stroke-width="1"/><rect x="42" y="2" width="10" height="1.8" fill="#111"/><rect x="45" y="0.8" width="4" height="1.5" fill="#111"/><path d="M43 4.3 H51 V11.8 Q51 13 49.8 13 H44.2 Q43 13 43 11.8 Z" fill="#111"/><rect x="45" y="5.5" width="1.2" height="6" fill="#fff"/><rect x="47.8" y="5.5" width="1.2" height="6" fill="#fff"/></svg><div class="a" style="left:0px;top:500px;width:278px;height:1px;background:#efefe9"></div><div class="a" style="left:9px;top:506px;width:12px;height:12px;border:1px solid #b7c2b2;background:#fff"></div><svg style="left:38.5px;top:507px" width="12" height="12"><polygon points="4.49,0.29 10.62,3.28 9.67,10.03 2.96,11.21 -0.24,5.19" fill="#0d7ef0" stroke="#0d7ef0" stroke-width="1" stroke-linejoin="round"/></svg><div class="t" style="left:61px;top:508px;font-size:11px;font-weight:bold;color:#15477f">KSBWD</div><svg style="left:226px;top:506px" width="56" height="14" viewBox="0 0 56 14"><circle cx="7" cy="7" r="5.4" fill="none" stroke="#111" stroke-width="1.7"/><path d="M10.4 3.6 L3.4 6.6 L6.5 7.5 L7.4 10.6 Z" fill="#111"/><path d="M27.5 2.5 H22 V12 H31 V7.5" fill="none" stroke="#111" stroke-width="1.8"/><path d="M32.5 1.2 L26.2 7.6 L25.5 9 L27 8.4 L33.4 2.1 Z" fill="#111" stroke="#111" stroke-width="1"/><rect x="42" y="2" width="10" height="1.8" fill="#111"/><rect x="45" y="0.8" width="4" height="1.5" fill="#111"/><path d="M43 4.3 H51 V11.8 Q51 13 49.8 13 H44.2 Q43 13 43 11.8 Z" fill="#111"/><rect x="45" y="5.5" width="1.2" height="6" fill="#fff"/><rect x="47.8" y="5.5" width="1.2" height="6" fill="#fff"/></svg><div class="a" style="left:0px;top:525px;width:278px;height:1px;background:#efefe9"></div><div class="a" style="left:9px;top:531px;width:12px;height:12px;border:1px solid #b7c2b2;background:#fff"></div><svg style="left:38.5px;top:532px" width="12" height="12"><polygon points="4.49,0.29 10.62,3.28 9.67,10.03 2.96,11.21 -0.24,5.19" fill="#117a26" stroke="#117a26" stroke-width="1" stroke-linejoin="round"/></svg><div class="t" style="left:61px;top:533px;font-size:11px;font-weight:bold;color:#15477f">Agriculture</div><svg style="left:226px;top:531px" width="56" height="14" viewBox="0 0 56 14"><circle cx="7" cy="7" r="5.4" fill="none" stroke="#111" stroke-width="1.7"/><path d="M10.4 3.6 L3.4 6.6 L6.5 7.5 L7.4 10.6 Z" fill="#111"/><path d="M27.5 2.5 H22 V12 H31 V7.5" fill="none" stroke="#111" stroke-width="1.8"/><path d="M32.5 1.2 L26.2 7.6 L25.5 9 L27 8.4 L33.4 2.1 Z" fill="#111" stroke="#111" stroke-width="1"/><rect x="42" y="2" width="10" height="1.8" fill="#111"/><rect x="45" y="0.8" width="4" height="1.5" fill="#111"/><path d="M43 4.3 H51 V11.8 Q51 13 49.8 13 H44.2 Q43 13 43 11.8 Z" fill="#111"/><rect x="45" y="5.5" width="1.2" height="6" fill="#fff"/><rect x="47.8" y="5.5" width="1.2" height="6" fill="#fff"/></svg><div class="a" style="left:0px;top:550px;width:278px;height:1px;background:#efefe9"></div><div class="a" style="left:9px;top:556px;width:12px;height:12px;border:1px solid #b7c2b2;background:#fff"></div><div class="a" style="left:39.0px;top:558px;width:10px;height:10px;background:#0d7ef0"></div><div class="t" style="left:61px;top:558px;font-size:11px;font-weight:bold;color:#15477f">test123</div><svg style="left:226px;top:556px" width="56" height="14" viewBox="0 0 56 14"><circle cx="7" cy="7" r="5.4" fill="none" stroke="#111" stroke-width="1.7"/><path d="M10.4 3.6 L3.4 6.6 L6.5 7.5 L7.4 10.6 Z" fill="#111"/><path d="M27.5 2.5 H22 V12 H31 V7.5" fill="none" stroke="#111" stroke-width="1.8"/><path d="M32.5 1.2 L26.2 7.6 L25.5 9 L27 8.4 L33.4 2.1 Z" fill="#111" stroke="#111" stroke-width="1"/><rect x="42" y="2" width="10" height="1.8" fill="#111"/><rect x="45" y="0.8" width="4" height="1.5" fill="#111"/><path d="M43 4.3 H51 V11.8 Q51 13 49.8 13 H44.2 Q43 13 43 11.8 Z" fill="#111"/><rect x="45" y="5.5" width="1.2" height="6" fill="#fff"/><rect x="47.8" y="5.5" width="1.2" height="6" fill="#fff"/></svg><div class="a" style="left:0px;top:575px;width:278px;height:1px;background:#efefe9"></div><div class="a" style="left:9px;top:581px;width:12px;height:12px;border:1px solid #b7c2b2;background:#fff"></div><svg style="left:38.5px;top:582px" width="12" height="12"><polygon points="4.49,0.29 10.62,3.28 9.67,10.03 2.96,11.21 -0.24,5.19" fill="#0d7ef0" stroke="#0d7ef0" stroke-width="1" stroke-linejoin="round"/></svg><div class="t" style="left:61px;top:583px;font-size:11px;font-weight:bold;color:#15477f">Test 1 June 2021</div><svg style="left:226px;top:581px" width="56" height="14" viewBox="0 0 56 14"><circle cx="7" cy="7" r="5.4" fill="none" stroke="#111" stroke-width="1.7"/><path d="M10.4 3.6 L3.4 6.6 L6.5 7.5 L7.4 10.6 Z" fill="#111"/><path d="M27.5 2.5 H22 V12 H31 V7.5" fill="none" stroke="#111" stroke-width="1.8"/><path d="M32.5 1.2 L26.2 7.6 L25.5 9 L27 8.4 L33.4 2.1 Z" fill="#111" stroke="#111" stroke-width="1"/><rect x="42" y="2" width="10" height="1.8" fill="#111"/><rect x="45" y="0.8" width="4" height="1.5" fill="#111"/><path d="M43 4.3 H51 V11.8 Q51 13 49.8 13 H44.2 Q43 13 43 11.8 Z" fill="#111"/><rect x="45" y="5.5" width="1.2" height="6" fill="#fff"/><rect x="47.8" y="5.5" width="1.2" height="6" fill="#fff"/></svg><div class="a" style="left:0px;top:600px;width:278px;height:1px;background:#efefe9"></div><div class="a" style="left:9px;top:606px;width:12px;height:12px;border:1px solid #b7c2b2;background:#fff"></div><svg style="left:38.5px;top:607px" width="12" height="12"><polygon points="4.49,0.29 10.62,3.28 9.67,10.03 2.96,11.21 -0.24,5.19" fill="#0d7ef0" stroke="#0d7ef0" stroke-width="1" stroke-linejoin="round"/></svg><svg style="left:226px;top:606px" width="56" height="14" viewBox="0 0 56 14"><circle cx="7" cy="7" r="5.4" fill="none" stroke="#111" stroke-width="1.7"/><path d="M10.4 3.6 L3.4 6.6 L6.5 7.5 L7.4 10.6 Z" fill="#111"/><path d="M27.5 2.5 H22 V12 H31 V7.5" fill="none" stroke="#111" stroke-width="1.8"/><path d="M32.5 1.2 L26.2 7.6 L25.5 9 L27 8.4 L33.4 2.1 Z" fill="#111" stroke="#111" stroke-width="1"/><rect x="42" y="2" width="10" height="1.8" fill="#111"/><rect x="45" y="0.8" width="4" height="1.5" fill="#111"/><path d="M43 4.3 H51 V11.8 Q51 13 49.8 13 H44.2 Q43 13 43 11.8 Z" fill="#111"/><rect x="45" y="5.5" width="1.2" height="6" fill="#fff"/><rect x="47.8" y="5.5" width="1.2" height="6" fill="#fff"/></svg></div><div class="a" style="left:172px;top:850px;width:290px;height:25px;background:#0a80f5"></div><div class="a" style="left:267px;top:850px;width:3px;height:25px;background:#fff"></div><div class="a" style="left:363px;top:850px;width:3px;height:25px;background:#fff"></div><div class="a" style="left:172px;top:850px;width:290px;height:25px;box-shadow:0 1px 3px rgba(0,0,0,.3)"></div><div class="t" style="left:172px;width:95px;text-align:center;top:857px;font-size:10.5px;color:#e4eefc">KML</div><div class="t" style="left:270px;width:93px;text-align:center;top:857px;font-size:10.5px;color:#e4eefc">XLS</div><div class="t" style="left:366px;width:96px;text-align:center;top:857px;font-size:10.5px;color:#e4eefc">PDF</div><div class="a" style="left:1558px;top:149px;width:30px;height:124px;border-radius:4px;background:#dcd8d6;box-shadow:0 0 2px rgba(0,0,0,.25);overflow:hidden"><div class="a" style="left:0;top:0;width:30px;height:31px;background:#fff"></div><div class="a" style="left:0;top:62px;width:30px;height:1px;background:#c8c4c2"></div><div class="a" style="left:0;top:93px;width:30px;height:1px;background:#c8c4c2"></div></div><svg style="left:1565px;top:157px" width="16" height="16"><path d="M1 3 L5 1 L10 3 L15 1 V13 L10 15 L5 13 L1 15 Z" fill="none" stroke="#111" stroke-width="1.6"/><path d="M5 1 V13 M10 3 V15" stroke="#111" stroke-width="1.6"/><path d="M5 1 L10 3 V15 L5 13 Z" fill="#111" opacity="0.9"/></svg><svg style="left:1565px;top:188px" width="16" height="16"><circle cx="8" cy="9" r="2.5" fill="#222"/><path d="M4 6 A5 5 0 0 1 12 6 M2 4 A8 8 0 0 1 14 4" fill="none" stroke="#333" stroke-width="1"/><path d="M3 12 Q8 15 13 12" fill="none" stroke="#333" stroke-width="1.3"/></svg><svg style="left:1567px;top:218px" width="12" height="17"><rect x="1.5" y="1" width="9" height="15" rx="2.5" fill="#111"/><circle cx="6" cy="4.5" r="1.4" fill="#dcd8d6"/><circle cx="6" cy="8.5" r="1.4" fill="#dcd8d6"/><circle cx="6" cy="12.5" r="1.4" fill="#dcd8d6"/></svg><svg style="left:1565px;top:250px" width="16" height="16"><path d="M9 1 H15 V7 L7 15 L1 9 Z" fill="#111"/><circle cx="12" cy="4" r="1.3" fill="#dcd8d6"/></svg><div class="a" style="left:1558px;top:286px;width:30px;height:61px;border-radius:4px;background:#fff;box-shadow:0 0 2px rgba(0,0,0,.25)"><div class="a" style="left:0;top:30px;width:30px;height:1px;background:#ddd"></div></div><svg style="left:1566px;top:294px" width="14" height="14"><path d="M7 1 V13 M1 7 H13" stroke="#111" stroke-width="2.4"/></svg><div class="a" style="left:1569px;top:330px;width:8px;height:3px;background:#111"></div><div class="a" style="left:1558px;top:359px;width:30px;height:30px;border-radius:4px;background:#fff;box-shadow:0 0 2px rgba(0,0,0,.25)"></div><svg style="left:1565px;top:366px" width="16" height="16"><rect x="1" y="1" width="14" height="14" fill="none" stroke="#111" stroke-width="1.6"/><path d="M1 1 H4 V12 H15 V15 H1 Z" fill="#111"/></svg><div class="a" style="left:1506px;top:877px;width:82px;height:16px;background:rgba(255,255,255,0.35)"></div><div class="a" style="left:1506px;top:877px;width:82px;height:15px;border:2px solid #666;border-top:none"></div><div class="t" style="left:1512px;top:878px;font-size:11.5px;color:#333">3 km</div><div class="a" style="left:533px;top:287px;width:600px;height:444px;border-radius:6px 6px 0 0;background:#efefec;box-shadow:0 6px 18px rgba(0,0,0,0.28), 0 0 0 1px rgba(0,0,0,0.12)"></div><div class="a" style="left:533px;top:287px;width:600px;height:30px;border-radius:6px 6px 0 0;background:linear-gradient(#52514c,#3e3d39)"></div><div class="t" style="left:533px;width:600px;text-align:center;top:294px;font-size:14.5px;font-weight:bold;color:#dfdbd2;letter-spacing:0.25px">Share your entire screen</div><svg style="left:1068px;top:291px" width="62" height="22"><circle cx="11" cy="11" r="8" fill="#5a5954" stroke="#34332f" stroke-width="1"/><path d="M7 11 H15" stroke="#2b2a27" stroke-width="1.6"/><circle cx="31" cy="11" r="8" fill="#5a5954" stroke="#34332f" stroke-width="1"/><rect x="27.5" y="7.5" width="7" height="7" fill="none" stroke="#2b2a27" stroke-width="1.4"/><circle cx="51" cy="11" r="8" fill="#e0502a" stroke="#8c2f1a" stroke-width="1"/><path d="M48 8 L54 14 M54 8 L48 14" stroke="#3a1a10" stroke-width="1.5"/></svg><div class="t" style="left:549px;top:325px;font-size:15px;color:#3c3c3c;line-height:22px;white-space:normal;width:560px">Scrnli Screenshot &amp; Screen Video Recorder wants to share the contents of your<br>screen.</div><div class="a" style="left:549px;top:377px;width:568px;height:281px;border:1px solid #b9b5ae"></div><div class="a" style="left:549px;top:377px;width:362px;height:281px;border:1.5px solid #c98270"></div><div class="a" style="left:550.5px;top:378.5px;width:359px;height:278px;border:1px solid #f8efcf"></div><div class="a" style="left:570px;top:398px;width:320px;height:240px;background:#f07548;overflow:hidden"><div class="a" style="left:0;top:30px;width:1600px;height:900px;transform:scale(0.2);transform-origin:0 0;overflow:hidden"><svg style="left:0;top:0" width="1600" height="900" viewBox="0 0 1600 900"><rect x="157" y="99" width="1443" height="801" fill="#b4dfc6"/><path d="M794 97 C798.0 112.5 810.0 158.7 818 190 C826.0 221.3 835.0 250.0 842 285 C849.0 320.0 855.0 360.8 860 400 C865.0 439.2 868.7 480.0 872 520 C875.3 560.0 878.3 604.8 880 640 C881.7 675.2 881.2 708.5 882 731 C882.8 753.5 886.2 763.5 885 775 C883.8 786.5 880.0 793.8 875 800 C870.0 806.2 861.7 807.8 855 812 C848.3 816.2 840.5 818.7 835 825 C829.5 831.3 825.3 841.7 822 850 C818.7 858.3 817.0 866.7 815 875 C813.0 883.3 810.8 895.8 810 900 L157 900 L157 99 L794 99 Z" fill="#94bff0"/><path d="M794 97 L967 97 L967 97 L975 130 L972 160 L978 205 L962 225 L955 250 L958 285 L940 330 L900 380 L870 420 L872 520 L860 400 L842 285 L818 190 L794 97 Z" fill="#efe8d9"/><path d="M1133 497 C1137.5 495.0 1150.5 488.7 1160 485 C1169.5 481.3 1180.8 478.2 1190 475 C1199.2 471.8 1207.2 467.2 1215 466 C1222.8 464.8 1229.0 466.0 1237 468 C1245.0 470.0 1257.0 473.2 1263 478 C1269.0 482.8 1268.5 492.8 1273 497 C1277.5 501.2 1282.7 505.8 1290 503 C1297.3 500.2 1309.2 483.3 1317 480 C1324.8 476.7 1330.3 479.3 1337 483 C1343.7 486.7 1349.3 501.7 1357 502 C1364.7 502.3 1370.8 487.5 1383 485 C1395.2 482.5 1416.7 487.8 1430 487 C1443.3 486.2 1451.8 479.2 1463 480 C1474.2 480.8 1485.8 494.0 1497 492 C1508.2 490.0 1519.0 470.3 1530 468 C1541.0 465.7 1551.3 475.7 1563 478 C1574.7 480.3 1593.8 481.3 1600 482" fill="none" stroke="#8fb8ef" stroke-width="5" stroke-linecap="round"/><path d="M1132 713 C1142.5 715.3 1173.2 726.2 1195 727 C1216.8 727.8 1242.0 717.3 1263 718 C1284.0 718.7 1306.8 722.8 1321 731 C1335.2 739.2 1339.0 758.7 1348 767 C1357.0 775.3 1364.5 778.0 1375 781 C1385.5 784.0 1402.0 779.0 1411 785 C1420.0 791.0 1425.2 804.2 1429 817 C1432.8 829.8 1431.0 851.5 1434 862 C1437.0 872.5 1437.3 875.5 1447 880 C1456.7 884.5 1483.0 885.7 1492 889 C1501.0 892.3 1499.5 898.2 1501 900" fill="none" stroke="#8fb8ef" stroke-width="5" stroke-linecap="round"/><path d="M1290 145 C1292.5 147.5 1296.7 156.3 1305 160 C1313.3 163.7 1325.8 164.5 1340 167 C1354.2 169.5 1378.3 174.5 1390 175 C1401.7 175.5 1400.8 170.0 1410 170 C1419.2 170.0 1435.0 173.3 1445 175 C1455.0 176.7 1460.8 178.8 1470 180 C1479.2 181.2 1495.0 181.7 1500 182" fill="none" stroke="#8fb8ef" stroke-width="1.3" stroke-linecap="round"/><path d="M1240 115 C1243.3 114.5 1255.8 111.2 1260 112 C1264.2 112.8 1264.2 118.7 1265 120" fill="none" stroke="#8fb8ef" stroke-width="1.5" stroke-linecap="round"/><path d="M950 290 C955.0 282.5 971.7 251.7 980 245 C988.3 238.3 990.0 245.8 1000 250 C1010.0 254.2 1023.3 267.5 1040 270 C1056.7 272.5 1083.3 265.0 1100 265 C1116.7 265.0 1133.3 269.2 1140 270" fill="none" stroke="#8fb8ef" stroke-width="1" stroke-linecap="round"/><path d="M1185 345 C1186.7 346.2 1193.8 348.7 1195 352 C1196.2 355.3 1194.2 363.3 1192 365 C1189.8 366.7 1183.7 362.5 1182 362 Z" fill="#8fb8ef"/><path d="M1060 770 Q1080 755 1100 765 Q1090 790 1065 785 Z" fill="#8fb8ef"/><path d="M1139 531 C1158.2 530.0 1216.7 524.3 1254 525 C1291.3 525.7 1331.8 530.3 1363 535 C1394.2 539.7 1417.7 547.3 1441 553 C1464.3 558.7 1476.5 565.8 1503 569 C1529.5 572.2 1583.8 571.5 1600 572" fill="none" stroke="#f4f9f5" stroke-width="2.2" stroke-linecap="round"/><path d="M1401 99 C1400.8 105.8 1402.7 128.2 1400 140 C1397.3 151.8 1390.0 158.3 1385 170 C1380.0 181.7 1373.3 196.7 1370 210 C1366.7 223.3 1370.0 236.7 1365 250 C1360.0 263.3 1349.2 278.3 1340 290 C1330.8 301.7 1315.8 310.8 1310 320 C1304.2 329.2 1307.5 336.7 1305 345 C1302.5 353.3 1297.5 360.8 1295 370 C1292.5 379.2 1290.8 395.0 1290 400" fill="none" stroke="#f4f9f5" stroke-width="2.2" stroke-linecap="round"/><path d="M1267 95 L1290 112" fill="none" stroke="#f4f9f5" stroke-width="2.2" stroke-linecap="round"/><path d="M1052 795 C1054.2 800.8 1061.2 812.5 1065 830 C1068.8 847.5 1073.3 888.3 1075 900" fill="none" stroke="#f4f9f5" stroke-width="2.2" stroke-linecap="round"/><path d="M990 207 C1001.7 207.5 1044.2 209.2 1060 210 C1075.8 210.8 1076.7 211.2 1085 212 C1093.3 212.8 1101.7 212.3 1110 215 C1118.3 217.7 1127.3 222.2 1135 228 C1142.7 233.8 1141.7 238.0 1156 250 C1170.3 262.0 1205.2 288.3 1221 300 C1236.8 311.7 1237.2 313.8 1251 320 C1264.8 326.2 1290.5 332.8 1304 337 C1317.5 341.2 1318.5 344.3 1332 345 C1345.5 345.7 1373.7 338.5 1385 341 C1396.3 343.5 1398.5 354.8 1400 360 C1401.5 365.2 1400.2 368.0 1394 372 C1387.8 376.0 1375.8 378.8 1363 384 C1350.2 389.2 1340.3 399.7 1317 403 C1293.7 406.3 1244.8 403.7 1223 404 C1201.2 404.3 1196.3 403.7 1186 405 C1175.7 406.3 1168.8 407.8 1161 412 C1153.2 416.2 1142.7 427.0 1139 430" fill="none" stroke="#e8b960" stroke-width="4" stroke-linecap="round"/><path d="M990 207 C1001.7 207.5 1044.2 209.2 1060 210 C1075.8 210.8 1076.7 211.2 1085 212 C1093.3 212.8 1101.7 212.3 1110 215 C1118.3 217.7 1127.3 222.2 1135 228 C1142.7 233.8 1141.7 238.0 1156 250 C1170.3 262.0 1205.2 288.3 1221 300 C1236.8 311.7 1237.2 313.8 1251 320 C1264.8 326.2 1290.5 332.8 1304 337 C1317.5 341.2 1318.5 344.3 1332 345 C1345.5 345.7 1373.7 338.5 1385 341 C1396.3 343.5 1398.5 354.8 1400 360 C1401.5 365.2 1400.2 368.0 1394 372 C1387.8 376.0 1375.8 378.8 1363 384 C1350.2 389.2 1340.3 399.7 1317 403 C1293.7 406.3 1244.8 403.7 1223 404 C1201.2 404.3 1196.3 403.7 1186 405 C1175.7 406.3 1168.8 407.8 1161 412 C1153.2 416.2 1142.7 427.0 1139 430" fill="none" stroke="#fbd88e" stroke-width="2.2" stroke-linecap="round"/><path d="M1394 372 C1400.8 372.0 1423.0 370.7 1435 372 C1447.0 373.3 1456.7 377.8 1466 380 C1475.3 382.2 1479.7 385.3 1491 385 C1502.3 384.7 1515.8 381.8 1534 378 C1552.2 374.2 1589.0 364.7 1600 362" fill="none" stroke="#e8b960" stroke-width="4" stroke-linecap="round"/><path d="M1394 372 C1400.8 372.0 1423.0 370.7 1435 372 C1447.0 373.3 1456.7 377.8 1466 380 C1475.3 382.2 1479.7 385.3 1491 385 C1502.3 384.7 1515.8 381.8 1534 378 C1552.2 374.2 1589.0 364.7 1600 362" fill="none" stroke="#fbd88e" stroke-width="2.2" stroke-linecap="round"/><path d="M1060 97 C1062.0 102.5 1069.2 119.5 1072 130 C1074.8 140.5 1077.3 150.0 1077 160 C1076.7 170.0 1071.2 182.2 1070 190 C1068.8 197.8 1070.0 204.2 1070 207" fill="none" stroke="#e8b960" stroke-width="4" stroke-linecap="round"/><path d="M1060 97 C1062.0 102.5 1069.2 119.5 1072 130 C1074.8 140.5 1077.3 150.0 1077 160 C1076.7 170.0 1071.2 182.2 1070 190 C1068.8 197.8 1070.0 204.2 1070 207" fill="none" stroke="#fbd88e" stroke-width="2.2" stroke-linecap="round"/><path d="M1092 757 C1082.5 755.0 1051.2 746.2 1035 745 C1018.8 743.8 1002.5 751.3 995 750 C987.5 748.7 993.3 740.2 990 737 C986.7 733.8 977.5 732.0 975 731" fill="none" stroke="#e8b960" stroke-width="4" stroke-linecap="round"/><path d="M1092 757 C1082.5 755.0 1051.2 746.2 1035 745 C1018.8 743.8 1002.5 751.3 995 750 C987.5 748.7 993.3 740.2 990 737 C986.7 733.8 977.5 732.0 975 731" fill="none" stroke="#fbd88e" stroke-width="2.2" stroke-linecap="round"/><path d="M835 852 C832.8 854.7 824.8 862.7 822 868 C819.2 873.3 817.7 879.8 818 884 C818.3 888.2 819.5 892.0 824 893 C828.5 894.0 839.3 891.0 845 890 C850.7 889.0 857.2 890.3 858 887 C858.8 883.7 852.7 874.8 850 870 C847.3 865.2 844.5 861.0 842 858 C839.5 855.0 836.2 853.0 835 852" fill="none" stroke="#e8b960" stroke-width="4" stroke-linecap="round"/><path d="M835 852 C832.8 854.7 824.8 862.7 822 868 C819.2 873.3 817.7 879.8 818 884 C818.3 888.2 819.5 892.0 824 893 C828.5 894.0 839.3 891.0 845 890 C850.7 889.0 857.2 890.3 858 887 C858.8 883.7 852.7 874.8 850 870 C847.3 865.2 844.5 861.0 842 858 C839.5 855.0 836.2 853.0 835 852" fill="none" stroke="#fbd88e" stroke-width="2.2" stroke-linecap="round"/><path d="M1297 97 C1293.5 99.2 1282.5 104.3 1276 110 C1269.5 115.7 1265.0 126.5 1258 131 C1251.0 135.5 1242.7 132.2 1234 137 C1225.3 141.8 1214.7 154.8 1206 160 C1197.3 165.2 1190.3 164.7 1182 168 C1173.7 171.3 1165.5 173.8 1156 180 C1146.5 186.2 1138.5 194.2 1125 205 C1111.5 215.8 1084.2 231.7 1075 245 C1065.8 258.3 1070.8 278.3 1070 285" fill="none" stroke="#e9f6ec" stroke-width="6.5" stroke-linecap="round" opacity="0.7"/><path d="M1297 97 C1293.5 99.2 1282.5 104.3 1276 110 C1269.5 115.7 1265.0 126.5 1258 131 C1251.0 135.5 1242.7 132.2 1234 137 C1225.3 141.8 1214.7 154.8 1206 160 C1197.3 165.2 1190.3 164.7 1182 168 C1173.7 171.3 1165.5 173.8 1156 180 C1146.5 186.2 1138.5 194.2 1125 205 C1111.5 215.8 1084.2 231.7 1075 245 C1065.8 258.3 1070.8 278.3 1070 285" fill="none" stroke="#47cc60" stroke-width="4.6" stroke-linecap="round"/><path d="M1297 97 C1293.5 99.2 1282.5 104.3 1276 110 C1269.5 115.7 1265.0 126.5 1258 131 C1251.0 135.5 1242.7 132.2 1234 137 C1225.3 141.8 1214.7 154.8 1206 160 C1197.3 165.2 1190.3 164.7 1182 168 C1173.7 171.3 1165.5 173.8 1156 180 C1146.5 186.2 1138.5 194.2 1125 205 C1111.5 215.8 1084.2 231.7 1075 245 C1065.8 258.3 1070.8 278.3 1070 285" fill="none" stroke="#9fdcae" stroke-width="0.9" stroke-linecap="round"/><path d="M1092 731 C1089.2 735.8 1081.7 749.3 1075 760 C1068.3 770.7 1058.7 782.5 1052 795 C1045.3 807.5 1039.5 824.5 1035 835 C1030.5 845.5 1030.8 847.2 1025 858 C1019.2 868.8 1004.2 893.0 1000 900" fill="none" stroke="#e9f6ec" stroke-width="6.5" stroke-linecap="round" opacity="0.7"/><path d="M1092 731 C1089.2 735.8 1081.7 749.3 1075 760 C1068.3 770.7 1058.7 782.5 1052 795 C1045.3 807.5 1039.5 824.5 1035 835 C1030.5 845.5 1030.8 847.2 1025 858 C1019.2 868.8 1004.2 893.0 1000 900" fill="none" stroke="#47cc60" stroke-width="4.6" stroke-linecap="round"/><path d="M1092 731 C1089.2 735.8 1081.7 749.3 1075 760 C1068.3 770.7 1058.7 782.5 1052 795 C1045.3 807.5 1039.5 824.5 1035 835 C1030.5 845.5 1030.8 847.2 1025 858 C1019.2 868.8 1004.2 893.0 1000 900" fill="none" stroke="#9fdcae" stroke-width="0.9" stroke-linecap="round"/><path d="M1452 97 C1453.7 101.7 1459.8 114.5 1462 125 C1464.2 135.5 1463.3 149.2 1465 160 C1466.7 170.8 1468.5 181.3 1472 190 C1475.5 198.7 1482.7 201.0 1486 212 C1489.3 223.0 1489.3 242.0 1492 256 C1494.7 270.0 1500.0 281.7 1502 296 C1504.0 310.3 1505.7 329.5 1504 342 C1502.3 354.5 1494.2 363.8 1492 371 C1489.8 378.2 1490.2 378.0 1491 385 C1491.8 392.0 1493.5 402.2 1497 413 C1500.5 423.8 1505.3 440.7 1512 450 C1518.7 459.3 1527.0 461.7 1537 469 C1547.0 476.3 1561.5 485.2 1572 494 C1582.5 502.8 1595.3 517.3 1600 522" fill="none" stroke="#e9f6ec" stroke-width="6.5" stroke-linecap="round" opacity="0.7"/><path d="M1452 97 C1453.7 101.7 1459.8 114.5 1462 125 C1464.2 135.5 1463.3 149.2 1465 160 C1466.7 170.8 1468.5 181.3 1472 190 C1475.5 198.7 1482.7 201.0 1486 212 C1489.3 223.0 1489.3 242.0 1492 256 C1494.7 270.0 1500.0 281.7 1502 296 C1504.0 310.3 1505.7 329.5 1504 342 C1502.3 354.5 1494.2 363.8 1492 371 C1489.8 378.2 1490.2 378.0 1491 385 C1491.8 392.0 1493.5 402.2 1497 413 C1500.5 423.8 1505.3 440.7 1512 450 C1518.7 459.3 1527.0 461.7 1537 469 C1547.0 476.3 1561.5 485.2 1572 494 C1582.5 502.8 1595.3 517.3 1600 522" fill="none" stroke="#47cc60" stroke-width="4.6" stroke-linecap="round"/><path d="M1452 97 C1453.7 101.7 1459.8 114.5 1462 125 C1464.2 135.5 1463.3 149.2 1465 160 C1466.7 170.8 1468.5 181.3 1472 190 C1475.5 198.7 1482.7 201.0 1486 212 C1489.3 223.0 1489.3 242.0 1492 256 C1494.7 270.0 1500.0 281.7 1502 296 C1504.0 310.3 1505.7 329.5 1504 342 C1502.3 354.5 1494.2 363.8 1492 371 C1489.8 378.2 1490.2 378.0 1491 385 C1491.8 392.0 1493.5 402.2 1497 413 C1500.5 423.8 1505.3 440.7 1512 450 C1518.7 459.3 1527.0 461.7 1537 469 C1547.0 476.3 1561.5 485.2 1572 494 C1582.5 502.8 1595.3 517.3 1600 522" fill="none" stroke="#9fdcae" stroke-width="0.9" stroke-linecap="round"/><path d="M1130 535 C1133.2 537.5 1138.7 546.0 1149 550 C1159.3 554.0 1165.7 550.7 1192 559 C1218.3 567.3 1281.0 590.2 1307 600 C1333.0 609.8 1323.0 613.0 1348 618 C1373.0 623.0 1434.8 625.3 1457 630 C1479.2 634.7 1465.5 643.3 1481 646 C1496.5 648.7 1530.2 642.3 1550 646 C1569.8 649.7 1591.7 664.3 1600 668" fill="none" stroke="#e9f6ec" stroke-width="6.5" stroke-linecap="round" opacity="0.7"/><path d="M1130 535 C1133.2 537.5 1138.7 546.0 1149 550 C1159.3 554.0 1165.7 550.7 1192 559 C1218.3 567.3 1281.0 590.2 1307 600 C1333.0 609.8 1323.0 613.0 1348 618 C1373.0 623.0 1434.8 625.3 1457 630 C1479.2 634.7 1465.5 643.3 1481 646 C1496.5 648.7 1530.2 642.3 1550 646 C1569.8 649.7 1591.7 664.3 1600 668" fill="none" stroke="#47cc60" stroke-width="4.6" stroke-linecap="round"/><path d="M1130 535 C1133.2 537.5 1138.7 546.0 1149 550 C1159.3 554.0 1165.7 550.7 1192 559 C1218.3 567.3 1281.0 590.2 1307 600 C1333.0 609.8 1323.0 613.0 1348 618 C1373.0 623.0 1434.8 625.3 1457 630 C1479.2 634.7 1465.5 643.3 1481 646 C1496.5 648.7 1530.2 642.3 1550 646 C1569.8 649.7 1591.7 664.3 1600 668" fill="none" stroke="#9fdcae" stroke-width="0.9" stroke-linecap="round"/><path d="M1130 763 C1135.7 763.0 1148.5 759.2 1164 763 C1179.5 766.8 1200.2 776.0 1223 786 C1245.8 796.0 1279.8 812.7 1301 823 C1322.2 833.3 1335.2 839.8 1350 848 C1364.8 856.2 1378.3 863.3 1390 872 C1401.7 880.7 1415.0 895.3 1420 900" fill="none" stroke="#e9f6ec" stroke-width="6.5" stroke-linecap="round" opacity="0.7"/><path d="M1130 763 C1135.7 763.0 1148.5 759.2 1164 763 C1179.5 766.8 1200.2 776.0 1223 786 C1245.8 796.0 1279.8 812.7 1301 823 C1322.2 833.3 1335.2 839.8 1350 848 C1364.8 856.2 1378.3 863.3 1390 872 C1401.7 880.7 1415.0 895.3 1420 900" fill="none" stroke="#47cc60" stroke-width="4.6" stroke-linecap="round"/><path d="M1130 763 C1135.7 763.0 1148.5 759.2 1164 763 C1179.5 766.8 1200.2 776.0 1223 786 C1245.8 796.0 1279.8 812.7 1301 823 C1322.2 833.3 1335.2 839.8 1350 848 C1364.8 856.2 1378.3 863.3 1390 872 C1401.7 880.7 1415.0 895.3 1420 900" fill="none" stroke="#9fdcae" stroke-width="0.9" stroke-linecap="round"/><path d="M1092 757 C1096.2 757.8 1105.7 761.0 1117 762 C1128.3 763.0 1152.8 762.8 1160 763" fill="none" stroke="#e9f6ec" stroke-width="6.5" stroke-linecap="round" opacity="0.7"/><path d="M1092 757 C1096.2 757.8 1105.7 761.0 1117 762 C1128.3 763.0 1152.8 762.8 1160 763" fill="none" stroke="#47cc60" stroke-width="4.6" stroke-linecap="round"/><path d="M1092 757 C1096.2 757.8 1105.7 761.0 1117 762 C1128.3 763.0 1152.8 762.8 1160 763" fill="none" stroke="#9fdcae" stroke-width="0.9" stroke-linecap="round"/><path d="M925 731 C922.5 734.2 913.3 738.5 910 750 C906.7 761.5 907.0 785.0 905 800 C903.0 815.0 900.2 828.3 898 840 C895.8 851.7 893.3 860.0 892 870 C890.7 880.0 890.3 895.0 890 900" fill="none" stroke="#e9f6ec" stroke-width="6.5" stroke-linecap="round" opacity="0.7"/><path d="M925 731 C922.5 734.2 913.3 738.5 910 750 C906.7 761.5 907.0 785.0 905 800 C903.0 815.0 900.2 828.3 898 840 C895.8 851.7 893.3 860.0 892 870 C890.7 880.0 890.3 895.0 890 900" fill="none" stroke="#47cc60" stroke-width="4.6" stroke-linecap="round"/><path d="M925 731 C922.5 734.2 913.3 738.5 910 750 C906.7 761.5 907.0 785.0 905 800 C903.0 815.0 900.2 828.3 898 840 C895.8 851.7 893.3 860.0 892 870 C890.7 880.0 890.3 895.0 890 900" fill="none" stroke="#9fdcae" stroke-width="0.9" stroke-linecap="round"/><path d="M856 887 C859.2 887.8 868.5 890.5 875 892 C881.5 893.5 884.2 894.7 895 896 C905.8 897.3 932.5 899.3 940 900" fill="none" stroke="#e9f6ec" stroke-width="6.5" stroke-linecap="round" opacity="0.7"/><path d="M856 887 C859.2 887.8 868.5 890.5 875 892 C881.5 893.5 884.2 894.7 895 896 C905.8 897.3 932.5 899.3 940 900" fill="none" stroke="#47cc60" stroke-width="4.6" stroke-linecap="round"/><path d="M856 887 C859.2 887.8 868.5 890.5 875 892 C881.5 893.5 884.2 894.7 895 896 C905.8 897.3 932.5 899.3 940 900" fill="none" stroke="#9fdcae" stroke-width="0.9" stroke-linecap="round"/><path d="M977 207 C978.3 208.7 984.5 210.7 985 217 C985.5 223.3 982.5 237.5 980 245 C977.5 252.5 973.0 255.0 970 262 C967.0 269.0 963.3 282.8 962 287" fill="none" stroke="#e9f6ec" stroke-width="6.5" stroke-linecap="round" opacity="0.7"/><path d="M977 207 C978.3 208.7 984.5 210.7 985 217 C985.5 223.3 982.5 237.5 980 245 C977.5 252.5 973.0 255.0 970 262 C967.0 269.0 963.3 282.8 962 287" fill="none" stroke="#47cc60" stroke-width="4.6" stroke-linecap="round"/><path d="M977 207 C978.3 208.7 984.5 210.7 985 217 C985.5 223.3 982.5 237.5 980 245 C977.5 252.5 973.0 255.0 970 262 C967.0 269.0 963.3 282.8 962 287" fill="none" stroke="#9fdcae" stroke-width="0.9" stroke-linecap="round"/><path d="M927 97 C930.0 105.0 939.5 135.3 945 145 C950.5 154.7 954.7 144.7 960 155 C965.3 165.3 974.2 198.3 977 207" fill="none" stroke="#e8b960" stroke-width="4.4" stroke-linecap="round"/><path d="M927 97 C930.0 105.0 939.5 135.3 945 145 C950.5 154.7 954.7 144.7 960 155 C965.3 165.3 974.2 198.3 977 207" fill="none" stroke="#fbd88e" stroke-width="2.6" stroke-linecap="round"/><path d="M927 97 C930.0 105.0 939.5 135.3 945 145 C950.5 154.7 954.7 144.7 960 155 C965.3 165.3 974.2 198.3 977 207" fill="none" stroke="#47cc60" stroke-width="4" stroke-dasharray="14 12"/><path d="M925 731 C922.5 734.2 913.3 738.5 910 750 C906.7 761.5 907.0 785.0 905 800 C903.0 815.0 900.2 828.3 898 840 C895.8 851.7 893.3 860.0 892 870 C890.7 880.0 890.3 895.0 890 900" fill="none" stroke="#f0894e" stroke-width="4.2" stroke-dasharray="14 8"/><path d="M1130 763 C1135.7 763.0 1148.5 759.2 1164 763 C1179.5 766.8 1200.2 776.0 1223 786 C1245.8 796.0 1279.8 812.7 1301 823 C1322.2 833.3 1335.2 839.8 1350 848 C1364.8 856.2 1378.3 863.3 1390 872 C1401.7 880.7 1415.0 895.3 1420 900" fill="none" stroke="#f0894e" stroke-width="4.2" stroke-dasharray="8 18"/><path d="M1307 600 C1313.8 603.0 1323.0 613.0 1348 618 C1373.0 623.0 1434.8 625.3 1457 630 C1479.2 634.7 1465.5 643.3 1481 646 C1496.5 648.7 1530.2 642.3 1550 646 C1569.8 649.7 1591.7 664.3 1600 668" fill="none" stroke="#f0894e" stroke-width="4.2" stroke-dasharray="7 16"/><path d="M1092 757 C1096.2 757.8 1105.7 761.0 1117 762 C1128.3 763.0 1152.8 762.8 1160 763" fill="none" stroke="#f0894e" stroke-width="4.2" stroke-dasharray="10 8"/><g font-family="Liberation Sans" font-size="12.5" fill="#4d4d4d" text-anchor="middle" stroke="#eaf6ee" stroke-width="2.6" paint-order="stroke" stroke-linejoin="round"><text x="849" y="122">Kakwadi</text><text x="849" y="135" font-size="12" fill="#4d4d4d" letter-spacing="0.4">awcma</text><text x="939" y="124">Kakwadi Danti</text><text x="1008" y="146">Untdi</text><text x="1008" y="159" font-size="12" fill="#4d4d4d" letter-spacing="0.4">nceu</text><text x="857" y="173">Dandi</text><text x="857" y="227">Bhagal</text><text x="1017" y="208">Dharasana</text><text x="1017" y="221" font-size="12" fill="#4d4d4d" letter-spacing="0.4">rnceuoa</text><text x="1070" y="202">Dungri</text><text x="1070" y="215" font-size="12" fill="#4d4d4d" letter-spacing="0.4">marnc</text><text x="1203" y="115">Vaghaldhara</text><text x="1203" y="128" font-size="12" fill="#4d4d4d" letter-spacing="0.4">oawcmarnc</text><text x="1283" y="131">Balwada</text><text x="1283" y="144" font-size="12" fill="#4d4d4d" letter-spacing="0.4">awcma</text><text x="1223" y="149">Panchlai</text><text x="1223" y="162" font-size="12" fill="#4d4d4d" letter-spacing="0.4">euoawc</text><text x="1150" y="189">Sonwada</text><text x="1150" y="202" font-size="12" fill="#4d4d4d" letter-spacing="0.4">awcma</text><text x="1283" y="188">Gorgam</text><text x="1283" y="201" font-size="12" fill="#4d4d4d" letter-spacing="0.4">marnc</text><text x="1484" y="115">Pipalgabhan</text><text x="1484" y="128" font-size="12" fill="#4d4d4d" letter-spacing="0.4">oawcmarnc</text><text x="1446" y="161">Soldhara</text><text x="1446" y="174" font-size="12" fill="#4d4d4d" letter-spacing="0.4">euoawc</text><text x="1420" y="245">Ghej</text><text x="1420" y="258" font-size="12" fill="#4d4d4d" letter-spacing="0.4">uoa</text><text x="1523" y="235">Vad</text><text x="1523" y="248" font-size="12" fill="#4d4d4d" letter-spacing="0.4">wcm</text><text x="1235" y="296">Dhanori</text><text x="1235" y="309" font-size="12" fill="#4d4d4d" letter-spacing="0.4">awcma</text><text x="1352" y="323">Atgam</text><text x="1352" y="336" font-size="12" fill="#4d4d4d" letter-spacing="0.4">nceu</text><text x="1447" y="306">Vav</text><text x="1447" y="319" font-size="12" fill="#4d4d4d" letter-spacing="0.4">wcm</text><text x="1590" y="275">Pardi</text><text x="1590" y="288" font-size="12" fill="#4d4d4d" letter-spacing="0.4">nceu</text><text x="1343" y="388">Segva</text><text x="1343" y="401" font-size="12" fill="#4d4d4d" letter-spacing="0.4">nceu</text><text x="1494" y="385">Khergam</text><text x="1494" y="398" font-size="12" fill="#4d4d4d" letter-spacing="0.4">awcma</text><text x="1317" y="436">Kalwada</text><text x="1317" y="449" font-size="12" fill="#4d4d4d" letter-spacing="0.4">awcma</text><text x="1395" y="436">Pitha</text><text x="1395" y="449" font-size="12" fill="#4d4d4d" letter-spacing="0.4">nceu</text><text x="1481" y="445">Nandhai</text><text x="1481" y="458" font-size="12" fill="#4d4d4d" letter-spacing="0.4">awcma</text><text x="1550" y="420">Bahej</text><text x="1550" y="433" font-size="12" fill="#4d4d4d" letter-spacing="0.4">nceu</text><text x="1585" y="397">Deba</text><text x="1585" y="410" font-size="12" fill="#4d4d4d" letter-spacing="0.4">uoa</text><text x="1171" y="514">Jujwa</text><text x="1171" y="527" font-size="12" fill="#4d4d4d" letter-spacing="0.4">nceu</text><text x="1325" y="520">Kanjan</text><text x="1325" y="533">Ranchhod</text><text x="1325" y="546" font-size="12" fill="#4d4d4d" letter-spacing="0.4">euoawc</text><text x="1481" y="517">Marala</text><text x="1481" y="530" font-size="12" fill="#4d4d4d" letter-spacing="0.4">marnc</text><text x="1171" y="550">Pathri</text><text x="1171" y="563" font-size="12" fill="#4d4d4d" letter-spacing="0.4">marnc</text><text x="1240" y="561">Gadaria</text><text x="1240" y="574" font-size="12" fill="#4d4d4d" letter-spacing="0.4">awcma</text><text x="1455" y="564">Kaparia</text><text x="1455" y="577" font-size="12" fill="#4d4d4d" letter-spacing="0.4">awcma</text><text x="1588" y="586">Bars</text><text x="1588" y="599" font-size="12" fill="#4d4d4d" letter-spacing="0.4">uoa</text><text x="1150" y="598">hanvai</text><text x="1150" y="611" font-size="12" fill="#4d4d4d" letter-spacing="0.4">marnc</text><text x="1326" y="605">Ronvel</text><text x="1326" y="618" font-size="12" fill="#4d4d4d" letter-spacing="0.4">marnc</text><text x="1429" y="612">Bhutsar</text><text x="1429" y="625" font-size="12" fill="#4d4d4d" letter-spacing="0.4">awcma</text><text x="1536" y="617">Dulsad</text><text x="1536" y="630" font-size="12" fill="#4d4d4d" letter-spacing="0.4">marnc</text><text x="1533" y="665">Vankal</text><text x="1533" y="678" font-size="12" fill="#4d4d4d" letter-spacing="0.4">marnc</text><text x="1172" y="676">Binwada</text><text x="1172" y="689" font-size="12" fill="#4d4d4d" letter-spacing="0.4">awcma</text><text x="1248" y="694">Rabada</text><text x="1248" y="707" font-size="12" fill="#4d4d4d" letter-spacing="0.4">marnc</text><text x="1446" y="681">Valandi</text><text x="1446" y="694" font-size="12" fill="#4d4d4d" letter-spacing="0.4">awcma</text><text x="1446" y="718">Ozar</text><text x="1446" y="731" font-size="12" fill="#4d4d4d" letter-spacing="0.4">uoa</text><text x="1317" y="759">Parvasa</text><text x="1317" y="772" font-size="12" fill="#4d4d4d" letter-spacing="0.4">awcma</text><text x="1213" y="770">Sondhalwada</text><text x="1213" y="783" font-size="12" fill="#4d4d4d" letter-spacing="0.4">oawcmarnc</text><text x="1490" y="776">Faladhara</text><text x="1490" y="789" font-size="12" fill="#4d4d4d" letter-spacing="0.4">rnceuoa</text><text x="1580" y="796">Tiskari</text><text x="1580" y="809" font-size="12" fill="#4d4d4d" letter-spacing="0.4">awcma</text><text x="1223" y="831">Sukhesh</text><text x="1223" y="844" font-size="12" fill="#4d4d4d" letter-spacing="0.4">awcma</text><text x="1343" y="841">Mota</text><text x="1343" y="854">Waghchhipa</text><text x="1343" y="867" font-size="12" fill="#4d4d4d" letter-spacing="0.4">cmarnceu</text><text x="1490" y="847">Velvach</text><text x="1490" y="860" font-size="12" fill="#4d4d4d" letter-spacing="0.4">awcma</text><text x="1462" y="894">Lakhmapor</text><text x="1137" y="840">Sukhlav</text><text x="1137" y="853" font-size="12" fill="#4d4d4d" letter-spacing="0.4">awcma</text><text x="1084" y="865">Velparva</text><text x="1084" y="878" font-size="12" fill="#4d4d4d" letter-spacing="0.4">euoawc</text><text x="1020" y="894">Khadki</text><text x="1066" y="755">Killa-pardi</text><text x="1066" y="768" font-size="12" fill="#4d4d4d" letter-spacing="0.4">oawcmarnc</text><text x="844" y="836">Udvada</text><text x="844" y="849" font-size="12" fill="#4d4d4d" letter-spacing="0.4">marnc</text><text x="896" y="867">Kalsar</text><text x="896" y="880" font-size="12" fill="#4d4d4d" letter-spacing="0.4">marnc</text><text x="1148" y="415">lav</text><text x="1148" y="428" font-size="12" fill="#4d4d4d" letter-spacing="0.4">wcm</text><text x="1545" y="339">Ruzvani</text><text x="1545" y="352" font-size="12" fill="#4d4d4d" letter-spacing="0.4">awcma</text></g><g font-family="Liberation Sans" font-size="10.5" fill="#6b4a2a" stroke="#fff" stroke-width="2" paint-order="stroke"><text transform="translate(966,176) rotate(68)" text-anchor="middle">Coastal Hwy</text><text transform="translate(899,803) rotate(-82)" text-anchor="middle">Coastal Hwy</text></g><text transform="translate(1436,840) rotate(80)" text-anchor="middle" font-family="Liberation Sans" font-size="10" fill="#2a5fb0">Par River</text><g><path d="M1065.0 157 Q1072 154 1079.0 157 V167 Q1072 173 1065.0 167 Z" fill="#fff" stroke="#555" stroke-width="1"/><rect x="1065.0" y="156" width="14" height="3" fill="#4d9b5a"/><text x="1072" y="167.5" font-family="Liberation Sans" font-size="10" fill="#333" text-anchor="middle">6</text></g><g><rect x="1061.0" y="271" width="20" height="16" rx="2" fill="#f5c34c"/><text x="1071" y="283" font-family="Liberation Sans" font-size="10" fill="#333" text-anchor="middle">48</text></g><g><path d="M1469.0 200 Q1482 197 1495.0 200 V210 Q1482 216 1469.0 210 Z" fill="#fff" stroke="#555" stroke-width="1"/><rect x="1469.0" y="199" width="26" height="3" fill="#4d9b5a"/><text x="1482" y="210.5" font-family="Liberation Sans" font-size="10" fill="#333" text-anchor="middle">181</text></g><g><path d="M1161.0 399 Q1171 396 1181.0 399 V409 Q1171 415 1161.0 409 Z" fill="#fff" stroke="#555" stroke-width="1"/><rect x="1161.0" y="398" width="20" height="3" fill="#4d9b5a"/><text x="1171" y="409.5" font-family="Liberation Sans" font-size="10" fill="#333" text-anchor="middle">67</text></g><g><path d="M1434.0 368 Q1444 365 1454.0 368 V378 Q1444 384 1434.0 378 Z" fill="#fff" stroke="#555" stroke-width="1"/><rect x="1434.0" y="367" width="20" height="3" fill="#4d9b5a"/><text x="1444" y="378.5" font-family="Liberation Sans" font-size="10" fill="#333" text-anchor="middle">67</text></g><g><path d="M1533.0 367 Q1546 364 1559.0 367 V377 Q1546 383 1533.0 377 Z" fill="#fff" stroke="#555" stroke-width="1"/><rect x="1533.0" y="366" width="26" height="3" fill="#4d9b5a"/><text x="1546" y="377.5" font-family="Liberation Sans" font-size="10" fill="#333" text-anchor="middle">701</text></g><g><rect x="1104.0" y="754" width="26" height="16" rx="2" fill="#f5c34c"/><text x="1117" y="766" font-family="Liberation Sans" font-size="10" fill="#333" text-anchor="middle">848</text></g><g><path d="M1039.0 780 Q1052 777 1065.0 780 V790 Q1052 796 1039.0 790 Z" fill="#fff" stroke="#555" stroke-width="1"/><rect x="1039.0" y="779" width="26" height="3" fill="#4d9b5a"/><text x="1052" y="790.5" font-family="Liberation Sans" font-size="10" fill="#333" text-anchor="middle">186</text></g><g><rect x="1015.0" y="850" width="20" height="16" rx="2" fill="#f5c34c"/><text x="1025" y="862" font-family="Liberation Sans" font-size="10" fill="#333" text-anchor="middle">48</text></g></svg><div class="a" style="left:0;top:0;width:1600px;height:27px;background:linear-gradient(#4b4a45,#3b3a36)"></div><div class="a" style="left:0;top:26px;width:1600px;height:1px;background:#55534e"></div><div class="t" style="left:12px;top:5px;font-size:14.5px;font-weight:bold;color:#e6e3de;letter-spacing:0.2px">Activities</div><svg style="left:98.5px;top:4.5px" width="18" height="18" viewBox="98.5 4.5 18 18"><path d="M107.50 13.50 L100.57 9.50 A8 8 0 0 1 114.43 9.50 Z" fill="#db4437"/><path d="M107.50 13.50 L114.43 9.50 A8 8 0 0 1 107.50 21.50 Z" fill="#f4c20d"/><path d="M107.50 13.50 L107.50 21.50 A8 8 0 0 1 100.57 9.50 Z" fill="#0f9d58"/><circle cx="107.5" cy="13.5" r="4.00" fill="#fff"/><circle cx="107.5" cy="13.5" r="3.36" fill="#4285f4"/></svg><div class="t" style="left:122px;top:5px;font-size:14.5px;font-weight:bold;color:#e6e3de;letter-spacing:0.3px">Google Chrome</div><svg style="left:237px;top:9px" width="14" height="9"><path d="M1 1 L13 1 L7 7 Z" fill="#dcd9d4"/></svg><div class="t" style="left:800px;top:5px;font-size:14.5px;font-weight:bold;color:#e6e3de;letter-spacing:0.3px">Thu 11:34</div><svg style="left:1441px;top:2px" width="24" height="24"><circle cx="12" cy="11" r="10.5" fill="#d5303a"/><rect x="4.5" y="8.5" width="15" height="5" fill="#fff"/></svg><svg style="left:1490px;top:5px" width="20" height="18"><rect x="7.5" y="1" width="5" height="4.5" fill="#dcd9d4"/><rect x="1" y="12" width="5" height="4.5" fill="#dcd9d4"/><rect x="7.5" y="12" width="5" height="4.5" fill="#dcd9d4"/><rect x="14" y="12" width="5" height="4.5" fill="#dcd9d4"/><path d="M10 5 V12 M3.5 12 V9 H16.5 V12" stroke="#dcd9d4" stroke-width="1.5" fill="none"/></svg><svg style="left:1518px;top:5px" width="20" height="18"><path d="M1 6 H5 L10 2 V16 L5 12 H1 Z" fill="#dcd9d4"/><path d="M12.5 6 Q14.5 9 12.5 12 M14.5 4 Q18 9 14.5 14" stroke="#dcd9d4" stroke-width="1.5" fill="none"/></svg><svg style="left:1547px;top:4px" width="20" height="20"><path d="M6 5.5 A7 7 0 1 0 14 5.5" stroke="#dcd9d4" stroke-width="2" fill="none"/><path d="M10 2 V10" stroke="#dcd9d4" stroke-width="2"/></svg><svg style="left:1573px;top:9px" width="14" height="9"><path d="M1 1 L13 1 L7 7 Z" fill="#dcd9d4"/></svg><div class="a" style="left:0;top:27px;width:67px;height:873px;background:#45353a"></div><svg style="left:8px;top:33px" width="50" height="52" viewBox="0 0 50 52"><defs><linearGradient id="ffg" x1="0.8" y1="0" x2="0.2" y2="1"><stop offset="0" stop-color="#ffe03d"/><stop offset="0.4" stop-color="#ff9a2e"/><stop offset="0.75" stop-color="#ff4f3a"/><stop offset="1" stop-color="#e5197f"/></linearGradient></defs><path d="M36 4 Q50 16 47 32 Q43 48 25 49 Q6 48 3 31 Q2 22 7 15 Q7 22 11 24 Q12 14 22 9 Q19 15 22 17 Q30 12 36 4 Z" fill="url(#ffg)"/><circle cx="27" cy="29" r="10.5" fill="#8a3fd8"/><circle cx="24" cy="33" r="6.5" fill="#3d5fd8" opacity="0.75"/><path d="M10 20 Q18 14 30 19 Q20 19 17 26 Z" fill="#ffb83a"/></svg><svg style="left:11px;top:100px" width="45" height="46" viewBox="0 0 45 46"><rect x="1" y="1" width="42" height="43" rx="3" fill="#b9b8b3"/><rect x="1" y="1" width="42" height="8" rx="2" fill="#d8d7d3"/><rect x="4" y="9" width="36" height="10" fill="#3b3330"/><rect x="6" y="11" width="32" height="6" fill="#e8653b"/><rect x="6" y="14" width="32" height="3" fill="#f3c98b"/><rect x="1" y="19" width="42" height="25" fill="#c5c4c0"/><rect x="15" y="27" width="14" height="7" rx="1" fill="#eeeeec" stroke="#6d6c68" stroke-width="1.2"/></svg><svg style="left:12px;top:162px" width="42" height="50" viewBox="0 0 42 50"><path d="M1 1 H28 L41 13 V49 H1 Z" fill="#1a73b8"/><path d="M4 4 H27 L38 14 V46 H4 Z" fill="#fff"/><path d="M29 1 L41 1 L41 13 Z" fill="#2a9ad8"/><rect x="8" y="20" width="8" height="2" fill="#1a73b8"/><rect x="8" y="25" width="8" height="2" fill="#1a73b8"/><rect x="8" y="30" width="24" height="2" fill="#1a73b8"/><rect x="8" y="35" width="24" height="2" fill="#1a73b8"/><rect x="8" y="40" width="18" height="2" fill="#1a73b8"/><rect x="18" y="18" width="14" height="10" fill="none" stroke="#1a73b8" stroke-width="1.6"/><path d="M19 27 L23 22 L26 25 L28 23 L31 27 Z" fill="#1a73b8"/></svg><div class="a" style="left:2px;top:220px;width:62px;height:62px;border-radius:4px;background:#5e5753"></div><svg style="left:1px;top:238px" width="8" height="26"><circle cx="4" cy="5" r="2.2" fill="#e95420"/><circle cx="4" cy="13" r="2.2" fill="#e95420"/><circle cx="4" cy="21" r="2.2" fill="#e95420"/></svg><svg style="left:9.0px;top:227.5px" width="47.0" height="47.0" viewBox="9.0 227.5 47.0 47.0"><path d="M32.50 251.00 L13.01 239.75 A22.5 22.5 0 0 1 51.99 239.75 Z" fill="#db4437"/><path d="M32.50 251.00 L51.99 239.75 A22.5 22.5 0 0 1 32.50 273.50 Z" fill="#f4c20d"/><path d="M32.50 251.00 L32.50 273.50 A22.5 22.5 0 0 1 13.01 239.75 Z" fill="#0f9d58"/><circle cx="32.5" cy="251" r="11.25" fill="#fff"/><circle cx="32.5" cy="251" r="9.45" fill="#4285f4"/></svg><svg style="left:10px;top:297px" width="46" height="39" viewBox="0 0 46 39"><rect x="0.5" y="0.5" width="45" height="38" rx="2" fill="#c9c8c4"/><rect x="3" y="3" width="40" height="33" fill="#2b2b2b"/><rect x="3" y="22" width="40" height="14" fill="#1f1f1f"/><path d="M8 9 L13 12 L8 15" stroke="#fff" stroke-width="1.8" fill="none"/><rect x="15" y="16" width="8" height="2" fill="#fff"/></svg><svg style="left:10px;top:354px" width="48" height="44" viewBox="0 0 48 44"><path d="M40 1 L14 30" stroke="#e9521f" stroke-width="2.5"/><path d="M14 30 L6 38 Q3 42 1 42 Q5 40 8 36 Z" fill="#333"/><path d="M16 28 L8 37" stroke="#777" stroke-width="4"/><rect x="27" y="14" width="15" height="27" rx="2" fill="#e8ecef"/><rect x="29" y="10" width="11" height="6" fill="#4a78b5"/><rect x="27" y="21" width="15" height="8" fill="#97b5d8"/><rect x="25" y="39" width="20" height="4" fill="#cfd3d6"/></svg><svg style="left:11px;top:424px" width="45" height="37" viewBox="0 0 45 37"><rect x="0.5" y="4" width="44" height="32" rx="3" fill="#c8c8c6"/><rect x="4" y="0.5" width="12" height="5" rx="2" fill="#d9d9d7"/><circle cx="27" cy="20" r="11" fill="#e6e6e4" stroke="#8b8b89" stroke-width="1.5"/><circle cx="27" cy="20" r="6.5" fill="#28324a"/><circle cx="27" cy="20" r="3" fill="#3f67b5"/></svg><svg style="left:11px;top:485px" width="44" height="44" viewBox="0 0 44 44"><rect x="0" y="0" width="44" height="44" rx="3" fill="#ef443b"/><path d="M7 22 L17 12 L27 22 L17 32 Z" fill="#fff"/><path d="M24 12 L34 22 L24 32 L21 29 L28 22 L21 15 Z" fill="#fff"/></svg><svg style="left:17px;top:549px" width="32" height="44" viewBox="0 0 32 44"><rect x="0.5" y="0.5" width="31" height="43" rx="3" fill="#e7e6e2"/><rect x="4" y="4" width="24" height="8" rx="1" fill="#73c076"/><circle cx="7" cy="19" r="2.8" fill="#6b6b69"/><circle cx="7" cy="27" r="2.8" fill="#6b6b69"/><circle cx="7" cy="35" r="2.8" fill="#6b6b69"/><circle cx="15" cy="19" r="2.8" fill="#6b6b69"/><circle cx="15" cy="27" r="2.8" fill="#6b6b69"/><circle cx="15" cy="35" r="2.8" fill="#6b6b69"/><circle cx="23" cy="19" r="2.8" fill="#6b6b69"/><rect x="20.5" y="24" width="7" height="14" rx="2" fill="#f37e2a"/></svg><svg style="left:14px;top:849px" width="40" height="40"><circle cx="7.0" cy="7" r="3.1" fill="#ededeb"/><circle cx="7.0" cy="19" r="3.1" fill="#ededeb"/><circle cx="7.0" cy="31" r="3.1" fill="#ededeb"/><circle cx="18.8" cy="7" r="3.1" fill="#ededeb"/><circle cx="18.8" cy="19" r="3.1" fill="#ededeb"/><circle cx="18.8" cy="31" r="3.1" fill="#ededeb"/><circle cx="30.6" cy="7" r="3.1" fill="#ededeb"/><circle cx="30.6" cy="19" r="3.1" fill="#ededeb"/><circle cx="30.6" cy="31" r="3.1" fill="#ededeb"/></svg><div class="a" style="left:67px;top:27px;width:1533px;height:34px;background:#3a3834"></div><svg style="left:67px;top:27px" width="260" height="35" viewBox="67 27 260 35"><path d="M67 61 Q75 61 75 53 V35 Q75 28 82 28 H308 Q315 28 315 35 V53 Q315 61 323 61 Z" fill="#eeeeec"/></svg><svg style="left:86px;top:35px" width="17" height="17" viewBox="0 0 17 17"><rect x="0" y="0" width="17" height="17" rx="2" fill="#fff"/><circle cx="8.5" cy="8" r="5.2" fill="none" stroke="#e33b3b" stroke-width="2.6"/><path d="M10 12 L13 15 L12 10 Z" fill="#e33b3b"/></svg><div class="t" style="left:111px;top:36px;font-size:14px;color:#3c3c3c">Trakzee v04.016.01</div><svg style="left:293px;top:38px" width="12" height="12"><path d="M2 2 L10 10 M10 2 L2 10" stroke="#333" stroke-width="1.7"/></svg><svg style="left:329px;top:37px" width="15" height="15"><path d="M7.5 1 V14 M1 7.5 H14" stroke="#8e8c88" stroke-width="1.8"/></svg><svg style="left:1506px;top:33px" width="94" height="24"><circle cx="12" cy="11" r="7.5" fill="#787a73"/><path d="M8.5 9 L15.5 9 L12 13.5 Z" fill="#2f2e2b"/><circle cx="41" cy="11" r="7.5" fill="#5b5a55"/><path d="M37 11 H45" stroke="#2f2e2b" stroke-width="1.5"/><circle cx="61" cy="11" r="7.5" fill="#5b5a55"/><rect x="57.5" y="7.5" width="7" height="7" fill="none" stroke="#2f2e2b" stroke-width="1.3"/><circle cx="81" cy="11" r="7.5" fill="#5b5a55"/><path d="M78 8 L84 14 M84 8 L78 14" stroke="#2f2e2b" stroke-width="1.3"/></svg><div class="a" style="left:67px;top:61px;width:1533px;height:38px;background:#eeeeec"></div><div class="a" style="left:157px;top:98px;width:1443px;height:1.5px;background:#cfcfcb"></div><div class="a" style="left:175px;top:65px;width:1285px;height:28px;border-radius:14px;background:#fff"></div><svg style="left:80px;top:70px" width="18" height="18"><path d="M16 9 H3 M9 3 L3 9 L9 15" stroke="#3c3c3c" stroke-width="1.9" fill="none"/></svg><svg style="left:112px;top:70px" width="18" height="18"><path d="M2 9 H15 M9 3 L15 9 L9 15" stroke="#a0a09e" stroke-width="1.9" fill="none"/></svg><svg style="left:144px;top:70px" width="18" height="18"><path d="M14.5 6 A6.5 6.5 0 1 0 15 11" stroke="#3c3c3c" stroke-width="1.9" fill="none"/><path d="M10.5 2 H16 V7.5 Z" fill="#3c3c3c"/></svg><svg style="left:186px;top:71px" width="12" height="15"><rect x="1" y="6" width="10" height="8" rx="1" fill="#5f6368"/><path d="M3.2 6.5 V4.5 A2.8 2.8 0 0 1 8.8 4.5 V6.5" stroke="#5f6368" stroke-width="1.6" fill="none"/></svg><div class="t" style="left:209px;top:70px;font-size:14.5px;color:#202124">trakzee.uffizio.com<span style="color:#5f6368">/jsp/index.html</span></div><svg style="left:1432px;top:69px" width="20" height="20"><path d="M10 2 L12.4 7.5 L18 8 L13.8 11.8 L15 17.5 L10 14.5 L5 17.5 L6.2 11.8 L2 8 L7.6 7.5 Z" fill="none" stroke="#4a4a48" stroke-width="1.5"/></svg><svg style="left:1472px;top:70px" width="18" height="18"><circle cx="9" cy="9" r="8" fill="#e8453c"/><circle cx="9" cy="9" r="7" fill="#3f7ee8"/><circle cx="9.5" cy="9.5" r="4" fill="#1a3f8f"/></svg><svg style="left:1505px;top:70px" width="18" height="18"><path d="M2 6 H6 A2.2 2.2 0 1 1 10.5 6 H14 V9.5 A2.2 2.2 0 1 1 14 14 V17 H2 Z" fill="#3a3a3a"/></svg><div class="a" style="left:1535px;top:68px;width:22px;height:22px;border-radius:11px;background:#7b8590;color:#fff;font-size:13px;text-align:center;line-height:22px">V</div><svg style="left:1574px;top:70px" width="8" height="18"><circle cx="4" cy="3" r="1.8" fill="#3a3a3a"/><circle cx="4" cy="9" r="1.8" fill="#3a3a3a"/><circle cx="4" cy="15" r="1.8" fill="#3a3a3a"/></svg><div class="a" style="left:67px;top:99px;width:90px;height:801px;background:#011638"></div><svg style="left:73px;top:107px" width="78" height="78" viewBox="73 107 78 78"><circle cx="112" cy="146" r="38" fill="#000" stroke="#3b3b3b" stroke-width="0.8"/><defs><linearGradient id="lgr" x1="0" y1="0" x2="1" y2="1"><stop offset="0" stop-color="#c9cfd2"/><stop offset="0.5" stop-color="#8f979b"/><stop offset="1" stop-color="#b8bfc2"/></linearGradient></defs><path d="M109 111.5 A20.3 20.3 0 0 1 126 143 L124.5 157.5 L117 150 A20.3 20.3 0 1 1 109 111.5 Z" fill="url(#lgr)"/><circle cx="109.5" cy="131" r="12.3" fill="#000"/><text x="112" y="177" font-family="Liberation Sans" font-size="8.5" font-weight="bold" fill="#fff" text-anchor="middle">tr<tspan fill="#e03b3b">●</tspan>kzee</text></svg><svg style="left:74px;top:214px" width="30" height="28"><path d="M14 2 A6.5 7 0 1 1 13.9 2 Z" fill="none" stroke="#fff" stroke-width="1.4"/><path d="M9.5 15 Q2 17 2 24 V26 H26 V24 Q26 17 18.5 15" fill="none" stroke="#fff" stroke-width="1.4"/></svg><svg style="left:121px;top:213px" width="28" height="30"><circle cx="13.5" cy="3.6" r="2" fill="none" stroke="#fff" stroke-width="1.2"/><path d="M4.5 23 Q7 20.5 7 15 Q7 5.8 13.5 5.8 Q20 5.8 20 15 Q20 20.5 22.5 23" fill="none" stroke="#fff" stroke-width="1.3"/><ellipse cx="13.5" cy="23" rx="10.5" ry="2.6" fill="none" stroke="#fff" stroke-width="1.2"/><path d="M11 25.4 Q13.5 28.6 16 25.4" fill="none" stroke="#fff" stroke-width="1.2"/></svg><svg style="left:96px;top:279px" width="32" height="28"><path d="M4 25.6 A14.4 14.4 0 1 1 27.5 25.6 Z" fill="none" stroke="#fff" stroke-width="1.4"/><path d="M6 16 A10 10 0 0 1 25.6 16" fill="none" stroke="#fff" stroke-width="1.3"/><path d="M20.5 12.3 L18.4 20 A3.8 3.8 0 1 1 12.6 15.6 Z" fill="none" stroke="#fff" stroke-width="1.2" stroke-linejoin="round"/></svg><div class="t" style="left:67px;width:90px;text-align:center;top:310px;font-size:13px;color:#e8ecf3">Dashboard</div><div class="a" style="left:67px;top:343px;width:90px;height:80px;background:#0141a8"></div><svg style="left:101px;top:360px" width="22" height="27"><path d="M11 21 Q3 12 3 9 A8 8 0 0 1 19 9 Q19 12 11 21 Z" fill="none" stroke="#fff" stroke-width="1.5"/><circle cx="11" cy="9" r="2.8" fill="none" stroke="#fff" stroke-width="1.4"/><path d="M6 17 L2 25 L7 23 L11 25 L15 23 L20 25 L16 17" fill="none" stroke="#fff" stroke-width="1.4"/></svg><div class="t" style="left:67px;width:90px;text-align:center;top:390px;font-size:13px;color:#e8ecf3">Tracking</div><svg style="left:101px;top:440px" width="24" height="27"><path d="M6 2 H18 Q21 2 21 5 V21 Q21 24 18 24 H9 L3 19 V5 Q3 2 6 2 Z" fill="none" stroke="#fff" stroke-width="1.5"/><path d="M3 19 H9 V24" fill="none" stroke="#fff" stroke-width="1.3"/><path d="M8 8 H16 M8 11.5 H16 M8 15 H16" stroke="#fff" stroke-width="1.3"/></svg><div class="t" style="left:67px;width:90px;text-align:center;top:470px;font-size:13px;color:#e8ecf3">Reports</div><svg style="left:98px;top:519px" width="28" height="28"><path d="M12 5 A11 11 0 1 0 23 16 H12 Z" fill="none" stroke="#fff" stroke-width="1.5"/><path d="M15 2 A11 11 0 0 1 26 13 H15 Z" fill="none" stroke="#fff" stroke-width="1.5"/></svg><div class="t" style="left:67px;width:90px;text-align:center;top:550px;font-size:13px;color:#e8ecf3">Chart</div><svg style="left:99px;top:600px" width="26" height="26"><path d="M21.81 9.44 L24.74 10.51 L24.74 15.49 L21.81 16.56 L21.74 16.71 L23.06 19.54 L19.54 23.06 L16.71 21.74 L16.56 21.81 L15.49 24.74 L10.51 24.74 L9.44 21.81 L9.29 21.74 L6.46 23.06 L2.94 19.54 L4.26 16.71 L4.19 16.56 L1.26 15.49 L1.26 10.51 L4.19 9.44 L4.26 9.29 L2.94 6.46 L6.46 2.94 L9.29 4.26 L9.44 4.19 L10.51 1.26 L15.49 1.26 L16.56 4.19 L16.71 4.26 L19.54 2.94 L23.06 6.46 L21.74 9.29 Z" fill="none" stroke="#fff" stroke-width="1.4"/><circle cx="13" cy="13" r="4.5" fill="none" stroke="#fff" stroke-width="1.5"/></svg><div class="t" style="left:67px;width:90px;text-align:center;top:630px;font-size:13px;color:#e8ecf3">Settings</div><svg style="left:476px;top:196px" width="12" height="68"><path d="M0 2 L10 9 V59 L0 67 Z" fill="#a9aca0"/><path d="M8 27 L4.5 33 L8 39" stroke="#fff" stroke-width="1" fill="none"/></svg><div class="a" style="left:167px;top:109px;width:310px;height:772px;background:#fff;border-radius:7px;box-shadow:0 1px 4px rgba(0,0,0,0.18)"></div><div class="a" style="left:167px;top:109px;width:310px;height:32px;background:#0f3f8c;border-radius:7px 7px 0 0"></div><div class="a" style="left:250px;top:113px;width:84px;height:28px;background:#fff"></div><svg style="left:177px;top:118px" width="16" height="16"><path d="M15 1 L1 7 L8 8 L9 15 Z" fill="#fff"/></svg><svg style="left:205px;top:118px" width="12" height="16"><rect x="1" y="2.5" width="10" height="12.5" rx="1" fill="#fff"/><rect x="3.5" y="1" width="5" height="3" rx="1" fill="#fff" stroke="#0f3f8c" stroke-width="0.8"/><path d="M3 7 H9 M3 9.5 H9 M3 12 H9" stroke="#0f3f8c" stroke-width="0.9"/></svg><svg style="left:229px;top:117px" width="16" height="17"><circle cx="8" cy="4" r="3" fill="none" stroke="#fff" stroke-width="1.6"/><path d="M8 7 V11" stroke="#fff" stroke-width="1.5"/><path d="M1 16 L3 10 H13 L15 16 Z" fill="#fff"/><path d="M6 10 L5 16 M10 10 L11 16 M2 13 H14" stroke="#0f3f8c" stroke-width="0.7"/></svg><svg style="left:257px;top:119px" width="12" height="14"><path d="M2.5 1 V13 M6 1 V13 M9.5 1 V13 M0.5 4.5 H11.5 M0.5 9.5 H11.5" stroke="#2768b6" stroke-width="1.8"/></svg><div class="t" style="left:274px;top:120px;font-size:13px;color:#3a7bc3">Geofence</div><div class="a" style="left:172px;top:146px;width:236px;height:28px;background:#f3f3f1;border:1px solid #e4e4e1"></div><div class="t" style="left:185px;top:155px;font-size:11.5px;font-weight:bold;color:#777">Search</div><svg style="left:389px;top:152px" width="16" height="16"><circle cx="6.5" cy="6.5" r="4.8" fill="none" stroke="#222" stroke-width="1.6"/><path d="M10 10 L14.5 14.5" stroke="#222" stroke-width="2.4" stroke-linecap="round"/></svg><div class="a" style="left:414px;top:146px;width:28px;height:28px;background:#f3f3f1;border:1px solid #e4e4e1"></div><svg style="left:420px;top:152px" width="16" height="16"><path d="M13 6.5 A5.5 5.5 0 0 0 3 5.5 M3 9.5 A5.5 5.5 0 0 0 13 10.5" fill="none" stroke="#222" stroke-width="1.7"/><path d="M14.5 2.5 V7.5 H9.5 Z M1.5 13.5 V8.5 H6.5 Z" fill="#222"/></svg><div class="a" style="left:444px;top:146px;width:28px;height:28px;background:#f3f3f1;border:1px solid #e4e4e1"></div><svg style="left:449px;top:150px" width="20" height="20"><path d="M3 5 V18 M7.5 5 V18 M12 8 V18 M1 10 H14 M1 15 H14" stroke="#111" stroke-width="2.2"/><circle cx="14" cy="6" r="4.6" fill="#111" stroke="#f3f3f1" stroke-width="1"/><path d="M14 3.5 V8.5 M11.5 6 H16.5" stroke="#fff" stroke-width="1.5"/></svg><div class="a" style="left:172px;top:179px;width:300px;height:20px;background:#f3f3f1"></div><div class="a" style="left:181px;top:181px;width:12px;height:12px;border:1px solid #b7c2b2;background:#fff"></div><div class="a" style="left:203px;top:181px;width:1px;height:18px;background:#e3e3df"></div><div class="t" style="left:204px;width:268px;text-align:center;top:183px;font-size:11.5px;font-weight:bold;color:#444">Geofence Name</div><div class="a" style="left:172px;top:204px;width:294px;height:26px;background:#d0d3d4"></div><div class="a" style="left:182px;top:210px;width:12px;height:12px;border:1px solid #b7c2b2;background:#fff"></div><div class="t" style="left:210px;top:211px;font-size:11.5px;font-weight:bold;color:#333">Your Company</div><div class="t" style="left:411px;top:211px;font-size:11.5px;color:#333;letter-spacing:0.1px">[ 44 ]</div><div class="a" style="left:443px;top:216px;width:10px;height:1.5px;background:#666"></div><div class="a" style="left:466px;top:204px;width:6px;height:357px;background:#c0cabb"></div><div class="a" style="left:172px;top:230px;width:294px;height:609px;overflow:hidden"><div class="a" style="left:9px;top:6px;width:12px;height:12px;border:1px solid #b7c2b2;background:#fff"></div><svg style="left:38.5px;top:7px" width="12" height="12"><polygon points="4.49,0.29 10.62,3.28 9.67,10.03 2.96,11.21 -0.24,5.19" fill="#0d7ef0" stroke="#0d7ef0" stroke-width="1" stroke-linejoin="round"/></svg><div class="t" style="left:61px;top:8px;font-size:11px;font-weight:bold;color:#15477f">Maize</div><svg style="left:226px;top:6px" width="56" height="14" viewBox="0 0 56 14"><circle cx="7" cy="7" r="5.4" fill="none" stroke="#111" stroke-width="1.7"/><path d="M10.4 3.6 L3.4 6.6 L6.5 7.5 L7.4 10.6 Z" fill="#111"/><path d="M27.5 2.5 H22 V12 H31 V7.5" fill="none" stroke="#111" stroke-width="1.8"/><path d="M32.5 1.2 L26.2 7.6 L25.5 9 L27 8.4 L33.4 2.1 Z" fill="#111" stroke="#111" stroke-width="1"/><rect x="42" y="2" width="10" height="1.8" fill="#111"/><rect x="45" y="0.8" width="4" height="1.5" fill="#111"/><path d="M43 4.3 H51 V11.8 Q51 13 49.8 13 H44.2 Q43 13 43 11.8 Z" fill="#111"/><rect x="45" y="5.5" width="1.2" height="6" fill="#fff"/><rect x="47.8" y="5.5" width="1.2" height="6" fill="#fff"/></svg><div class="a" style="left:0px;top:25px;width:278px;height:1px;background:#efefe9"></div><div class="a" style="left:9px;top:31px;width:12px;height:12px;border:1px solid #b7c2b2;background:#fff"></div><div class="a" style="left:39.0px;top:33px;width:10px;height:10px;background:#117a26"></div><div class="t" style="left:61px;top:33px;font-size:11px;font-weight:bold;color:#15477f">DemoG</div><svg style="left:226px;top:31px" width="56" height="14" viewBox="0 0 56 14"><circle cx="7" cy="7" r="5.4" fill="none" stroke="#111" stroke-width="1.7"/><path d="M10.4 3.6 L3.4 6.6 L6.5 7.5 L7.4 10.6 Z" fill="#111"/><path d="M27.5 2.5 H22 V12 H31 V7.5" fill="none" stroke="#111" stroke-width="1.8"/><path d="M32.5 1.2 L26.2 7.6 L25.5 9 L27 8.4 L33.4 2.1 Z" fill="#111" stroke="#111" stroke-width="1"/><rect x="42" y="2" width="10" height="1.8" fill="#111"/><rect x="45" y="0.8" width="4" height="1.5" fill="#111"/><path d="M43 4.3 H51 V11.8 Q51 13 49.8 13 H44.2 Q43 13 43 11.8 Z" fill="#111"/><rect x="45" y="5.5" width="1.2" height="6" fill="#fff"/><rect x="47.8" y="5.5" width="1.2" height="6" fill="#fff"/></svg><div class="a" style="left:0px;top:50px;width:278px;height:1px;background:#efefe9"></div><div class="a" style="left:9px;top:56px;width:12px;height:12px;border:1px solid #b7c2b2;background:#fff"></div><div class="a" style="left:39.0px;top:58px;width:10px;height:10px;background:#f0272a"></div><div class="t" style="left:61px;top:58px;font-size:11px;font-weight:bold;color:#15477f">NewG</div><svg style="left:226px;top:56px" width="56" height="14" viewBox="0 0 56 14"><circle cx="7" cy="7" r="5.4" fill="none" stroke="#111" stroke-width="1.7"/><path d="M10.4 3.6 L3.4 6.6 L6.5 7.5 L7.4 10.6 Z" fill="#111"/><path d="M27.5 2.5 H22 V12 H31 V7.5" fill="none" stroke="#111" stroke-width="1.8"/><path d="M32.5 1.2 L26.2 7.6 L25.5 9 L27 8.4 L33.4 2.1 Z" fill="#111" stroke="#111" stroke-width="1"/><rect x="42" y="2" width="10" height="1.8" fill="#111"/><rect x="45" y="0.8" width="4" height="1.5" fill="#111"/><path d="M43 4.3 H51 V11.8 Q51 13 49.8 13 H44.2 Q43 13 43 11.8 Z" fill="#111"/><rect x="45" y="5.5" width="1.2" height="6" fill="#fff"/><rect x="47.8" y="5.5" width="1.2" height="6" fill="#fff"/></svg><div class="a" style="left:0px;top:75px;width:278px;height:1px;background:#efefe9"></div><div class="a" style="left:9px;top:81px;width:12px;height:12px;border:1px solid #b7c2b2;background:#fff"></div><svg style="left:38.5px;top:82px" width="12" height="12"><polygon points="4.49,0.29 10.62,3.28 9.67,10.03 2.96,11.21 -0.24,5.19" fill="#0d7ef0" stroke="#0d7ef0" stroke-width="1" stroke-linejoin="round"/></svg><div class="t" style="left:61px;top:83px;font-size:11px;font-weight:bold;color:#15477f">Geofence 611</div><svg style="left:226px;top:81px" width="56" height="14" viewBox="0 0 56 14"><circle cx="7" cy="7" r="5.4" fill="none" stroke="#111" stroke-width="1.7"/><path d="M10.4 3.6 L3.4 6.6 L6.5 7.5 L7.4 10.6 Z" fill="#111"/><path d="M27.5 2.5 H22 V12 H31 V7.5" fill="none" stroke="#111" stroke-width="1.8"/><path d="M32.5 1.2 L26.2 7.6 L25.5 9 L27 8.4 L33.4 2.1 Z" fill="#111" stroke="#111" stroke-width="1"/><rect x="42" y="2" width="10" height="1.8" fill="#111"/><rect x="45" y="0.8" width="4" height="1.5" fill="#111"/><path d="M43 4.3 H51 V11.8 Q51 13 49.8 13 H44.2 Q43 13 43 11.8 Z" fill="#111"/><rect x="45" y="5.5" width="1.2" height="6" fill="#fff"/><rect x="47.8" y="5.5" width="1.2" height="6" fill="#fff"/></svg><div class="a" style="left:0px;top:100px;width:278px;height:1px;background:#efefe9"></div><div class="a" style="left:9px;top:106px;width:12px;height:12px;border:1px solid #b7c2b2;background:#fff"></div><div class="a" style="left:38.5px;top:107.5px;width:11px;height:11px;border-radius:6px;background:#0d7ef0"></div><div class="t" style="left:61px;top:108px;font-size:11px;font-weight:bold;color:#15477f">Geofence 500</div><svg style="left:226px;top:106px" width="56" height="14" viewBox="0 0 56 14"><circle cx="7" cy="7" r="5.4" fill="none" stroke="#111" stroke-width="1.7"/><path d="M10.4 3.6 L3.4 6.6 L6.5 7.5 L7.4 10.6 Z" fill="#111"/><path d="M27.5 2.5 H22 V12 H31 V7.5" fill="none" stroke="#111" stroke-width="1.8"/><path d="M32.5 1.2 L26.2 7.6 L25.5 9 L27 8.4 L33.4 2.1 Z" fill="#111" stroke="#111" stroke-width="1"/><rect x="42" y="2" width="10" height="1.8" fill="#111"/><rect x="45" y="0.8" width="4" height="1.5" fill="#111"/><path d="M43 4.3 H51 V11.8 Q51 13 49.8 13 H44.2 Q43 13 43 11.8 Z" fill="#111"/><rect x="45" y="5.5" width="1.2" height="6" fill="#fff"/><rect x="47.8" y="5.5" width="1.2" height="6" fill="#fff"/></svg><div class="a" style="left:0px;top:125px;width:278px;height:1px;background:#efefe9"></div><div class="a" style="left:9px;top:131px;width:12px;height:12px;border:1px solid #b7c2b2;background:#fff"></div><div class="a" style="left:39.0px;top:133px;width:10px;height:10px;background:#117a26"></div><div class="t" style="left:61px;top:133px;font-size:11px;font-weight:bold;color:#15477f">Geofence 450</div><svg style="left:226px;top:131px" width="56" height="14" viewBox="0 0 56 14"><circle cx="7" cy="7" r="5.4" fill="none" stroke="#111" stroke-width="1.7"/><path d="M10.4 3.6 L3.4 6.6 L6.5 7.5 L7.4 10.6 Z" fill="#111"/><path d="M27.5 2.5 H22 V12 H31 V7.5" fill="none" stroke="#111" stroke-width="1.8"/><path d="M32.5 1.2 L26.2 7.6 L25.5 9 L27 8.4 L33.4 2.1 Z" fill="#111" stroke="#111" stroke-width="1"/><rect x="42" y="2" width="10" height="1.8" fill="#111"/><rect x="45" y="0.8" width="4" height="1.5" fill="#111"/><path d="M43 4.3 H51 V11.8 Q51 13 49.8 13 H44.2 Q43 13 43 11.8 Z" fill="#111"/><rect x="45" y="5.5" width="1.2" height="6" fill="#fff"/><rect x="47.8" y="5.5" width="1.2" height="6" fill="#fff"/></svg><div class="a" style="left:0px;top:150px;width:278px;height:1px;background:#efefe9"></div><div class="a" style="left:9px;top:156px;width:12px;height:12px;border:1px solid #b7c2b2;background:#fff"></div><div class="a" style="left:38.5px;top:157.5px;width:11px;height:11px;border-radius:6px;background:#f0272a"></div><div class="t" style="left:61px;top:158px;font-size:11px;font-weight:bold;color:#15477f">Geofence 300</div><svg style="left:226px;top:156px" width="56" height="14" viewBox="0 0 56 14"><circle cx="7" cy="7" r="5.4" fill="none" stroke="#111" stroke-width="1.7"/><path d="M10.4 3.6 L3.4 6.6 L6.5 7.5 L7.4 10.6 Z" fill="#111"/><path d="M27.5 2.5 H22 V12 H31 V7.5" fill="none" stroke="#111" stroke-width="1.8"/><path d="M32.5 1.2 L26.2 7.6 L25.5 9 L27 8.4 L33.4 2.1 Z" fill="#111" stroke="#111" stroke-width="1"/><rect x="42" y="2" width="10" height="1.8" fill="#111"/><rect x="45" y="0.8" width="4" height="1.5" fill="#111"/><path d="M43 4.3 H51 V11.8 Q51 13 49.8 13 H44.2 Q43 13 43 11.8 Z" fill="#111"/><rect x="45" y="5.5" width="1.2" height="6" fill="#fff"/><rect x="47.8" y="5.5" width="1.2" height="6" fill="#fff"/></svg><div class="a" style="left:0px;top:175px;width:278px;height:1px;background:#efefe9"></div><div class="a" style="left:9px;top:181px;width:12px;height:12px;border:1px solid #b7c2b2;background:#fff"></div><svg style="left:38.5px;top:182px" width="12" height="12"><polygon points="4.49,0.29 10.62,3.28 9.67,10.03 2.96,11.21 -0.24,5.19" fill="#117a26" stroke="#117a26" stroke-width="1" stroke-linejoin="round"/></svg><div class="t" style="left:61px;top:183px;font-size:11px;font-weight:bold;color:#15477f">Geofence 1000</div><svg style="left:226px;top:181px" width="56" height="14" viewBox="0 0 56 14"><circle cx="7" cy="7" r="5.4" fill="none" stroke="#111" stroke-width="1.7"/><path d="M10.4 3.6 L3.4 6.6 L6.5 7.5 L7.4 10.6 Z" fill="#111"/><path d="M27.5 2.5 H22 V12 H31 V7.5" fill="none" stroke="#111" stroke-width="1.8"/><path d="M32.5 1.2 L26.2 7.6 L25.5 9 L27 8.4 L33.4 2.1 Z" fill="#111" stroke="#111" stroke-width="1"/><rect x="42" y="2" width="10" height="1.8" fill="#111"/><rect x="45" y="0.8" width="4" height="1.5" fill="#111"/><path d="M43 4.3 H51 V11.8 Q51 13 49.8 13 H44.2 Q43 13 43 11.8 Z" fill="#111"/><rect x="45" y="5.5" width="1.2" height="6" fill="#fff"/><rect x="47.8" y="5.5" width="1.2" height="6" fill="#fff"/></svg><div class="a" style="left:0px;top:200px;width:278px;height:1px;background:#efefe9"></div><div class="a" style="left:9px;top:206px;width:12px;height:12px;border:1px solid #b7c2b2;background:#fff"></div><div class="a" style="left:39.0px;top:208px;width:10px;height:10px;background:#0d7ef0"></div><div class="t" style="left:61px;top:208px;font-size:11px;font-weight:bold;color:#15477f">Geofence 999</div><svg style="left:226px;top:206px" width="56" height="14" viewBox="0 0 56 14"><circle cx="7" cy="7" r="5.4" fill="none" stroke="#111" stroke-width="1.7"/><path d="M10.4 3.6 L3.4 6.6 L6.5 7.5 L7.4 10.6 Z" fill="#111"/><path d="M27.5 2.5 H22 V12 H31 V7.5" fill="none" stroke="#111" stroke-width="1.8"/><path d="M32.5 1.2 L26.2 7.6 L25.5 9 L27 8.4 L33.4 2.1 Z" fill="#111" stroke="#111" stroke-width="1"/><rect x="42" y="2" width="10" height="1.8" fill="#111"/><rect x="45" y="0.8" width="4" height="1.5" fill="#111"/><path d="M43 4.3 H51 V11.8 Q51 13 49.8 13 H44.2 Q43 13 43 11.8 Z" fill="#111"/><rect x="45" y="5.5" width="1.2" height="6" fill="#fff"/><rect x="47.8" y="5.5" width="1.2" height="6" fill="#fff"/></svg><div class="a" style="left:0px;top:225px;width:278px;height:1px;background:#efefe9"></div><div class="a" style="left:9px;top:231px;width:12px;height:12px;border:1px solid #b7c2b2;background:#fff"></div><svg style="left:38.5px;top:232px" width="12" height="12"><polygon points="4.49,0.29 10.62,3.28 9.67,10.03 2.96,11.21 -0.24,5.19" fill="#117a26" stroke="#117a26" stroke-width="1" stroke-linejoin="round"/></svg><div class="t" style="left:61px;top:233px;font-size:11px;font-weight:bold;color:#15477f">Geofence 321</div><svg style="left:226px;top:231px" width="56" height="14" viewBox="0 0 56 14"><circle cx="7" cy="7" r="5.4" fill="none" stroke="#111" stroke-width="1.7"/><path d="M10.4 3.6 L3.4 6.6 L6.5 7.5 L7.4 10.6 Z" fill="#111"/><path d="M27.5 2.5 H22 V12 H31 V7.5" fill="none" stroke="#111" stroke-width="1.8"/><path d="M32.5 1.2 L26.2 7.6 L25.5 9 L27 8.4 L33.4 2.1 Z" fill="#111" stroke="#111" stroke-width="1"/><rect x="42" y="2" width="10" height="1.8" fill="#111"/><rect x="45" y="0.8" width="4" height="1.5" fill="#111"/><path d="M43 4.3 H51 V11.8 Q51 13 49.8 13 H44.2 Q43 13 43 11.8 Z" fill="#111"/><rect x="45" y="5.5" width="1.2" height="6" fill="#fff"/><rect x="47.8" y="5.5" width="1.2" height="6" fill="#fff"/></svg><div class="a" style="left:0px;top:250px;width:278px;height:1px;background:#efefe9"></div><div class="a" style="left:9px;top:256px;width:12px;height:12px;border:1px solid #b7c2b2;background:#fff"></div><svg style="left:38.5px;top:257px" width="12" height="12"><polygon points="4.49,0.29 10.62,3.28 9.67,10.03 2.96,11.21 -0.24,5.19" fill="#0d7ef0" stroke="#0d7ef0" stroke-width="1" stroke-linejoin="round"/></svg><div class="t" style="left:61px;top:258px;font-size:11px;font-weight:bold;color:#15477f">Main Office area</div><svg style="left:226px;top:256px" width="56" height="14" viewBox="0 0 56 14"><circle cx="7" cy="7" r="5.4" fill="none" stroke="#111" stroke-width="1.7"/><path d="M10.4 3.6 L3.4 6.6 L6.5 7.5 L7.4 10.6 Z" fill="#111"/><path d="M27.5 2.5 H22 V12 H31 V7.5" fill="none" stroke="#111" stroke-width="1.8"/><path d="M32.5 1.2 L26.2 7.6 L25.5 9 L27 8.4 L33.4 2.1 Z" fill="#111" stroke="#111" stroke-width="1"/><rect x="42" y="2" width="10" height="1.8" fill="#111"/><rect x="45" y="0.8" width="4" height="1.5" fill="#111"/><path d="M43 4.3 H51 V11.8 Q51 13 49.8 13 H44.2 Q43 13 43 11.8 Z" fill="#111"/><rect x="45" y="5.5" width="1.2" height="6" fill="#fff"/><rect x="47.8" y="5.5" width="1.2" height="6" fill="#fff"/></svg><div class="a" style="left:0px;top:275px;width:278px;height:1px;background:#efefe9"></div><div class="a" style="left:9px;top:281px;width:12px;height:12px;border:1px solid #b7c2b2;background:#fff"></div><svg style="left:38.5px;top:282px" width="12" height="12"><polygon points="4.49,0.29 10.62,3.28 9.67,10.03 2.96,11.21 -0.24,5.19" fill="#0d7ef0" stroke="#0d7ef0" stroke-width="1" stroke-linejoin="round"/></svg><div class="t" style="left:61px;top:283px;font-size:11px;font-weight:bold;color:#15477f">Wheat</div><svg style="left:226px;top:281px" width="56" height="14" viewBox="0 0 56 14"><circle cx="7" cy="7" r="5.4" fill="none" stroke="#111" stroke-width="1.7"/><path d="M10.4 3.6 L3.4 6.6 L6.5 7.5 L7.4 10.6 Z" fill="#111"/><path d="M27.5 2.5 H22 V12 H31 V7.5" fill="none" stroke="#111" stroke-width="1.8"/><path d="M32.5 1.2 L26.2 7.6 L25.5 9 L27 8.4 L33.4 2.1 Z" fill="#111" stroke="#111" stroke-width="1"/><rect x="42" y="2" width="10" height="1.8" fill="#111"/><rect x="45" y="0.8" width="4" height="1.5" fill="#111"/><path d="M43 4.3 H51 V11.8 Q51 13 49.8 13 H44.2 Q43 13 43 11.8 Z" fill="#111"/><rect x="45" y="5.5" width="1.2" height="6" fill="#fff"/><rect x="47.8" y="5.5" width="1.2" height="6" fill="#fff"/></svg><div class="a" style="left:0px;top:300px;width:278px;height:1px;background:#efefe9"></div><div class="a" style="left:9px;top:306px;width:12px;height:12px;border:1px solid #b7c2b2;background:#fff"></div><div class="a" style="left:39.0px;top:308px;width:10px;height:10px;background:#0d7ef0"></div><div class="t" style="left:61px;top:308px;font-size:11px;font-weight:bold;color:#15477f">Home</div><svg style="left:226px;top:306px" width="56" height="14" viewBox="0 0 56 14"><circle cx="7" cy="7" r="5.4" fill="none" stroke="#111" stroke-width="1.7"/><path d="M10.4 3.6 L3.4 6.6 L6.5 7.5 L7.4 10.6 Z" fill="#111"/><path d="M27.5 2.5 H22 V12 H31 V7.5" fill="none" stroke="#111" stroke-width="1.8"/><path d="M32.5 1.2 L26.2 7.6 L25.5 9 L27 8.4 L33.4 2.1 Z" fill="#111" stroke="#111" stroke-width="1"/><rect x="42" y="2" width="10" height="1.8" fill="#111"/><rect x="45" y="0.8" width="4" height="1.5" fill="#111"/><path d="M43 4.3 H51 V11.8 Q51 13 49.8 13 H44.2 Q43 13 43 11.8 Z" fill="#111"/><rect x="45" y="5.5" width="1.2" height="6" fill="#fff"/><rect x="47.8" y="5.5" width="1.2" height="6" fill="#fff"/></svg><div class="a" style="left:0px;top:325px;width:278px;height:1px;background:#efefe9"></div><div class="a" style="left:9px;top:331px;width:12px;height:12px;border:1px solid #b7c2b2;background:#fff"></div><svg style="left:38.5px;top:332px" width="12" height="12"><polygon points="4.49,0.29 10.62,3.28 9.67,10.03 2.96,11.21 -0.24,5.19" fill="#0d7ef0" stroke="#0d7ef0" stroke-width="1" stroke-linejoin="round"/></svg><div class="t" style="left:61px;top:333px;font-size:11px;font-weight:bold;color:#15477f">Rice</div><svg style="left:226px;top:331px" width="56" height="14" viewBox="0 0 56 14"><circle cx="7" cy="7" r="5.4" fill="none" stroke="#111" stroke-width="1.7"/><path d="M10.4 3.6 L3.4 6.6 L6.5 7.5 L7.4 10.6 Z" fill="#111"/><path d="M27.5 2.5 H22 V12 H31 V7.5" fill="none" stroke="#111" stroke-width="1.8"/><path d="M32.5 1.2 L26.2 7.6 L25.5 9 L27 8.4 L33.4 2.1 Z" fill="#111" stroke="#111" stroke-width="1"/><rect x="42" y="2" width="10" height="1.8" fill="#111"/><rect x="45" y="0.8" width="4" height="1.5" fill="#111"/><path d="M43 4.3 H51 V11.8 Q51 13 49.8 13 H44.2 Q43 13 43 11.8 Z" fill="#111"/><rect x="45" y="5.5" width="1.2" height="6" fill="#fff"/><rect x="47.8" y="5.5" width="1.2" height="6" fill="#fff"/></svg><div class="a" style="left:0px;top:350px;width:278px;height:1px;background:#efefe9"></div><div class="a" style="left:9px;top:356px;width:12px;height:12px;border:1px solid #b7c2b2;background:#fff"></div><svg style="left:38.5px;top:357px" width="12" height="12"><polygon points="4.49,0.29 10.62,3.28 9.67,10.03 2.96,11.21 -0.24,5.19" fill="#0d7ef0" stroke="#0d7ef0" stroke-width="1" stroke-linejoin="round"/></svg><div class="t" style="left:61px;top:358px;font-size:11px;font-weight:bold;color:#15477f">Pakistan Border</div><svg style="left:226px;top:356px" width="56" height="14" viewBox="0 0 56 14"><circle cx="7" cy="7" r="5.4" fill="none" stroke="#111" stroke-width="1.7"/><path d="M10.4 3.6 L3.4 6.6 L6.5 7.5 L7.4 10.6 Z" fill="#111"/><path d="M27.5 2.5 H22 V12 H31 V7.5" fill="none" stroke="#111" stroke-width="1.8"/><path d="M32.5 1.2 L26.2 7.6 L25.5 9 L27 8.4 L33.4 2.1 Z" fill="#111" stroke="#111" stroke-width="1"/><rect x="42" y="2" width="10" height="1.8" fill="#111"/><rect x="45" y="0.8" width="4" height="1.5" fill="#111"/><path d="M43 4.3 H51 V11.8 Q51 13 49.8 13 H44.2 Q43 13 43 11.8 Z" fill="#111"/><rect x="45" y="5.5" width="1.2" height="6" fill="#fff"/><rect x="47.8" y="5.5" width="1.2" height="6" fill="#fff"/></svg><div class="a" style="left:0px;top:375px;width:278px;height:1px;background:#efefe9"></div><div class="a" style="left:9px;top:381px;width:12px;height:12px;border:1px solid #b7c2b2;background:#fff"></div><div class="a" style="left:39.0px;top:383px;width:10px;height:10px;background:#0d7ef0"></div><div class="t" style="left:61px;top:383px;font-size:11px;font-weight:bold;color:#15477f">test 789</div><svg style="left:226px;top:381px" width="56" height="14" viewBox="0 0 56 14"><circle cx="7" cy="7" r="5.4" fill="none" stroke="#111" stroke-width="1.7"/><path d="M10.4 3.6 L3.4 6.6 L6.5 7.5 L7.4 10.6 Z" fill="#111"/><path d="M27.5 2.5 H22 V12 H31 V7.5" fill="none" stroke="#111" stroke-width="1.8"/><path d="M32.5 1.2 L26.2 7.6 L25.5 9 L27 8.4 L33.4 2.1 Z" fill="#111" stroke="#111" stroke-width="1"/><rect x="42" y="2" width="10" height="1.8" fill="#111"/><rect x="45" y="0.8" width="4" height="1.5" fill="#111"/><path d="M43 4.3 H51 V11.8 Q51 13 49.8 13 H44.2 Q43 13 43 11.8 Z" fill="#111"/><rect x="45" y="5.5" width="1.2" height="6" fill="#fff"/><rect x="47.8" y="5.5" width="1.2" height="6" fill="#fff"/></svg><div class="a" style="left:0px;top:400px;width:278px;height:1px;background:#efefe9"></div><div class="a" style="left:9px;top:406px;width:12px;height:12px;border:1px solid #b7c2b2;background:#fff"></div><div class="a" style="left:39.0px;top:408px;width:10px;height:10px;background:#0d7ef0"></div><div class="t" style="left:61px;top:408px;font-size:11px;font-weight:bold;color:#15477f">tedt 786</div><svg style="left:226px;top:406px" width="56" height="14" viewBox="0 0 56 14"><circle cx="7" cy="7" r="5.4" fill="none" stroke="#111" stroke-width="1.7"/><path d="M10.4 3.6 L3.4 6.6 L6.5 7.5 L7.4 10.6 Z" fill="#111"/><path d="M27.5 2.5 H22 V12 H31 V7.5" fill="none" stroke="#111" stroke-width="1.8"/><path d="M32.5 1.2 L26.2 7.6 L25.5 9 L27 8.4 L33.4 2.1 Z" fill="#111" stroke="#111" stroke-width="1"/><rect x="42" y="2" width="10" height="1.8" fill="#111"/><rect x="45" y="0.8" width="4" height="1.5" fill="#111"/><path d="M43 4.3 H51 V11.8 Q51 13 49.8 13 H44.2 Q43 13 43 11.8 Z" fill="#111"/><rect x="45" y="5.5" width="1.2" height="6" fill="#fff"/><rect x="47.8" y="5.5" width="1.2" height="6" fill="#fff"/></svg><div class="a" style="left:0px;top:425.5px;width:279px;height:24px;background:#d3e3fa"></div><div class="a" style="left:0px;top:425px;width:278px;height:1px;background:#efefe9"></div><div class="a" style="left:9px;top:431px;width:12px;height:12px;border:1px solid #b7c2b2;background:#fff"></div><div class="a" style="left:38.5px;top:432.5px;width:11px;height:11px;border-radius:6px;background:#0d7ef0"></div><div class="t" style="left:61px;top:433px;font-size:11px;font-weight:bold;color:#15477f">testb767</div><svg style="left:226px;top:431px" width="56" height="14" viewBox="0 0 56 14"><circle cx="7" cy="7" r="5.4" fill="none" stroke="#111" stroke-width="1.7"/><path d="M10.4 3.6 L3.4 6.6 L6.5 7.5 L7.4 10.6 Z" fill="#111"/><path d="M27.5 2.5 H22 V12 H31 V7.5" fill="none" stroke="#111" stroke-width="1.8"/><path d="M32.5 1.2 L26.2 7.6 L25.5 9 L27 8.4 L33.4 2.1 Z" fill="#111" stroke="#111" stroke-width="1"/><rect x="42" y="2" width="10" height="1.8" fill="#111"/><rect x="45" y="0.8" width="4" height="1.5" fill="#111"/><path d="M43 4.3 H51 V11.8 Q51 13 49.8 13 H44.2 Q43 13 43 11.8 Z" fill="#111"/><rect x="45" y="5.5" width="1.2" height="6" fill="#fff"/><rect x="47.8" y="5.5" width="1.2" height="6" fill="#fff"/></svg><div class="a" style="left:0px;top:450px;width:278px;height:1px;background:#efefe9"></div><div class="a" style="left:9px;top:456px;width:12px;height:12px;border:1px solid #b7c2b2;background:#fff"></div><div class="a" style="left:38.5px;top:457.5px;width:11px;height:11px;border-radius:6px;background:#0d7ef0"></div><div class="t" style="left:61px;top:458px;font-size:11px;font-weight:bold;color:#15477f">testc444</div><svg style="left:226px;top:456px" width="56" height="14" viewBox="0 0 56 14"><circle cx="7" cy="7" r="5.4" fill="none" stroke="#111" stroke-width="1.7"/><path d="M10.4 3.6 L3.4 6.6 L6.5 7.5 L7.4 10.6 Z" fill="#111"/><path d="M27.5 2.5 H22 V12 H31 V7.5" fill="none" stroke="#111" stroke-width="1.8"/><path d="M32.5 1.2 L26.2 7.6 L25.5 9 L27 8.4 L33.4 2.1 Z" fill="#111" stroke="#111" stroke-width="1"/><rect x="42" y="2" width="10" height="1.8" fill="#111"/><rect x="45" y="0.8" width="4" height="1.5" fill="#111"/><path d="M43 4.3 H51 V11.8 Q51 13 49.8 13 H44.2 Q43 13 43 11.8 Z" fill="#111"/><rect x="45" y="5.5" width="1.2" height="6" fill="#fff"/><rect x="47.8" y="5.5" width="1.2" height="6" fill="#fff"/></svg><div class="a" style="left:0px;top:475px;width:278px;height:1px;background:#efefe9"></div><div class="a" style="left:9px;top:481px;width:12px;height:12px;border:1px solid #b7c2b2;background:#fff"></div><div class="a" style="left:38.5px;top:482.5px;width:11px;height:11px;border-radius:6px;background:#117a26"></div><div class="t" style="left:61px;top:483px;font-size:11px;font-weight:bold;color:#15477f">tested</div><svg style="left:226px;top:481px" width="56" height="14" viewBox="0 0 56 14"><circle cx="7" cy="7" r="5.4" fill="none" stroke="#111" stroke-width="1.7"/><path d="M10.4 3.6 L3.4 6.6 L6.5 7.5 L7.4 10.6 Z" fill="#111"/><path d="M27.5 2.5 H22 V12 H31 V7.5" fill="none" stroke="#111" stroke-width="1.8"/><path d="M32.5 1.2 L26.2 7.6 L25.5 9 L27 8.4 L33.4 2.1 Z" fill="#111" stroke="#111" stroke-width="1"/><rect x="42" y="2" width="10" height="1.8" fill="#111"/><rect x="45" y="0.8" width="4" height="1.5" fill="#111"/><path d="M43 4.3 H51 V11.8 Q51 13 49.8 13 H44.2 Q43 13 43 11.8 Z" fill="#111"/><rect x="45" y="5.5" width="1.2" height="6" fill="#fff"/><rect x="47.8" y="5.5" width="1.2" height="6" fill="#fff"/></svg><div class="a" style="left:0px;top:500px;width:278px;height:1px;background:#efefe9"></div><div class="a" style="left:9px;top:506px;width:12px;height:12px;border:1px solid #b7c2b2;background:#fff"></div><svg style="left:38.5px;top:507px" width="12" height="12"><polygon points="4.49,0.29 10.62,3.28 9.67,10.03 2.96,11.21 -0.24,5.19" fill="#0d7ef0" stroke="#0d7ef0" stroke-width="1" stroke-linejoin="round"/></svg><div class="t" style="left:61px;top:508px;font-size:11px;font-weight:bold;color:#15477f">KSBWD</div><svg style="left:226px;top:506px" width="56" height="14" viewBox="0 0 56 14"><circle cx="7" cy="7" r="5.4" fill="none" stroke="#111" stroke-width="1.7"/><path d="M10.4 3.6 L3.4 6.6 L6.5 7.5 L7.4 10.6 Z" fill="#111"/><path d="M27.5 2.5 H22 V12 H31 V7.5" fill="none" stroke="#111" stroke-width="1.8"/><path d="M32.5 1.2 L26.2 7.6 L25.5 9 L27 8.4 L33.4 2.1 Z" fill="#111" stroke="#111" stroke-width="1"/><rect x="42" y="2" width="10" height="1.8" fill="#111"/><rect x="45" y="0.8" width="4" height="1.5" fill="#111"/><path d="M43 4.3 H51 V11.8 Q51 13 49.8 13 H44.2 Q43 13 43 11.8 Z" fill="#111"/><rect x="45" y="5.5" width="1.2" height="6" fill="#fff"/><rect x="47.8" y="5.5" width="1.2" height="6" fill="#fff"/></svg><div class="a" style="left:0px;top:525px;width:278px;height:1px;background:#efefe9"></div><div class="a" style="left:9px;top:531px;width:12px;height:12px;border:1px solid #b7c2b2;background:#fff"></div><svg style="left:38.5px;top:532px" width="12" height="12"><polygon points="4.49,0.29 10.62,3.28 9.67,10.03 2.96,11.21 -0.24,5.19" fill="#117a26" stroke="#117a26" stroke-width="1" stroke-linejoin="round"/></svg><div class="t" style="left:61px;top:533px;font-size:11px;font-weight:bold;color:#15477f">Agriculture</div><svg style="left:226px;top:531px" width="56" height="14" viewBox="0 0 56 14"><circle cx="7" cy="7" r="5.4" fill="none" stroke="#111" stroke-width="1.7"/><path d="M10.4 3.6 L3.4 6.6 L6.5 7.5 L7.4 10.6 Z" fill="#111"/><path d="M27.5 2.5 H22 V12 H31 V7.5" fill="none" stroke="#111" stroke-width="1.8"/><path d="M32.5 1.2 L26.2 7.6 L25.5 9 L27 8.4 L33.4 2.1 Z" fill="#111" stroke="#111" stroke-width="1"/><rect x="42" y="2" width="10" height="1.8" fill="#111"/><rect x="45" y="0.8" width="4" height="1.5" fill="#111"/><path d="M43 4.3 H51 V11.8 Q51 13 49.8 13 H44.2 Q43 13 43 11.8 Z" fill="#111"/><rect x="45" y="5.5" width="1.2" height="6" fill="#fff"/><rect x="47.8" y="5.5" width="1.2" height="6" fill="#fff"/></svg><div class="a" style="left:0px;top:550px;width:278px;height:1px;background:#efefe9"></div><div class="a" style="left:9px;top:556px;width:12px;height:12px;border:1px solid #b7c2b2;background:#fff"></div><div class="a" style="left:39.0px;top:558px;width:10px;height:10px;background:#0d7ef0"></div><div class="t" style="left:61px;top:558px;font-size:11px;font-weight:bold;color:#15477f">test123</div><svg style="left:226px;top:556px" width="56" height="14" viewBox="0 0 56 14"><circle cx="7" cy="7" r="5.4" fill="none" stroke="#111" stroke-width="1.7"/><path d="M10.4 3.6 L3.4 6.6 L6.5 7.5 L7.4 10.6 Z" fill="#111"/><path d="M27.5 2.5 H22 V12 H31 V7.5" fill="none" stroke="#111" stroke-width="1.8"/><path d="M32.5 1.2 L26.2 7.6 L25.5 9 L27 8.4 L33.4 2.1 Z" fill="#111" stroke="#111" stroke-width="1"/><rect x="42" y="2" width="10" height="1.8" fill="#111"/><rect x="45" y="0.8" width="4" height="1.5" fill="#111"/><path d="M43 4.3 H51 V11.8 Q51 13 49.8 13 H44.2 Q43 13 43 11.8 Z" fill="#111"/><rect x="45" y="5.5" width="1.2" height="6" fill="#fff"/><rect x="47.8" y="5.5" width="1.2" height="6" fill="#fff"/></svg><div class="a" style="left:0px;top:575px;width:278px;height:1px;background:#efefe9"></div><div class="a" style="left:9px;top:581px;width:12px;height:12px;border:1px solid #b7c2b2;background:#fff"></div><svg style="left:38.5px;top:582px" width="12" height="12"><polygon points="4.49,0.29 10.62,3.28 9.67,10.03 2.96,11.21 -0.24,5.19" fill="#0d7ef0" stroke="#0d7ef0" stroke-width="1" stroke-linejoin="round"/></svg><div class="t" style="left:61px;top:583px;font-size:11px;font-weight:bold;color:#15477f">Test 1 June 2021</div><svg style="left:226px;top:581px" width="56" height="14" viewBox="0 0 56 14"><circle cx="7" cy="7" r="5.4" fill="none" stroke="#111" stroke-width="1.7"/><path d="M10.4 3.6 L3.4 6.6 L6.5 7.5 L7.4 10.6 Z" fill="#111"/><path d="M27.5 2.5 H22 V12 H31 V7.5" fill="none" stroke="#111" stroke-width="1.8"/><path d="M32.5 1.2 L26.2 7.6 L25.5 9 L27 8.4 L33.4 2.1 Z" fill="#111" stroke="#111" stroke-width="1"/><rect x="42" y="2" width="10" height="1.8" fill="#111"/><rect x="45" y="0.8" width="4" height="1.5" fill="#111"/><path d="M43 4.3 H51 V11.8 Q51 13 49.8 13 H44.2 Q43 13 43 11.8 Z" fill="#111"/><rect x="45" y="5.5" width="1.2" height="6" fill="#fff"/><rect x="47.8" y="5.5" width="1.2" height="6" fill="#fff"/></svg><div class="a" style="left:0px;top:600px;width:278px;height:1px;background:#efefe9"></div><div class="a" style="left:9px;top:606px;width:12px;height:12px;border:1px solid #b7c2b2;background:#fff"></div><svg style="left:38.5px;top:607px" width="12" height="12"><polygon points="4.49,0.29 10.62,3.28 9.67,10.03 2.96,11.21 -0.24,5.19" fill="#0d7ef0" stroke="#0d7ef0" stroke-width="1" stroke-linejoin="round"/></svg><svg style="left:226px;top:606px" width="56" height="14" viewBox="0 0 56 14"><circle cx="7" cy="7" r="5.4" fill="none" stroke="#111" stroke-width="1.7"/><path d="M10.4 3.6 L3.4 6.6 L6.5 7.5 L7.4 10.6 Z" fill="#111"/><path d="M27.5 2.5 H22 V12 H31 V7.5" fill="none" stroke="#111" stroke-width="1.8"/><path d="M32.5 1.2 L26.2 7.6 L25.5 9 L27 8.4 L33.4 2.1 Z" fill="#111" stroke="#111" stroke-width="1"/><rect x="42" y="2" width="10" height="1.8" fill="#111"/><rect x="45" y="0.8" width="4" height="1.5" fill="#111"/><path d="M43 4.3 H51 V11.8 Q51 13 49.8 13 H44.2 Q43 13 43 11.8 Z" fill="#111"/><rect x="45" y="5.5" width="1.2" height="6" fill="#fff"/><rect x="47.8" y="5.5" width="1.2" height="6" fill="#fff"/></svg></div><div class="a" style="left:172px;top:850px;width:290px;height:25px;background:#0a80f5"></div><div class="a" style="left:267px;top:850px;width:3px;height:25px;background:#fff"></div><div class="a" style="left:363px;top:850px;width:3px;height:25px;background:#fff"></div><div class="a" style="left:172px;top:850px;width:290px;height:25px;box-shadow:0 1px 3px rgba(0,0,0,.3)"></div><div class="t" style="left:172px;width:95px;text-align:center;top:857px;font-size:10.5px;color:#e4eefc">KML</div><div class="t" style="left:270px;width:93px;text-align:center;top:857px;font-size:10.5px;color:#e4eefc">XLS</div><div class="t" style="left:366px;width:96px;text-align:center;top:857px;font-size:10.5px;color:#e4eefc">PDF</div><div class="a" style="left:1558px;top:149px;width:30px;height:124px;border-radius:4px;background:#dcd8d6;box-shadow:0 0 2px rgba(0,0,0,.25);overflow:hidden"><div class="a" style="left:0;top:0;width:30px;height:31px;background:#fff"></div><div class="a" style="left:0;top:62px;width:30px;height:1px;background:#c8c4c2"></div><div class="a" style="left:0;top:93px;width:30px;height:1px;background:#c8c4c2"></div></div><svg style="left:1565px;top:157px" width="16" height="16"><path d="M1 3 L5 1 L10 3 L15 1 V13 L10 15 L5 13 L1 15 Z" fill="none" stroke="#111" stroke-width="1.6"/><path d="M5 1 V13 M10 3 V15" stroke="#111" stroke-width="1.6"/><path d="M5 1 L10 3 V15 L5 13 Z" fill="#111" opacity="0.9"/></svg><svg style="left:1565px;top:188px" width="16" height="16"><circle cx="8" cy="9" r="2.5" fill="#222"/><path d="M4 6 A5 5 0 0 1 12 6 M2 4 A8 8 0 0 1 14 4" fill="none" stroke="#333" stroke-width="1"/><path d="M3 12 Q8 15 13 12" fill="none" stroke="#333" stroke-width="1.3"/></svg><svg style="left:1567px;top:218px" width="12" height="17"><rect x="1.5" y="1" width="9" height="15" rx="2.5" fill="#111"/><circle cx="6" cy="4.5" r="1.4" fill="#dcd8d6"/><circle cx="6" cy="8.5" r="1.4" fill="#dcd8d6"/><circle cx="6" cy="12.5" r="1.4" fill="#dcd8d6"/></svg><svg style="left:1565px;top:250px" width="16" height="16"><path d="M9 1 H15 V7 L7 15 L1 9 Z" fill="#111"/><circle cx="12" cy="4" r="1.3" fill="#dcd8d6"/></svg><div class="a" style="left:1558px;top:286px;width:30px;height:61px;border-radius:4px;background:#fff;box-shadow:0 0 2px rgba(0,0,0,.25)"><div class="a" style="left:0;top:30px;width:30px;height:1px;background:#ddd"></div></div><svg style="left:1566px;top:294px" width="14" height="14"><path d="M7 1 V13 M1 7 H13" stroke="#111" stroke-width="2.4"/></svg><div class="a" style="left:1569px;top:330px;width:8px;height:3px;background:#111"></div><div class="a" style="left:1558px;top:359px;width:30px;height:30px;border-radius:4px;background:#fff;box-shadow:0 0 2px rgba(0,0,0,.25)"></div><svg style="left:1565px;top:366px" width="16" height="16"><rect x="1" y="1" width="14" height="14" fill="none" stroke="#111" stroke-width="1.6"/><path d="M1 1 H4 V12 H15 V15 H1 Z" fill="#111"/></svg><div class="a" style="left:1506px;top:877px;width:82px;height:16px;background:rgba(255,255,255,0.35)"></div><div class="a" style="left:1506px;top:877px;width:82px;height:15px;border:2px solid #666;border-top:none"></div><div class="t" style="left:1512px;top:878px;font-size:11.5px;color:#333">3 km</div><div class="a" style="left:533px;top:287px;width:600px;height:444px;border-radius:6px 6px 0 0;background:#efefec;box-shadow:0 6px 18px rgba(0,0,0,0.28), 0 0 0 1px rgba(0,0,0,0.12)"></div><div class="a" style="left:533px;top:287px;width:600px;height:30px;border-radius:6px 6px 0 0;background:linear-gradient(#52514c,#3e3d39)"></div><div class="t" style="left:533px;width:600px;text-align:center;top:294px;font-size:14.5px;font-weight:bold;color:#dfdbd2;letter-spacing:0.25px">Share your entire screen</div><svg style="left:1068px;top:291px" width="62" height="22"><circle cx="11" cy="11" r="8" fill="#5a5954" stroke="#34332f" stroke-width="1"/><path d="M7 11 H15" stroke="#2b2a27" stroke-width="1.6"/><circle cx="31" cy="11" r="8" fill="#5a5954" stroke="#34332f" stroke-width="1"/><rect x="27.5" y="7.5" width="7" height="7" fill="none" stroke="#2b2a27" stroke-width="1.4"/><circle cx="51" cy="11" r="8" fill="#e0502a" stroke="#8c2f1a" stroke-width="1"/><path d="M48 8 L54 14 M54 8 L48 14" stroke="#3a1a10" stroke-width="1.5"/></svg><div class="t" style="left:549px;top:325px;font-size:15px;color:#3c3c3c;line-height:22px;white-space:normal;width:560px">Scrnli Screenshot &amp; Screen Video Recorder wants to share the contents of your<br>screen.</div><div class="a" style="left:549px;top:375px;width:568px;height:5px;background:#a9ab9f"></div><div class="a" style="left:549px;top:655px;width:362px;height:6px;background:#c9846c"></div><div class="a" style="left:570px;top:398px;width:320px;height:240px;background:#f07548;overflow:hidden"><div class="a" style="left:0;top:30px;width:320px;height:180px;background:#8fbdf0;overflow:hidden"><div class="a" style="left:0;top:0;width:320px;height:12px;background:#3b3a36"></div><div class="a" style="left:13px;top:12px;width:307px;height:7px;background:#f2f2f0"></div><div class="a" style="left:0;top:12px;width:13px;height:168px;background:#40353a"></div><div class="a" style="left:13px;top:19px;width:18px;height:161px;background:#011638"></div><div class="a" style="left:33px;top:22px;width:62px;height:154px;background:#fff"></div><div class="a" style="left:33px;top:22px;width:62px;height:6px;background:#0f3f8c"></div><div class="a" style="left:40px;top:50px;width:10px;height:60px;background:#2a5a9a;opacity:.6"></div><div class="a" style="left:33px;top:168px;width:58px;height:5px;background:#0a80f5"></div><svg style="left:0;top:0" width="320" height="180"><path d="M145 19 L160 60 L175 120 L180 180 L320 180 L320 19 Z" fill="#b4dfc6"/><path d="M145 19 L175 19 L190 60 L165 80 L160 60 Z" fill="#efe8d9"/></svg><div class="a" style="left:237px;top:19px;width:50px;height:70px;background:#f4f4f2"></div><div class="a" style="left:240px;top:70px;width:40px;height:6px;background:#0a80f5"></div></div></div><div class="a" style="left:951px;top:683px;width:79px;height:32px;border-radius:4px;background:#f4f4f1;border:1px solid #c8c6c0"></div><div class="t" style="left:951px;width:79px;text-align:center;top:690px;font-size:15px;color:#3a3a3a;-webkit-text-stroke:0.35px #3a3a3a">Cancel</div><div class="a" style="left:1038px;top:683px;width:79px;height:32px;border-radius:4px;background:#ee7f55;border:1px solid #b8705a"></div><div class="t" style="left:1038px;width:79px;text-align:center;top:690px;font-size:15px;color:#fff;-webkit-text-stroke:0.3px #fff">Share</div></div></div><div class="a" style="left:951px;top:683px;width:79px;height:32px;border-radius:4px;background:#f4f4f1;border:1px solid #c8c6c0"></div><div class="t" style="left:951px;width:79px;text-align:center;top:690px;font-size:15px;color:#3a3a3a;-webkit-text-stroke:0.35px #3a3a3a">Cancel</div><div class="a" style="left:1038px;top:683px;width:79px;height:32px;border-radius:4px;background:#ee7f55;border:1px solid #b8705a"></div><div class="t" style="left:1038px;width:79px;text-align:center;top:690px;font-size:15px;color:#fff;-webkit-text-stroke:0.3px #fff">Share</div><svg style="left:1046px;top:682px" width="30" height="32" viewBox="0 0 30 32"><circle cx="11.3" cy="11.4" r="9" fill="#e6967f" opacity="0.55"/><path d="M11 10.4 L11 28 L14.8 24.4 L17.6 30.6 L20.4 29.4 L17.6 23.2 L22.8 23.2 Z" fill="#fff" stroke="#000" stroke-width="1.5" stroke-linejoin="round"/></svg></body></html>
